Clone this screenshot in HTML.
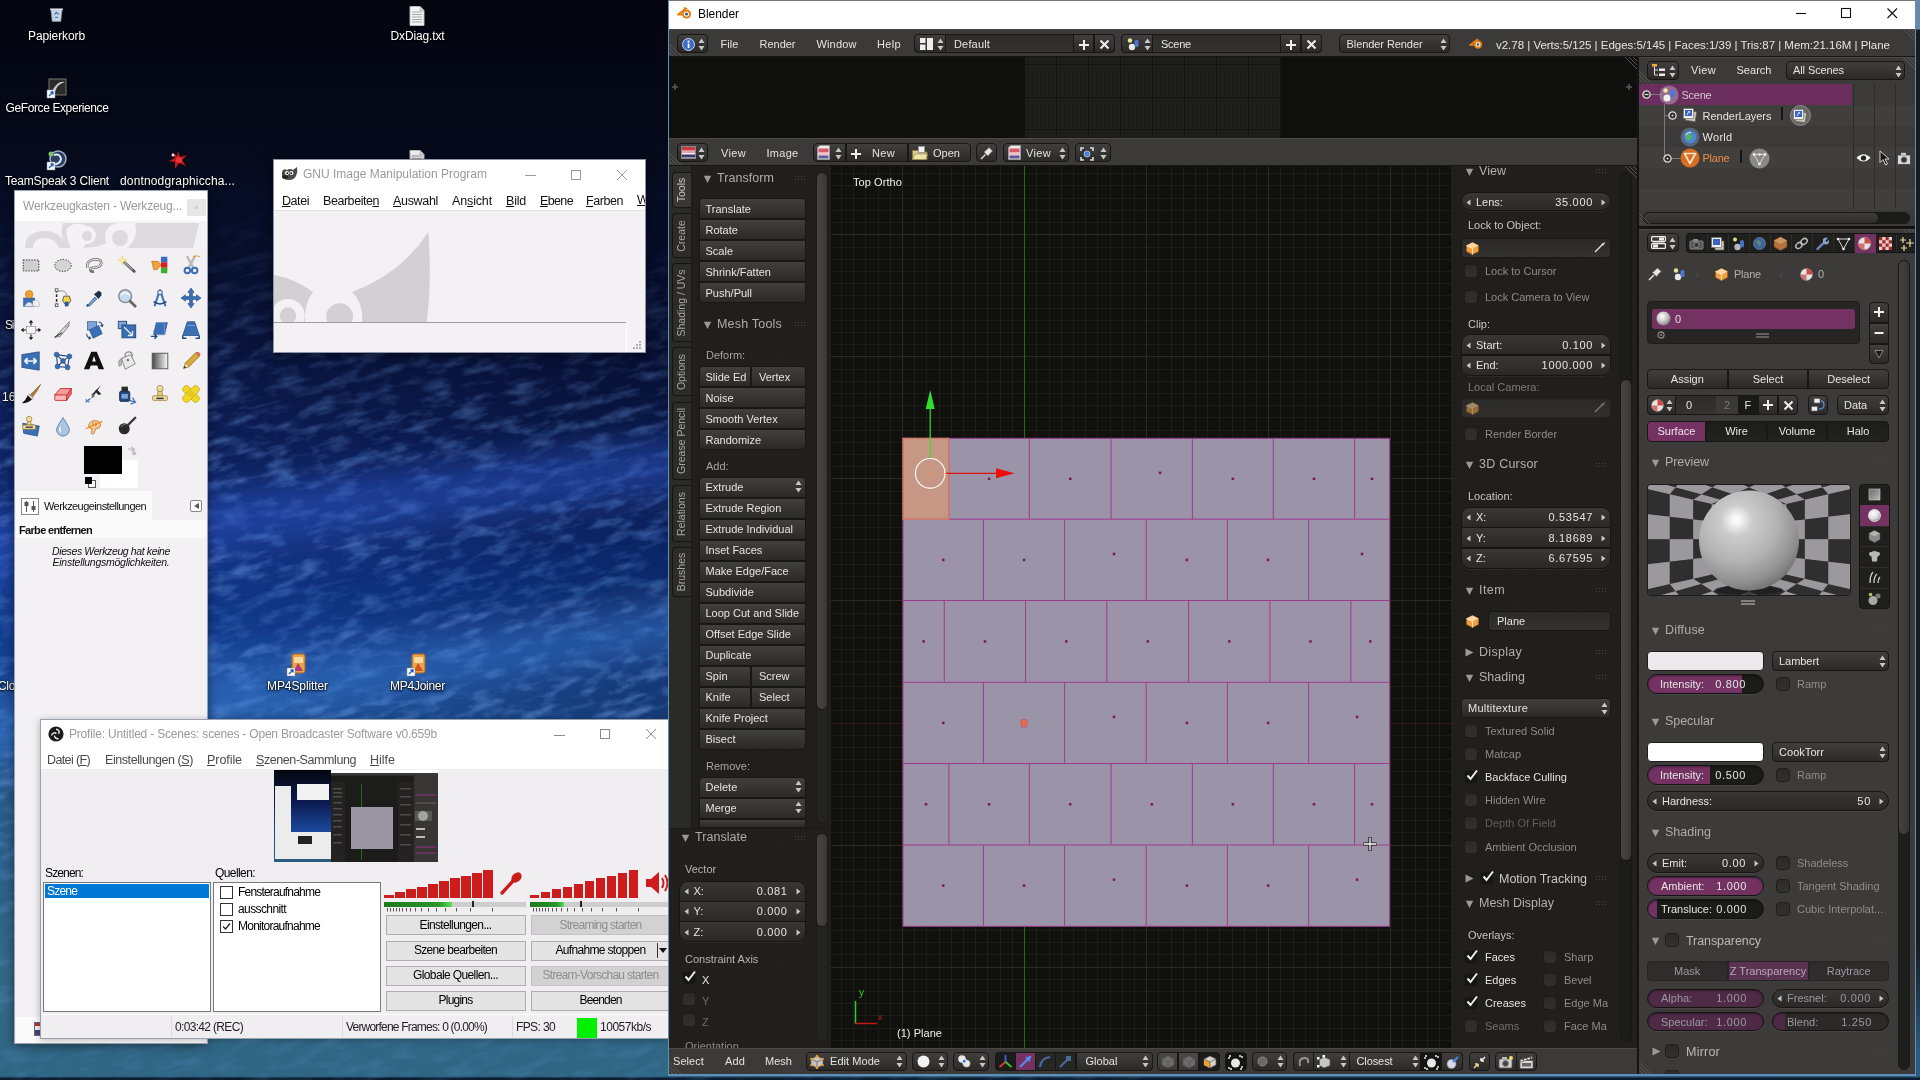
<!DOCTYPE html>
<html><head><meta charset="utf-8"><title>Desktop</title>
<style>
html,body{margin:0;padding:0;background:#000;}
body{width:1920px;height:1080px;overflow:hidden;position:relative;font-family:"Liberation Sans",sans-serif;font-size:11px;}
body div, body svg{position:absolute;box-sizing:border-box;}
#root{isolation:isolate;}
.bb{background:linear-gradient(#413f3d,#2b2a29);border:1px solid #171716;border-radius:4px;}
.nf{background:linear-gradient(#383736,#2a2928);border:1px solid #151514;border-radius:10px;box-shadow:0 1px 0 rgba(255,255,255,.06);}
.cb{background:linear-gradient(#2c2b2a,#353433);border:1px solid #1c1c1b;border-radius:3px;width:14px;height:14px;}
</style></head><body><div id="root" style="left:0;top:0;width:1920px;height:1080px;overflow:hidden;will-change:transform;">
<svg style="left:0;top:0" width="1920" height="1080" viewBox="0 0 1920 1080">
<defs>
<linearGradient id="wg" x1="0" y1="0" x2="0" y2="1">
<stop offset="0" stop-color="#03050f"/><stop offset="0.13" stop-color="#050919"/><stop offset="0.23" stop-color="#08102e"/>
<stop offset="0.32" stop-color="#0a1642"/><stop offset="0.42" stop-color="#0f2466"/><stop offset="0.52" stop-color="#153588"/>
<stop offset="0.60" stop-color="#1a479b"/><stop offset="0.67" stop-color="#1e5096"/><stop offset="0.74" stop-color="#285a88"/>
<stop offset="0.90" stop-color="#316886"/><stop offset="0.9965" stop-color="#306684"/><stop offset="0.9985" stop-color="#0c1c30"/>
</linearGradient>
<filter id="wn" x="0" y="0" width="100%" height="100%">
<feTurbulence type="fractalNoise" baseFrequency="0.035 0.1" numOctaves="4" seed="7" result="n"/>
<feColorMatrix in="n" type="matrix" values="0 0 0 0 0.20  0 0 0 0 0.42  0 0 0 0 0.92  0 0 0 2.6 -1.15"/>
</filter>
<linearGradient id="wm" x1="0" y1="0" x2="0" y2="1"><stop offset="0.18" stop-color="#000"/><stop offset="0.45" stop-color="#fff"/><stop offset="0.7" stop-color="#fff"/><stop offset="0.95" stop-color="#555"/></linearGradient>
<mask id="wmask"><rect width="1920" height="1080" fill="url(#wm)"/></mask>
</defs>
<rect width="1920" height="1080" fill="url(#wg)"/>
<linearGradient id="wd" gradientUnits="userSpaceOnUse" x1="690" y1="280" x2="250" y2="700"><stop offset="0" stop-color="#040922" stop-opacity=".6"/><stop offset="1" stop-color="#040922" stop-opacity="0"/></linearGradient><rect x="0" y="200" width="700" height="560" fill="url(#wd)"/>
<g mask="url(#wmask)"><g transform="rotate(-14 350 540)"><rect x="-200" y="-200" width="1200" height="1500" filter="url(#wn)" opacity="0.42"/></g></g>
<filter id="wb" x="-20%" y="-20%" width="140%" height="140%"><feGaussianBlur stdDeviation="16"/></filter>
<g filter="url(#wb)"><rect x="-60" y="478" width="800" height="56" fill="#2552c0" opacity=".55" transform="rotate(-7 340 505)"/><rect x="-60" y="655" width="800" height="50" fill="#3a78cc" opacity=".5" transform="rotate(-9 340 680)"/><rect x="-60" y="575" width="800" height="50" fill="#0c2a78" opacity=".35" transform="rotate(-8 340 600)"/></g>
</svg>
<div style="left:28.0px;top:27.5px;line-height:17px;font-size:12px;color:#fff;white-space:nowrap;letter-spacing:-0.103px;text-shadow:0 1px 2px #000,0 0 3px #000;">Papierkorb</div>
<div style="left:390.5px;top:27.5px;line-height:17px;font-size:12px;color:#fff;white-space:nowrap;letter-spacing:-0.135px;text-shadow:0 1px 2px #000,0 0 3px #000;">DxDiag.txt</div>
<div style="left:5.5px;top:100.0px;line-height:17px;font-size:12px;color:#fff;white-space:nowrap;letter-spacing:-0.391px;text-shadow:0 1px 2px #000,0 0 3px #000;">GeForce Experience</div>
<div style="left:5.0px;top:172.5px;line-height:17px;font-size:12px;color:#fff;white-space:nowrap;letter-spacing:-0.188px;text-shadow:0 1px 2px #000,0 0 3px #000;">TeamSpeak 3 Client</div>
<div style="left:120.0px;top:172.5px;line-height:17px;font-size:12px;color:#fff;white-space:nowrap;letter-spacing:0.146px;text-shadow:0 1px 2px #000,0 0 3px #000;">dontnodgraphiccha...</div>
<div style="left:267.0px;top:678.0px;line-height:17px;font-size:12px;color:#fff;white-space:nowrap;letter-spacing:-0.093px;text-shadow:0 1px 2px #000,0 0 3px #000;">MP4Splitter</div>
<div style="left:390.0px;top:678.0px;line-height:17px;font-size:12px;color:#fff;white-space:nowrap;letter-spacing:-0.262px;text-shadow:0 1px 2px #000,0 0 3px #000;">MP4Joiner</div>
<div style="left:5.0px;top:316.5px;line-height:17px;font-size:12px;color:#fff;white-space:nowrap;letter-spacing:-1.335px;text-shadow:0 1px 2px #000,0 0 3px #000;">Si</div>
<div style="left:2.0px;top:388.5px;line-height:17px;font-size:12px;color:#fff;white-space:nowrap;text-shadow:0 1px 2px #000,0 0 3px #000;">16</div>
<div style="left:-2.0px;top:677.5px;line-height:17px;font-size:12px;color:#fff;white-space:nowrap;letter-spacing:-0.335px;text-shadow:0 1px 2px #000,0 0 3px #000;">Clo</div>
<svg style="left:48px;top:5px;" width="17" height="19" viewBox="0 0 24 24"><path d="M4 5 L20 5 L18 22 L6 22 Z" fill="#c9d4e2" stroke="#7d8ea6" stroke-width="1"/><path d="M3 4.5 L21 4.5" stroke="#e8eef6" stroke-width="2"/><path d="M9 12 l3 -3 l3 3 m-1 4 l-4 0" stroke="#3d78c4" stroke-width="1.6" fill="none"/></svg>
<svg style="left:409px;top:6px;" width="16" height="20" viewBox="0 0 16 20"><path d="M1 0.5 H11 L15 4.5 V19.5 H1 Z" fill="#f4f4f4" stroke="#b8b8b8"/><path d="M3 6h10M3 8.5h10M3 11h10M3 13.5h10M3 16h10" stroke="#a8a8a8" stroke-width="1"/><path d="M11 0.5 V4.5 H15" fill="#ddd" stroke="#b8b8b8"/></svg>
<svg style="left:409px;top:150px;" width="16" height="20" viewBox="0 0 16 20"><path d="M1 0.5 H11 L15 4.5 V19.5 H1 Z" fill="#f4f4f4" stroke="#b8b8b8"/><path d="M3 6h10M3 8.5h10M3 11h10M3 13.5h10M3 16h10" stroke="#a8a8a8" stroke-width="1"/><path d="M11 0.5 V4.5 H15" fill="#ddd" stroke="#b8b8b8"/></svg>
<svg style="left:46px;top:77px;" width="22" height="22" viewBox="0 0 22 22"><rect x="3" y="2" width="17" height="16" fill="#2b2b2b" stroke="#777"/><path d="M6 14 Q12 3 19 5 Q11 7 9 15Z" fill="#cfcfcf"/><rect x="1" y="13" width="8" height="8" fill="#fff" stroke="#888" stroke-width=".5"/><path d="M3 19 L7 15 M4.5 15 H7 V17.5" stroke="#1d5fbf" stroke-width="1.3" fill="none"/></svg>
<svg style="left:46px;top:149px;" width="22" height="22" viewBox="0 0 22 22"><circle cx="12" cy="10" r="8" fill="#2c3f63" stroke="#9fb2cf" stroke-width="1.5"/><path d="M8 6 Q14 4 15 10 Q14 15 9 15" fill="none" stroke="#dfe8f5" stroke-width="2"/><circle cx="5" cy="5" r="2.5" fill="#7fc06a"/><rect x="1" y="13" width="8" height="8" fill="#fff" stroke="#888" stroke-width=".5"/><path d="M3 19 L7 15 M4.5 15 H7 V17.5" stroke="#1d5fbf" stroke-width="1.3" fill="none"/></svg>
<svg style="left:167px;top:149px;" width="22" height="22" viewBox="0 0 22 22"><path d="M11 2 L13 8 L20 6 L15 11 L19 17 L12 14 L8 20 L8 13 L2 12 L8 9 L5 3 L10 7Z" fill="#c41818"/><circle cx="12" cy="11" r="3" fill="#e33"/><circle cx="6" cy="6" r="1.5" fill="#ddd"/></svg>
<svg style="left:286px;top:653px;" width="22" height="24" viewBox="0 0 22 24"><rect x="6" y="1" width="13" height="19" rx="2" fill="#e8a24a" stroke="#a8641c"/><rect x="8" y="4" width="9" height="6" fill="#f6d9a0"/><path d="M12 10 l5 8 h-9z" fill="#b33a7a"/><rect x="1" y="15" width="8" height="8" fill="#fff" stroke="#888" stroke-width=".5"/><path d="M3 21 L7 17 M4.5 17 H7 V19.5" stroke="#1d5fbf" stroke-width="1.3" fill="none"/></svg>
<svg style="left:406px;top:653px;" width="22" height="24" viewBox="0 0 22 24"><rect x="6" y="1" width="13" height="19" rx="2" fill="#e8a24a" stroke="#a8641c"/><rect x="8" y="4" width="9" height="6" fill="#f6d9a0"/><path d="M12 10 l5 8 h-9z" fill="#d0541c"/><rect x="1" y="15" width="8" height="8" fill="#fff" stroke="#888" stroke-width=".5"/><path d="M3 21 L7 17 M4.5 17 H7 V19.5" stroke="#1d5fbf" stroke-width="1.3" fill="none"/></svg>
<div style="left:14px;top:190px;width:194px;height:854px;background:#f2f0f2;box-shadow:0 2px 10px rgba(0,0,0,.45);border:1px solid #9aa3b4;"></div>
<div style="left:15px;top:191px;width:192px;height:30px;background:#fff;"></div>
<div style="left:23.0px;top:197.5px;line-height:17px;font-size:12px;color:#9a9a9a;white-space:nowrap;letter-spacing:-0.165px;">Werkzeugkasten - Werkzeug...</div>
<div style="left:187px;top:199px;width:19px;height:17px;background:#e6e6e6;"></div>
<div style="left:195px;top:206px;width:3px;height:3px;background:#d0d0d0;"></div>
<div style="left:15px;top:221px;width:192px;height:27px;background:#f4f2f4;overflow:hidden;"><svg style="left:8px;top:2px" width="176" height="25" viewBox="0 0 176 25"><g fill="#dcdadc">
<path d="M2 25 Q2 8 22 8 Q38 8 44 25 H36 Q32 15 22 15 Q10 15 10 25Z"/>
<path d="M40 0 H100 Q92 25 60 25 Q70 12 62 2 Q50 -2 44 6 Q42 12 48 25 H44 Q36 12 40 0Z"/>
<circle cx="64" cy="12" r="9" fill="#f4f2f4"/><circle cx="64" cy="13" r="5"/>
<circle cx="96" cy="14" r="14" fill="#f4f2f4"/><circle cx="97" cy="15" r="8"/>
<path d="M112 0 H176 L170 25 H104 Q116 16 112 0Z"/>
</g></svg></div>
<svg style="left:20px;top:254px;" width="22" height="22" viewBox="0 0 24 24"><rect x="3.5" y="6.5" width="17" height="12" fill="#cfcfcf" stroke="#222" stroke-dasharray="1.5 1.5"/></svg>
<svg style="left:51.5px;top:254px;" width="22" height="22" viewBox="0 0 24 24"><ellipse cx="12" cy="12.5" rx="9" ry="6.5" fill="#d4d4d4" stroke="#222" stroke-dasharray="1.5 1.5"/></svg>
<svg style="left:83px;top:254px;" width="22" height="22" viewBox="0 0 24 24"><path d="M5 15 Q3 8 11 6 Q20 5 20 10 Q19 15 11 15 Q8 15 8 17 Q8 20 12 19" fill="none" stroke="#6e6e6e" stroke-width="2.800"/><path d="M5 15 Q3 8 11 6 Q20 5 20 10 Q19 15 11 15 Q8 15 8 17" fill="none" stroke="#e4e4e4" stroke-width="1.200"/></svg>
<svg style="left:116px;top:254px;" width="22" height="22" viewBox="0 0 24 24"><path d="M9 9 L20 19" stroke="#555" stroke-width="3" stroke-linecap="round"/><path d="M9 9 L18 17" stroke="#b8b8b8" stroke-width="1.2"/><path d="M7 2 L8.200 5.800 L12 7 L8.200 8.200 L7 12 L5.800 8.200 L2 7 L5.800 5.800Z" fill="#fff29a" stroke="#e4c84a" stroke-width=".5"/></svg>
<svg style="left:149px;top:254px;" width="22" height="22" viewBox="0 0 24 24"><rect x="13" y="3" width="7" height="6" fill="#3b6ec2"/><rect x="13" y="9" width="7" height="6" fill="#d42020"/><rect x="13" y="15" width="7" height="6" fill="#3cae2e"/><path d="M3 8 h7 l3 4 l-4 5 h-4 z" fill="#f2a23a" stroke="#b86e10" stroke-width=".7"/></svg>
<svg style="left:180px;top:254px;" width="22" height="22" viewBox="0 0 24 24"><path d="M8 3 L14 14 M16 3 L10 14" stroke="#b9b9b9" stroke-width="2.6" stroke-linecap="round"/><circle cx="8" cy="18" r="3" fill="none" stroke="#3a6fb5" stroke-width="2.2"/><circle cx="16" cy="18" r="3" fill="none" stroke="#3a6fb5" stroke-width="2.2"/><path d="M14 3 q5 -2 8 0" stroke="#d8a020" fill="none"/></svg>
<svg style="left:20px;top:286.5px;" width="22" height="22" viewBox="0 0 24 24"><rect x="4" y="12" width="12" height="9" fill="#3a6fb5" stroke="#234a80" stroke-width=".6"/><circle cx="10" cy="8" r="4.2" fill="#f0a030" stroke="#b86e10" stroke-width=".6"/><path d="M5 21 q5-9 10 0z" fill="#dfe6f0"/><path d="M14 15 q6 -2 7 3 v3 h-7z" fill="#f4f4f4" stroke="#999" stroke-width=".6"/></svg>
<svg style="left:51.5px;top:286.5px;" width="22" height="22" viewBox="0 0 24 24"><path d="M5 3 v18" stroke="#222" stroke-width="1.6" stroke-dasharray="3 2"/><rect x="3.5" y="2" width="3" height="3" fill="#fff" stroke="#222" stroke-width=".7"/><rect x="3.5" y="18.5" width="3" height="3" fill="#fff" stroke="#222" stroke-width=".7"/><path d="M6 5 Q15 2 16 9" fill="none" stroke="#888"/><path d="M13 10 h6 l1.5 5 l-4.5 6 l-4.5-6z" fill="#f3d34a" stroke="#333" stroke-width=".8"/><rect x="14" y="16" width="4" height="5" fill="#2b58a0"/></svg>
<svg style="left:83px;top:286.5px;" width="22" height="22" viewBox="0 0 24 24"><path d="M5 20 L13 11 L15 13 L7 21 Z" fill="#7ea6d8" stroke="#234a80" stroke-width=".8"/><path d="M12 8 l5 5 l3 -4 q1 -4 -3 -5 z" fill="#1d2d4a"/><path d="M4 21 l2 -2" stroke="#234a80" stroke-width="2"/></svg>
<svg style="left:116px;top:286.5px;" width="22" height="22" viewBox="0 0 24 24"><circle cx="10" cy="10" r="7" fill="#c6d9ee" stroke="#8a8f96" stroke-width="1.6"/><path d="M5 9 q5 -5 10 0" stroke="#fff" stroke-width="1.2" fill="none"/><path d="M15.5 15.5 L21 21" stroke="#666" stroke-width="3" stroke-linecap="round"/></svg>
<svg style="left:149px;top:286.5px;" width="22" height="22" viewBox="0 0 24 24"><path d="M12 3 L6 21 M12 3 L18 21" stroke="#3a6fb5" stroke-width="2.2"/><circle cx="12" cy="6" r="2.6" fill="#dfe6f0" stroke="#234a80"/><path d="M5 16 q7 5 14 0" fill="none" stroke="#234a80" stroke-width="1.6"/></svg>
<svg style="left:180px;top:286.5px;" width="22" height="22" viewBox="0 0 24 24"><path d="M12 1 L15.500 6 H13.600 V10.400 H18 V8.500 L23 12 L18 15.500 V13.600 H13.600 V18 H15.500 L12 23 L8.500 18 H10.400 V13.600 H6 V15.500 L1 12 L6 8.500 V10.400 H10.400 V6 H8.500 Z" fill="#3a6fb5" stroke="#234a80" stroke-width=".6"/></svg>
<svg style="left:20px;top:318.5px;" width="22" height="22" viewBox="0 0 24 24"><rect x="7" y="8" width="10" height="8" fill="#f6f6f6" stroke="#888" stroke-width=".7"/><path d="M12 1 l2.5 3 h-5z M12 23 l2.5 -3 h-5z M1 12 l3 -2.5 v5z M23 12 l-3 -2.5 v5z" fill="#111"/><path d="M12 4v3M12 17v3M4 12h2.5M17.5 12h2.5" stroke="#111" stroke-width="1.2"/></svg>
<svg style="left:51.5px;top:318.5px;" width="22" height="22" viewBox="0 0 24 24"><path d="M3 20 L17 5 L19 3 L18 8 L9 19 Z" fill="#d8d8d8" stroke="#666" stroke-width=".8"/><path d="M3 20 L11 15" stroke="#444" stroke-width="1.2"/><path d="M14 9 l5 -2" stroke="#888"/></svg>
<svg style="left:83px;top:318.5px;" width="22" height="22" viewBox="0 0 24 24"><rect x="5" y="3" width="10" height="9" fill="#7ea6d8" stroke="#234a80" stroke-width=".7"/><path d="M7 12 L17 7 L21 16 L11 21 Z" fill="#3a6fb5" stroke="#234a80" stroke-width=".7"/><path d="M17 3 q4 1 4 5 l-2 -1 m2 1 l1 -2" stroke="#234a80" fill="none" stroke-width="1.2"/><path d="M4 16 q0 4 4 5 l-1 -2 m1 2 l-2 1" stroke="#234a80" fill="none" stroke-width="1.2"/></svg>
<svg style="left:116px;top:318.5px;" width="22" height="22" viewBox="0 0 24 24"><rect x="2.5" y="2.5" width="9" height="8" fill="#7ea6d8" stroke="#234a80"/><rect x="6.5" y="6.5" width="15" height="14" fill="#3a6fb5" stroke="#234a80"/><path d="M9 9 L18 18 M18 18 v-5 M18 18 h-5" stroke="#eaf1fa" stroke-width="1.4" fill="none"/></svg>
<svg style="left:149px;top:318.5px;" width="22" height="22" viewBox="0 0 24 24"><path d="M8 4 H20 L17 17 H5 Z" fill="#3a6fb5" stroke="#234a80" stroke-width=".8"/><path d="M8 4 H17 V17 H5 V12" fill="none" stroke="#7ea6d8" stroke-width=".8"/><path d="M2 19 h6 m-2 -2.5 l2.5 2.5 l-2.5 2.5" stroke="#234a80" stroke-width="1.5" fill="none"/></svg>
<svg style="left:180px;top:318.5px;" width="22" height="22" viewBox="0 0 24 24"><path d="M8 3 H16 L21 18 H3 Z" fill="#3a6fb5" stroke="#234a80" stroke-width=".8"/><path d="M8 7 H16" stroke="#7ea6d8"/><path d="M3 18 v3 h4 M21 18 v3 h-4" stroke="#234a80" stroke-width="1.6" fill="none"/></svg>
<svg style="left:20px;top:350px;" width="22" height="22" viewBox="0 0 24 24"><path d="M2 5 L21 2 V22 L2 19 Z" fill="#3a6fb5" stroke="#234a80" stroke-width=".8"/><path d="M5 12 h13 M5 12 l3.5 -3 M5 12 l3.5 3 M18 12 l-3.5 -3 M18 12 l-3.5 3" stroke="#eef4fb" stroke-width="1.8" fill="none"/></svg>
<svg style="left:51.5px;top:350px;" width="22" height="22" viewBox="0 0 24 24"><path d="M5 5 L19 7 L17 19 L6 18 Z M5 5 L12 12 L19 7 M6 18 L12 12 L17 19" fill="none" stroke="#234a80" stroke-width="1.2"/><g fill="#3a6fb5" stroke="#234a80" stroke-width=".7"><circle cx="5" cy="5" r="2.6"/><circle cx="19" cy="7" r="2.6"/><circle cx="17" cy="19" r="2.6"/><circle cx="6" cy="18" r="2.6"/><circle cx="12" cy="12" r="2.6"/></g></svg>
<svg style="left:83px;top:350px;" width="22" height="22" viewBox="0 0 24 24"><path d="M1 21 L9 2 H15 L23 21 H17 L15.6 17 H8.4 L7 21 Z M10 12.5 H14 L12 6.5 Z" fill="#111" fill-rule="evenodd"/></svg>
<svg style="left:116px;top:350px;" width="22" height="22" viewBox="0 0 24 24"><path d="M6 9 L16 5 L21 15 L10 21 Z" fill="#e9e9e9" stroke="#777" stroke-width=".9"/><path d="M10 8 q-1 -6 4 -6 q4 0 4 5" fill="none" stroke="#888" stroke-width="1.3"/><path d="M6 9 q-4 2 -3 8 q1 2 3 -1z" fill="#b9b9b9" stroke="#777" stroke-width=".6"/><circle cx="13" cy="11" r="1.3" fill="#666"/></svg>
<svg style="left:149px;top:350px;" width="22" height="22" viewBox="0 0 24 24"><defs><linearGradient id="gbl" x1="0" x2="1"><stop offset="0" stop-color="#4a4a4a"/><stop offset="1" stop-color="#fafafa"/></linearGradient></defs><rect x="3.5" y="3.5" width="17" height="17" fill="url(#gbl)" stroke="#555"/></svg>
<svg style="left:180px;top:350px;" width="22" height="22" viewBox="0 0 24 24"><path d="M4 20 L6 14 L17 3 L21 7 L10 18 Z" fill="#d8aa3c" stroke="#8a6a18" stroke-width=".8"/><path d="M4 20 L6 14 L10 18 Z" fill="#f3dcb0" stroke="#a86c10" stroke-width=".6"/><path d="M17 3 l4 4 l1.2 -1.2 q.6 -1.8 -1.2 -3 q-1.5 -1.2 -2.8 -.8z" fill="#d86a5a"/><path d="M4 20 l1 -2.6 l1.6 1.6z" fill="#222"/></svg>
<svg style="left:20px;top:383px;" width="22" height="22" viewBox="0 0 24 24"><path d="M22.500 1.500 Q17 7 11 13 L13.500 15.500 Q19 9 22.500 1.500Z" fill="#b87a3a" stroke="#6e4218" stroke-width=".6"/><path d="M10 12 L14.500 16.500 L13 18 L8.500 13.500Z" fill="#e0e0e0" stroke="#888" stroke-width=".6"/><path d="M8.500 13.500 L13 18 Q9 22 2 22 Q6 19 8.500 13.500Z" fill="#111"/></svg>
<svg style="left:51.5px;top:383px;" width="22" height="22" viewBox="0 0 24 24"><path d="M3 13 L9 6 H21 L16 14 Z" fill="#f59a9a" stroke="#c22" stroke-width=".9"/><path d="M3 13 H16 V19 H4 Q3 19 3 18 Z" fill="#f7baba" stroke="#c22" stroke-width=".9"/><path d="M16 14 L21 6 V12 L16 19Z" fill="#e36e6e" stroke="#c22" stroke-width=".9"/></svg>
<svg style="left:83px;top:383px;" width="22" height="22" viewBox="0 0 24 24"><path d="M20 2 L9 13 L11 15 Z" fill="#333"/><path d="M10 12 l3 3 l-4 2 z" fill="#777"/><path d="M13 9 l4 4 l3 -1 l-5 -5z" fill="#222"/><path d="M3 21 l5 -4 M3 18 l1 1 M6 21 l1 -1" stroke="#3a6fb5" stroke-width="1.4"/></svg>
<svg style="left:116px;top:383px;" width="22" height="22" viewBox="0 0 24 24"><rect x="4" y="9" width="11" height="11" rx="1.5" fill="#234a80" stroke="#13284a"/><rect x="6" y="4" width="7" height="5" fill="#2a2a2a"/><rect x="6" y="12" width="7" height="5" fill="#7ea6d8"/><path d="M15 19 l6 2 l-3 -5 m3 5 l-5 2" stroke="#3a6fb5" stroke-width="1.3" fill="none"/></svg>
<svg style="left:149px;top:383px;" width="22" height="22" viewBox="0 0 24 24"><circle cx="12" cy="6" r="3.4" fill="#f1dfa8" stroke="#9a7a2a" stroke-width=".8"/><path d="M10 9 h4 l1 5 h-6z" fill="#e9d08a" stroke="#9a7a2a" stroke-width=".8"/><rect x="4" y="14" width="16" height="5" rx="1" fill="#f1dfa8" stroke="#9a7a2a" stroke-width=".8"/><rect x="8" y="16" width="8" height="1.6" fill="#333"/></svg>
<svg style="left:180px;top:383px;" width="22" height="22" viewBox="0 0 24 24"><g transform="rotate(45 12 12)"><rect x="1" y="8" width="22" height="8" rx="3.5" fill="#f0d82a" stroke="#c0a000" stroke-width=".7"/></g><g transform="rotate(-45 12 12)"><rect x="1" y="8" width="22" height="8" rx="3.5" fill="#f0d82a" stroke="#c0a000" stroke-width=".7"/><rect x="9" y="9" width="6" height="6" fill="#e4c81c"/></g></svg>
<svg style="left:20px;top:415px;" width="22" height="22" viewBox="0 0 24 24"><path d="M3 9 L21 12 L19 23 L4 20 Z" fill="#3a6fb5" stroke="#234a80" stroke-width=".8"/><circle cx="10" cy="4.5" r="3" fill="#f1dfa8" stroke="#9a7a2a" stroke-width=".8"/><path d="M8.5 7 h3 l1 4 h-5z" fill="#e9d08a" stroke="#9a7a2a" stroke-width=".7"/><rect x="3" y="11" width="14" height="4.5" rx="1" fill="#f1dfa8" stroke="#9a7a2a" stroke-width=".8"/><rect x="6" y="12.6" width="8" height="1.4" fill="#333"/></svg>
<svg style="left:51.5px;top:415px;" width="22" height="22" viewBox="0 0 24 24"><path d="M12 3 Q19 13 19 16 A7 7 0 0 1 5 16 Q5 13 12 3Z" fill="#a9c6e6" stroke="#5c7fa8" stroke-width="1"/><path d="M9 13 q-1.5 3 .5 5" stroke="#fff" stroke-width="1.4" fill="none"/></svg>
<svg style="left:83px;top:415px;" width="22" height="22" viewBox="0 0 24 24"><path d="M6 12 q1 -6 8 -6 q6 1 5 6 q-1 3 -5 3 l-2 5 q-2 2 -3 0 l1 -5 q-3 0 -4 -3z" fill="#f6c894" stroke="#c0742a" stroke-width=".9"/><path d="M3 15 L21 7" stroke="#e8901c" stroke-width="1.4"/><path d="M11 8 v4 M14 8 v4" stroke="#c0742a" stroke-width=".8"/></svg>
<svg style="left:116px;top:415px;" width="22" height="22" viewBox="0 0 24 24"><circle cx="9" cy="15" r="6" fill="#2a2a2a"/><path d="M13 11 L21 3" stroke="#3a3a3a" stroke-width="2.6" stroke-linecap="round"/><path d="M5.5 13 q2 -3 5 -2.5" stroke="#777" fill="none" stroke-width="1.2"/></svg>
<div style="left:100px;top:460px;width:38px;height:28px;background:#fff;"></div>
<div style="left:84px;top:446px;width:38px;height:28px;background:#000;"></div>
<div style="left:88px;top:480px;width:8px;height:8px;background:#fff;border:1px solid #555;"></div>
<div style="left:84.5px;top:476.5px;width:7px;height:7px;background:#000;"></div>
<svg style="left:126px;top:445px;" width="13" height="14" viewBox="0 0 13 14"><path d="M2 4 h6 v6 M8 4 l-2.5 -2 M8 4 l-2.5 2.2 M8 10 l-2 -2.5 M8 10 l2.2 -2.5" stroke="#b8b8b8" fill="none" stroke-width="1.2"/></svg>
<div style="left:16px;top:520px;width:190px;height:18px;background:#fbfafb;"></div>
<div style="left:16px;top:491px;width:136px;height:30px;background:#fbfafb;"></div>
<div style="left:21px;top:498px;width:18px;height:17px;background:#fff;border:1px solid #8c8c8c;"><svg style="left:1px;top:2px" width="14" height="11" viewBox="0 0 14 11"><path d="M3.5 0v11M10.5 0v11" stroke="#555" stroke-width="1"/><rect x="1.5" y="1" width="4" height="4" fill="#555"/><rect x="8.5" y="5" width="4" height="4" fill="#555"/></svg></div>
<div style="left:44.0px;top:499.0px;line-height:15px;font-size:11px;color:#111;white-space:nowrap;letter-spacing:-0.578px;">Werkzeugeinstellungen</div>
<div style="left:190px;top:500px;width:12px;height:12px;background:#fdfdfd;border:1px solid #888;border-radius:2px;"><svg style="left:1px;top:1px" width="8" height="8" viewBox="0 0 8 8"><path d="M7 1 L2 4 L7 7Z" fill="#555"/></svg></div>
<div style="left:19.0px;top:523.0px;line-height:15px;font-size:11px;color:#111;white-space:nowrap;letter-spacing:-0.675px;font-weight:bold;">Farbe entfernen</div>
<div style="left:19px;top:538px;width:186px;height:479px;background:#f3f1f3;"></div>
<div style="left:52.0px;top:543.5px;line-height:15px;font-size:10.5px;color:#111;white-space:nowrap;letter-spacing:-0.385px;font-style:italic;">Dieses Werkzeug hat keine</div>
<div style="left:52.5px;top:555.0px;line-height:15px;font-size:10.5px;color:#111;white-space:nowrap;letter-spacing:-0.259px;font-style:italic;">Einstellungsmöglichkeiten.</div>
<div style="left:16px;top:1017px;width:190px;height:26px;background:#fbfafb;"></div>
<div style="left:34px;top:1022px;width:7px;height:14px;background:linear-gradient(#b33 0,#b33 25%,#eee 25%,#eee 55%,#447 55%);border:1px solid #668;"></div>
<div style="left:273px;top:159px;width:373px;height:194px;background:#f3f1f3;box-shadow:0 2px 10px rgba(0,0,0,.5);border:1px solid #8d94a6;"></div>
<div style="left:274px;top:160px;width:371px;height:50px;background:#fff;"></div>
<div style="left:274px;top:210px;width:371px;height:1px;background:#e2e0e2;"></div>
<svg style="left:281px;top:166px;" width="18" height="16" viewBox="0 0 18 16"><path d="M1 6 Q2 2 6 4 Q9 2 12 4 L16 1 Q17 6 15 10 Q13 14 8 14 Q2 14 1 10Z" fill="#4a4a4a"/><circle cx="6" cy="7" r="2" fill="#fff"/><circle cx="10.5" cy="7" r="2" fill="#fff"/><circle cx="6.3" cy="7.2" r=".9" fill="#111"/><circle cx="10.2" cy="7.2" r=".9" fill="#111"/><ellipse cx="4" cy="11" rx="3" ry="1.8" fill="#222"/></svg>
<div style="left:303.0px;top:166.0px;line-height:17px;font-size:12px;color:#9a9a9a;white-space:nowrap;letter-spacing:-0.002px;">GNU Image Manipulation Program</div>
<svg style="left:524px;top:167px;" width="110" height="16" viewBox="0 0 110 16"><path d="M1 8.5 h11" stroke="#9a9a9a"/><rect x="47.5" y="3.5" width="9" height="9" fill="none" stroke="#9a9a9a"/><path d="M93 3 l10 10 M103 3 l-10 10" stroke="#9a9a9a"/></svg>
<div style="left:282px;top:191.5px;line-height:18px;font-size:12.5px;color:#111;white-space:nowrap;letter-spacing:-0.436px"><u>D</u>atei</div>
<div style="left:323px;top:191.5px;line-height:18px;font-size:12.5px;color:#111;white-space:nowrap;letter-spacing:-0.446px">Bearbeite<u>n</u></div>
<div style="left:393px;top:191.5px;line-height:18px;font-size:12.5px;color:#111;white-space:nowrap;letter-spacing:-0.321px"><u>A</u>uswahl</div>
<div style="left:452px;top:191.5px;line-height:18px;font-size:12.5px;color:#111;white-space:nowrap;letter-spacing:-0.141px">An<u>s</u>icht</div>
<div style="left:506px;top:191.5px;line-height:18px;font-size:12.5px;color:#111;white-space:nowrap;letter-spacing:-0.211px"><u>B</u>ild</div>
<div style="left:540px;top:191.5px;line-height:18px;font-size:12.5px;color:#111;white-space:nowrap;letter-spacing:-0.629px"><u>E</u>bene</div>
<div style="left:586px;top:191.5px;line-height:18px;font-size:12.5px;color:#111;white-space:nowrap;letter-spacing:-0.434px"><u>F</u>arben</div>
<div style="left:637px;top:191px;width:8px;height:18px;overflow:hidden;"><div style="left:0;top:0;line-height:18px;font-size:12.5px;color:#111;"><u>W</u></div></div>
<div style="left:274px;top:211px;width:371px;height:141px;background:#f3f1f3;overflow:hidden;"><svg style="left:0;top:0" width="371" height="112" viewBox="0 0 371 112"><g fill="#d2d0d2">
<path d="M78 81 Q128 62 154.300 21 Q158 70 152.700 112 L88 112 Q90 92 78 81Z"/>
<path d="M0 64 Q22 68 39 81 Q30 92 31 112 L0 112Z"/></g>
<circle cx="14" cy="104.600" r="16.700" fill="#f3f1f3"/><circle cx="65.600" cy="105.700" r="22.500" fill="#f3f1f3"/>
<g fill="#d2d0d2"><circle cx="14" cy="104.600" r="8.300"/><circle cx="65.600" cy="105.700" r="13.500"/></g></svg></div>
<div style="left:274px;top:322px;width:352px;height:1px;background:#9c9c9c;"></div>
<div style="left:626px;top:323px;width:1px;height:28px;background:#fff;"></div>
<svg style="left:632px;top:340px;" width="10" height="10" viewBox="0 0 10 10"><g fill="#b0b0b0"><rect x="7" y="1" width="2" height="2"/><rect x="4" y="4" width="2" height="2"/><rect x="7" y="4" width="2" height="2"/><rect x="1" y="7" width="2" height="2"/><rect x="4" y="7" width="2" height="2"/><rect x="7" y="7" width="2" height="2"/></g></svg>
<div style="left:40px;top:719px;width:642px;height:320px;background:#f0eef0;box-shadow:0 1px 7px rgba(0,0,0,.28);border:1px solid #9aa0ae;"></div>
<div style="left:41px;top:720px;width:640px;height:49px;background:#fff;"></div>
<svg style="left:48px;top:726px;" width="16" height="16" viewBox="0 0 16 16"><circle cx="8" cy="8" r="7.6" fill="#1a1a1a"/><path d="M8 3.2 a3 3 0 0 1 2.6 4.6 M3.6 9.5 a3 3 0 0 1 4.8 -2 M10.6 12.6 a3 3 0 0 1 -4 -3" stroke="#e8e8e8" stroke-width="1.5" fill="none"/></svg>
<div style="left:69.0px;top:726.0px;line-height:17px;font-size:12px;color:#9a9a9a;white-space:nowrap;letter-spacing:-0.193px;">Profile: Untitled - Scenes: scenes - Open Broadcaster Software v0.659b</div>
<svg style="left:553px;top:727px;" width="110" height="16" viewBox="0 0 110 16"><path d="M1 8.5 h11" stroke="#8a8a8a"/><rect x="47.5" y="2.5" width="9" height="9" fill="none" stroke="#8a8a8a"/><path d="M93 2 l10 10 M103 2 l-10 10" stroke="#8a8a8a"/></svg>
<div style="left:47px;top:750.5px;line-height:18px;font-size:12.5px;color:#4a4a4a;white-space:nowrap;letter-spacing:-0.623px">Datei (<u>F</u>)</div>
<div style="left:105px;top:750.5px;line-height:18px;font-size:12.5px;color:#4a4a4a;white-space:nowrap;letter-spacing:-0.423px">Einstellungen (<u>S</u>)</div>
<div style="left:207px;top:750.5px;line-height:18px;font-size:12.5px;color:#4a4a4a;white-space:nowrap;letter-spacing:-0.061px"><u>P</u>rofile</div>
<div style="left:256px;top:750.5px;line-height:18px;font-size:12.5px;color:#4a4a4a;white-space:nowrap;letter-spacing:-0.420px"><u>S</u>zenen-Sammlung</div>
<div style="left:370px;top:750.5px;line-height:18px;font-size:12.5px;color:#4a4a4a;white-space:nowrap;letter-spacing:-0.001px"><u>H</u>ilfe</div>
<div style="left:274px;top:770px;width:164px;height:92px;background:#0b0f1e;overflow:hidden;"><svg style="left:0;top:0" width="164" height="92" viewBox="0 0 164 92">
<defs><linearGradient id="pv" x1="0" y1="0" x2="0" y2="1"><stop offset="0" stop-color="#04060f"/><stop offset=".35" stop-color="#0c1b50"/><stop offset=".65" stop-color="#1a479b"/><stop offset="1" stop-color="#2c5e80"/></linearGradient></defs>
<rect width="57" height="92" fill="url(#pv)"/>
<rect x="1" y="16" width="16" height="73" fill="#ececec"/><rect x="23" y="14" width="32" height="16" fill="#f2f2f2"/>
<rect x="3" y="62" width="54" height="27" fill="#ececec"/><rect x="24" y="66" width="14" height="8" fill="#222"/>
<rect x="57" y="0" width="107" height="92" fill="#1c1c1b"/><rect x="57" y="0" width="107" height="3" fill="#fff"/>
<rect x="57" y="3" width="107" height="2.500" fill="#3a3938"/><rect x="57" y="12" width="14" height="80" fill="#242322"/><rect x="124" y="12" width="16" height="80" fill="#242322"/><rect x="140" y="5" width="24" height="87" fill="#373635"/>
<path d="M87.500 14 V90" stroke="#1f6a1f" stroke-width="1"/><rect x="77" y="37" width="42" height="42" fill="#9c96a4"/>
<circle cx="149" cy="46" r="5" fill="#ccc"/><rect x="141" y="41" width="17" height="10" fill="#777" opacity=".5"/>
<g fill="#4c4c4b"><rect x="59" y="18" width="9" height="1.5"/><rect x="59" y="22" width="9" height="1.5"/><rect x="59" y="26" width="9" height="1.5"/><rect x="59" y="32" width="9" height="1.5"/><rect x="59" y="38" width="9" height="1.5"/><rect x="59" y="44" width="9" height="1.5"/><rect x="59" y="50" width="9" height="1.5"/><rect x="59" y="56" width="9" height="1.5"/><rect x="59" y="64" width="9" height="1.5"/><rect x="59" y="72" width="9" height="1.5"/>
<rect x="126" y="18" width="11" height="1.5"/><rect x="126" y="26" width="11" height="1.5"/><rect x="126" y="34" width="11" height="1.5"/><rect x="126" y="44" width="11" height="1.5"/><rect x="126" y="54" width="11" height="1.5"/><rect x="126" y="64" width="11" height="1.5"/><rect x="126" y="74" width="11" height="1.5"/>
<rect x="142" y="24" width="20" height="2" fill="#6a3060"/><rect x="142" y="32" width="20" height="2"/><rect x="142" y="58" width="9" height="2" fill="#bbb"/><rect x="142" y="66" width="9" height="2" fill="#bbb"/><rect x="142" y="76" width="20" height="2" fill="#6a3060"/><rect x="142" y="82" width="20" height="2" fill="#6a3060"/></g>
</svg></div>
<div style="left:45.0px;top:864.5px;line-height:17px;font-size:12px;color:#000;white-space:nowrap;letter-spacing:-0.862px;">Szenen:</div>
<div style="left:215.0px;top:864.5px;line-height:17px;font-size:12px;color:#000;white-space:nowrap;letter-spacing:-0.587px;">Quellen:</div>
<div style="left:43px;top:882px;width:168px;height:130px;background:#fff;border:1px solid #7a7a7a;"></div>
<div style="left:45px;top:884px;width:164px;height:14px;background:#0078d7;"></div>
<div style="left:47.0px;top:882.5px;line-height:17px;font-size:12px;color:#fff;white-space:nowrap;letter-spacing:-0.805px;">Szene</div>
<div style="left:213px;top:882px;width:168px;height:130px;background:#fff;border:1px solid #7a7a7a;"></div>
<div style="left:220px;top:886.0px;width:13px;height:13px;background:#fff;border:1px solid #333;"></div>
<div style="left:238.0px;top:884.0px;line-height:17px;font-size:12px;color:#000;white-space:nowrap;letter-spacing:-0.803px;">Fensteraufnahme</div>
<div style="left:220px;top:903.2px;width:13px;height:13px;background:#fff;border:1px solid #333;"></div>
<div style="left:238.0px;top:901.2px;line-height:17px;font-size:12px;color:#000;white-space:nowrap;letter-spacing:-0.603px;">ausschnitt</div>
<div style="left:220px;top:920.4px;width:13px;height:13px;background:#fff;border:1px solid #333;"><svg style="left:0;top:0" width="11" height="11" viewBox="0 0 11 11"><path d="M2 5.5 L4.5 8 L9 2.5" stroke="#222" stroke-width="1.3" fill="none"/></svg></div>
<div style="left:238.0px;top:918.4px;line-height:17px;font-size:12px;color:#000;white-space:nowrap;letter-spacing:-0.759px;">Monitoraufnahme</div>
<div style="left:384px;top:895.0px;width:9.5px;height:3.0px;background:#cc1c1c;"></div>
<div style="left:395px;top:892.22px;width:9.5px;height:5.779999999999999px;background:#cc1c1c;"></div>
<div style="left:406px;top:889.44px;width:9.5px;height:8.559999999999999px;background:#cc1c1c;"></div>
<div style="left:417px;top:886.66px;width:9.5px;height:11.34px;background:#cc1c1c;"></div>
<div style="left:428px;top:883.88px;width:9.5px;height:14.12px;background:#cc1c1c;"></div>
<div style="left:439px;top:881.1px;width:9.5px;height:16.9px;background:#cc1c1c;"></div>
<div style="left:450px;top:878.32px;width:9.5px;height:19.68px;background:#cc1c1c;"></div>
<div style="left:461px;top:875.54px;width:9.5px;height:22.459999999999997px;background:#cc1c1c;"></div>
<div style="left:472px;top:872.76px;width:9.5px;height:25.24px;background:#cc1c1c;"></div>
<div style="left:483px;top:869.98px;width:9.5px;height:28.02px;background:#cc1c1c;"></div>
<div style="left:529.5px;top:895.0px;width:9.5px;height:3.0px;background:#cc1c1c;"></div>
<div style="left:540.5px;top:892.22px;width:9.5px;height:5.779999999999999px;background:#cc1c1c;"></div>
<div style="left:551.5px;top:889.44px;width:9.5px;height:8.559999999999999px;background:#cc1c1c;"></div>
<div style="left:562.5px;top:886.66px;width:9.5px;height:11.34px;background:#cc1c1c;"></div>
<div style="left:573.5px;top:883.88px;width:9.5px;height:14.12px;background:#cc1c1c;"></div>
<div style="left:584.5px;top:881.1px;width:9.5px;height:16.9px;background:#cc1c1c;"></div>
<div style="left:595.5px;top:878.32px;width:9.5px;height:19.68px;background:#cc1c1c;"></div>
<div style="left:606.5px;top:875.54px;width:9.5px;height:22.459999999999997px;background:#cc1c1c;"></div>
<div style="left:617.5px;top:872.76px;width:9.5px;height:25.24px;background:#cc1c1c;"></div>
<div style="left:628.5px;top:869.98px;width:9.5px;height:28.02px;background:#cc1c1c;"></div>
<svg style="left:499px;top:870px;" width="26" height="26" viewBox="0 0 26 26"><path d="M3 23 L14 11" stroke="#cc1c1c" stroke-width="3.4" stroke-linecap="round"/><ellipse cx="17.5" cy="7.5" rx="5.8" ry="4.4" transform="rotate(-45 17.5 7.5)" fill="#cc1c1c"/></svg>
<svg style="left:644px;top:870px;" width="26" height="26" viewBox="0 0 26 26"><path d="M2 9 h5 l8 -7 v22 l-8 -7 h-5z" fill="#cc1c1c"/><path d="M18 8 q3 5 0 10 M21 5 q5 8 0 16" stroke="#cc1c1c" stroke-width="2" fill="none"/></svg>
<div style="left:384px;top:901.5px;width:142px;height:5px;background:#cdcdcd;"></div>
<div style="left:384px;top:901.5px;width:68px;height:5px;background:linear-gradient(90deg,#1c7a1c 0,#2a962a 80%,#55e055 100%);"></div>
<svg style="left:384px;top:908px;" width="142" height="4" viewBox="0 0 142 4"><rect x="3.0" y="0" width="1" height="3.5" fill="#555"/><rect x="6.0" y="0" width="1" height="3.5" fill="#555"/><rect x="9.0" y="0" width="1" height="3.5" fill="#555"/><rect x="12.0" y="0" width="1" height="3.5" fill="#555"/><rect x="15.0" y="0" width="1" height="3.5" fill="#555"/><rect x="18.0" y="0" width="1" height="3.5" fill="#555"/><rect x="22.0" y="0" width="1" height="3.5" fill="#555"/><rect x="26.0" y="0" width="1" height="3.5" fill="#555"/><rect x="31.0" y="0" width="1" height="3.5" fill="#555"/><rect x="37.0" y="0" width="1" height="3.5" fill="#555"/><rect x="44.0" y="0" width="1" height="3.5" fill="#555"/><rect x="52.0" y="0" width="1" height="3.5" fill="#555"/><rect x="61.0" y="0" width="1" height="3.5" fill="#555"/><rect x="72.0" y="0" width="1" height="3.5" fill="#555"/><rect x="86.0" y="0" width="1" height="3.5" fill="#555"/><rect x="108.0" y="0" width="1" height="3.5" fill="#555"/></svg>
<div style="left:472px;top:901px;width:1.5px;height:6px;background:#222;"></div>
<div style="left:529.5px;top:901.5px;width:142px;height:5px;background:#cdcdcd;"></div>
<div style="left:529.5px;top:901.5px;width:34px;height:5px;background:linear-gradient(90deg,#1c7a1c 0,#2a962a 80%,#55e055 100%);"></div>
<svg style="left:529.5px;top:908px;" width="142" height="4" viewBox="0 0 142 4"><rect x="3.0" y="0" width="1" height="3.5" fill="#555"/><rect x="6.0" y="0" width="1" height="3.5" fill="#555"/><rect x="9.0" y="0" width="1" height="3.5" fill="#555"/><rect x="12.0" y="0" width="1" height="3.5" fill="#555"/><rect x="15.0" y="0" width="1" height="3.5" fill="#555"/><rect x="18.0" y="0" width="1" height="3.5" fill="#555"/><rect x="22.0" y="0" width="1" height="3.5" fill="#555"/><rect x="26.0" y="0" width="1" height="3.5" fill="#555"/><rect x="31.0" y="0" width="1" height="3.5" fill="#555"/><rect x="37.0" y="0" width="1" height="3.5" fill="#555"/><rect x="44.0" y="0" width="1" height="3.5" fill="#555"/><rect x="52.0" y="0" width="1" height="3.5" fill="#555"/><rect x="61.0" y="0" width="1" height="3.5" fill="#555"/><rect x="72.0" y="0" width="1" height="3.5" fill="#555"/><rect x="86.0" y="0" width="1" height="3.5" fill="#555"/><rect x="108.0" y="0" width="1" height="3.5" fill="#555"/></svg>
<div style="left:580px;top:901px;width:1.5px;height:6px;background:#222;"></div>
<div style="left:385.5px;top:915px;width:140px;height:20px;background:#e3e3e3;border:1px solid #adadad;"></div>
<div style="left:419.5px;top:916.5px;line-height:17px;font-size:12px;color:#000;white-space:nowrap;letter-spacing:-0.628px;">Einstellungen...</div>
<div style="left:385.5px;top:940.5px;width:140px;height:20px;background:#e3e3e3;border:1px solid #adadad;"></div>
<div style="left:414.0px;top:942.0px;line-height:17px;font-size:12px;color:#000;white-space:nowrap;letter-spacing:-0.692px;">Szene bearbeiten</div>
<div style="left:385.5px;top:965.5px;width:140px;height:20px;background:#e3e3e3;border:1px solid #adadad;"></div>
<div style="left:413.0px;top:967.0px;line-height:17px;font-size:12px;color:#000;white-space:nowrap;letter-spacing:-0.614px;">Globale Quellen...</div>
<div style="left:385.5px;top:990.5px;width:140px;height:20px;background:#e3e3e3;border:1px solid #adadad;"></div>
<div style="left:438.5px;top:992.0px;line-height:17px;font-size:12px;color:#000;white-space:nowrap;letter-spacing:-0.765px;">Plugins</div>
<div style="left:530.5px;top:915px;width:140px;height:20px;background:#d2d2d2;border:1px solid #c2c2c2;"></div>
<div style="left:559.5px;top:916.5px;line-height:17px;font-size:12px;color:#8e8e8e;white-space:nowrap;letter-spacing:-0.747px;">Streaming starten</div>
<div style="left:530.5px;top:940.5px;width:140px;height:20px;background:#e3e3e3;border:1px solid #adadad;"></div>
<div style="left:555.5px;top:942.0px;line-height:17px;font-size:12px;color:#000;white-space:nowrap;letter-spacing:-0.671px;">Aufnahme stoppen</div>
<div style="left:530.5px;top:965.5px;width:140px;height:20px;background:#d2d2d2;border:1px solid #c2c2c2;"></div>
<div style="left:542.5px;top:967.0px;line-height:17px;font-size:12px;color:#8e8e8e;white-space:nowrap;letter-spacing:-0.727px;">Stream-Vorschau starten</div>
<div style="left:530.5px;top:990.5px;width:140px;height:20px;background:#e3e3e3;border:1px solid #adadad;"></div>
<div style="left:579.5px;top:992.0px;line-height:17px;font-size:12px;color:#000;white-space:nowrap;letter-spacing:-0.863px;">Beenden</div>
<div style="left:656.5px;top:943px;width:1px;height:15px;background:#333;"></div>
<svg style="left:658px;top:946px;" width="10" height="8" viewBox="0 0 10 8"><path d="M1 2 h8 l-4 5z" fill="#111"/></svg>
<div style="left:41px;top:1014px;width:640px;height:24px;background:#f0eef0;border-top:1px solid #fff;"></div>
<div style="left:171px;top:1016px;width:1px;height:21px;background:#dcdcdc;"></div>
<div style="left:342px;top:1016px;width:1px;height:21px;background:#dcdcdc;"></div>
<div style="left:512px;top:1016px;width:1px;height:21px;background:#dcdcdc;"></div>
<div style="left:175.0px;top:1019.0px;line-height:17px;font-size:12px;color:#222;white-space:nowrap;letter-spacing:-0.669px;">0:03:42 (REC)</div>
<div style="left:346.0px;top:1019.0px;line-height:17px;font-size:12px;color:#222;white-space:nowrap;letter-spacing:-0.800px;">Verworfene Frames: 0 (0.00%)</div>
<div style="left:516.0px;top:1019.0px;line-height:17px;font-size:12px;color:#222;white-space:nowrap;letter-spacing:-0.622px;">FPS: 30</div>
<div style="left:577px;top:1017.5px;width:20px;height:20px;background:#00f000;"></div>
<div style="left:600.0px;top:1019.0px;line-height:17px;font-size:12px;color:#222;white-space:nowrap;letter-spacing:-0.486px;">10057kb/s</div>
<div style="left:1916px;top:0px;width:4px;height:1076px;background:linear-gradient(#6a88a8 0,#6a88a8 29px,#181c22 30px,#181c22 88%,#2c5c80 98%);"></div>
<div style="left:668px;top:0px;width:1248px;height:1076px;background:#1a1a19;border:1px solid #5f8fb4;border-top-color:#777;"></div>
<div style="left:669px;top:1px;width:1246px;height:28px;background:#fff;"></div>
<svg style="left:677px;top:6px;" width="16" height="14" viewBox="0 0 16 14"><path d="M1 8.5 L9 2.5 L7.5 2 M1 8.5 H6" stroke="#e87d0d" stroke-width="1.8" fill="none" stroke-linecap="round"/><circle cx="9.5" cy="8" r="4.6" fill="#e87d0d"/><circle cx="9.5" cy="8" r="2.6" fill="#fff"/><circle cx="9.5" cy="8" r="1.5" fill="#265787"/></svg>
<div style="left:698.0px;top:5.5px;line-height:17px;font-size:12px;color:#000;white-space:nowrap;letter-spacing:-0.051px;">Blender</div>
<svg style="left:1795px;top:6px;" width="110" height="16" viewBox="0 0 110 16"><path d="M1 7.5 h10" stroke="#111" stroke-width="1.1"/><rect x="46.500" y="2.500" width="9" height="9" fill="none" stroke="#111" stroke-width="1.1"/><path d="M92.500 2.500 l9.500 9.500 M102 2.500 l-9.500 9.500" stroke="#111" stroke-width="1.1"/></svg>
<div style="left:669px;top:29px;width:1246px;height:27px;background:#3b3a39;border-top:1px solid #4a4948;"></div>
<svg style="left:669px;top:44px;" width="12" height="12" viewBox="0 0 12 12"><path d="M0 0 L12 12 M0 4 L8 12 M0 8 L4 12" stroke="#565554" stroke-width="1"/></svg>
<svg style="left:1903px;top:29px;" width="12" height="12" viewBox="0 0 12 12"><path d="M0 0 L12 12 M4 0 L12 8 M8 0 L12 4" stroke="#565554" stroke-width="1"/></svg>
<div class="bb" style="left:677px;top:34px;width:31px;height:19px;border-radius:4px;"></div>
<svg style="left:682px;top:37.5px;" width="13" height="13" viewBox="0 0 13 13"><circle cx="6.5" cy="6.5" r="6" fill="#3c6cc4" stroke="#c8d4ec" stroke-width="1"/><rect x="5.700" y="5.500" width="1.800" height="4.500" fill="#fff"/><circle cx="6.500" cy="3.600" r="1.100" fill="#fff"/></svg>
<svg style="left:697.5px;top:37.5px;" width="7.0" height="13.0" viewBox="0 0 7 13"><path d="M3.5 0.5 L6.5 5 H0.5Z M3.5 12.5 L6.5 8 H0.5Z" fill="#c8c8c8"/></svg>
<div style="left:720.5px;top:37.0px;line-height:15px;font-size:11px;color:#e4e4e4;white-space:nowrap;letter-spacing:0.069px;">File</div>
<div style="left:759.5px;top:37.0px;line-height:15px;font-size:11px;color:#e4e4e4;white-space:nowrap;letter-spacing:-0.012px;">Render</div>
<div style="left:816.5px;top:37.0px;line-height:15px;font-size:11px;color:#e4e4e4;white-space:nowrap;letter-spacing:0.146px;">Window</div>
<div style="left:877.0px;top:37.0px;line-height:15px;font-size:11px;color:#e4e4e4;white-space:nowrap;letter-spacing:0.344px;">Help</div>
<div class="bb" style="left:914px;top:34px;width:201px;height:19px;border-radius:4px;background:linear-gradient(#2d2c2b,#343332);"></div>
<div class="bb" style="left:914px;top:34px;width:32px;height:19px;border-radius:4px 0 0 4px;"></div>
<svg style="left:920px;top:38px;" width="13" height="12" viewBox="0 0 13 12"><rect x="0" y="0" width="5.500" height="5" fill="#eee"/><rect x="0" y="6.500" width="5.500" height="5.500" fill="#eee"/><rect x="7" y="0" width="6" height="12" fill="#eee"/></svg>
<svg style="left:936.5px;top:37.5px;" width="7.0" height="13.0" viewBox="0 0 7 13"><path d="M3.5 0.5 L6.5 5 H0.5Z M3.5 12.5 L6.5 8 H0.5Z" fill="#c8c8c8"/></svg>
<div style="left:954.0px;top:37.0px;line-height:15px;font-size:11px;color:#e4e4e4;white-space:nowrap;letter-spacing:0.164px;">Default</div>
<div class="bb" style="left:1073px;top:34px;width:21px;height:19px;border-radius:0;"></div>
<div class="bb" style="left:1094px;top:34px;width:21px;height:19px;border-radius:0 4px 4px 0;"></div>
<svg style="left:1077.5px;top:38.5px;" width="12" height="12" viewBox="0 0 12 12"><path d="M6 1 V11 M1 6 H11" stroke="#f0f0f0" stroke-width="2"/></svg>
<svg style="left:1099px;top:39px;" width="11" height="11" viewBox="0 0 11 11"><path d="M1.500 1.500 L9.500 9.500 M9.500 1.500 L1.500 9.500" stroke="#f0f0f0" stroke-width="2"/></svg>
<div class="bb" style="left:1121px;top:34px;width:201px;height:19px;border-radius:4px;background:linear-gradient(#2d2c2b,#343332);"></div>
<div class="bb" style="left:1121px;top:34px;width:32px;height:19px;border-radius:4px 0 0 4px;"></div>
<svg style="left:1126px;top:37px;" width="14" height="14" viewBox="0 0 14 14"><circle cx="4" cy="3.500" r="2.200" fill="#e8e49a"/><circle cx="6" cy="10" r="3.200" fill="#e8e8e8"/><rect x="8.500" y="3" width="4" height="7" rx="1.500" fill="#4a78d0"/></svg>
<svg style="left:1143.5px;top:37.5px;" width="7.0" height="13.0" viewBox="0 0 7 13"><path d="M3.5 0.5 L6.5 5 H0.5Z M3.5 12.5 L6.5 8 H0.5Z" fill="#c8c8c8"/></svg>
<div style="left:1161.0px;top:37.0px;line-height:15px;font-size:11px;color:#e4e4e4;white-space:nowrap;letter-spacing:-0.238px;">Scene</div>
<div class="bb" style="left:1280px;top:34px;width:21px;height:19px;border-radius:0;"></div>
<div class="bb" style="left:1301px;top:34px;width:21px;height:19px;border-radius:0 4px 4px 0;"></div>
<svg style="left:1284.5px;top:38.5px;" width="12" height="12" viewBox="0 0 12 12"><path d="M6 1 V11 M1 6 H11" stroke="#f0f0f0" stroke-width="2"/></svg>
<svg style="left:1306px;top:39px;" width="11" height="11" viewBox="0 0 11 11"><path d="M1.500 1.500 L9.500 9.500 M9.500 1.500 L1.500 9.500" stroke="#f0f0f0" stroke-width="2"/></svg>
<div class="bb" style="left:1339px;top:34px;width:111px;height:19px;border-radius:4px;"></div>
<div style="left:1346.5px;top:37.0px;line-height:15px;font-size:11px;color:#e4e4e4;white-space:nowrap;letter-spacing:-0.074px;">Blender Render</div>
<svg style="left:1440.0px;top:37.5px;" width="7.0" height="13.0" viewBox="0 0 7 13"><path d="M3.5 0.5 L6.5 5 H0.5Z M3.5 12.5 L6.5 8 H0.5Z" fill="#c8c8c8"/></svg>
<svg style="left:1469px;top:37px;" width="15" height="13" viewBox="0 0 15 13"><path d="M1 8 L8.500 2.500 M1 8 H5" stroke="#e87d0d" stroke-width="1.700" fill="none" stroke-linecap="round"/><circle cx="9" cy="7.500" r="4.200" fill="#e87d0d"/><circle cx="9" cy="7.500" r="2.300" fill="#fff"/><circle cx="9" cy="7.500" r="1.300" fill="#265787"/></svg>
<div style="left:1496.0px;top:36.5px;line-height:16px;font-size:11.5px;color:#e4e4e4;white-space:nowrap;letter-spacing:-0.014px;">v2.78 | Verts:5/125 | Edges:5/145 | Faces:1/39 | Tris:87 | Mem:21.16M | Plane</div>
<div style="left:669px;top:56px;width:1246px;height:1px;background:#161615;"></div>
<div style="left:669px;top:57px;width:968px;height:81px;background:#0f0f0d;"></div>
<svg style="left:1025px;top:57px;" width="256" height="81" viewBox="0 0 256 81"><rect width="256" height="81" fill="#1e1e1c"/><path d="M3.5 0 V81" stroke="#1a1a18" stroke-width="1"/><path d="M7.5 0 V81" stroke="#1a1a18" stroke-width="1"/><path d="M11.5 0 V81" stroke="#1a1a18" stroke-width="1"/><path d="M15.5 0 V81" stroke="#1a1a18" stroke-width="1"/><path d="M19.5 0 V81" stroke="#1a1a18" stroke-width="1"/><path d="M23.5 0 V81" stroke="#1a1a18" stroke-width="1"/><path d="M27.5 0 V81" stroke="#1a1a18" stroke-width="1"/><path d="M31.5 0 V81" stroke="#1a1a18" stroke-width="1"/><path d="M35.5 0 V81" stroke="#1a1a18" stroke-width="1"/><path d="M39.5 0 V81" stroke="#1a1a18" stroke-width="1"/><path d="M43.5 0 V81" stroke="#1a1a18" stroke-width="1"/><path d="M47.5 0 V81" stroke="#1a1a18" stroke-width="1"/><path d="M51.5 0 V81" stroke="#1a1a18" stroke-width="1"/><path d="M55.5 0 V81" stroke="#1a1a18" stroke-width="1"/><path d="M59.5 0 V81" stroke="#1a1a18" stroke-width="1"/><path d="M63.5 0 V81" stroke="#1a1a18" stroke-width="1"/><path d="M67.5 0 V81" stroke="#1a1a18" stroke-width="1"/><path d="M71.5 0 V81" stroke="#1a1a18" stroke-width="1"/><path d="M75.5 0 V81" stroke="#1a1a18" stroke-width="1"/><path d="M79.5 0 V81" stroke="#1a1a18" stroke-width="1"/><path d="M83.5 0 V81" stroke="#1a1a18" stroke-width="1"/><path d="M87.5 0 V81" stroke="#1a1a18" stroke-width="1"/><path d="M91.5 0 V81" stroke="#1a1a18" stroke-width="1"/><path d="M95.5 0 V81" stroke="#1a1a18" stroke-width="1"/><path d="M99.5 0 V81" stroke="#1a1a18" stroke-width="1"/><path d="M103.5 0 V81" stroke="#1a1a18" stroke-width="1"/><path d="M107.5 0 V81" stroke="#1a1a18" stroke-width="1"/><path d="M111.5 0 V81" stroke="#1a1a18" stroke-width="1"/><path d="M115.5 0 V81" stroke="#1a1a18" stroke-width="1"/><path d="M119.5 0 V81" stroke="#1a1a18" stroke-width="1"/><path d="M123.5 0 V81" stroke="#1a1a18" stroke-width="1"/><path d="M127.5 0 V81" stroke="#1a1a18" stroke-width="1"/><path d="M131.5 0 V81" stroke="#1a1a18" stroke-width="1"/><path d="M135.5 0 V81" stroke="#1a1a18" stroke-width="1"/><path d="M139.5 0 V81" stroke="#1a1a18" stroke-width="1"/><path d="M143.5 0 V81" stroke="#1a1a18" stroke-width="1"/><path d="M147.5 0 V81" stroke="#1a1a18" stroke-width="1"/><path d="M151.5 0 V81" stroke="#1a1a18" stroke-width="1"/><path d="M155.5 0 V81" stroke="#1a1a18" stroke-width="1"/><path d="M159.5 0 V81" stroke="#1a1a18" stroke-width="1"/><path d="M163.5 0 V81" stroke="#1a1a18" stroke-width="1"/><path d="M167.5 0 V81" stroke="#1a1a18" stroke-width="1"/><path d="M171.5 0 V81" stroke="#1a1a18" stroke-width="1"/><path d="M175.5 0 V81" stroke="#1a1a18" stroke-width="1"/><path d="M179.5 0 V81" stroke="#1a1a18" stroke-width="1"/><path d="M183.5 0 V81" stroke="#1a1a18" stroke-width="1"/><path d="M187.5 0 V81" stroke="#1a1a18" stroke-width="1"/><path d="M191.5 0 V81" stroke="#1a1a18" stroke-width="1"/><path d="M195.5 0 V81" stroke="#1a1a18" stroke-width="1"/><path d="M199.5 0 V81" stroke="#1a1a18" stroke-width="1"/><path d="M203.5 0 V81" stroke="#1a1a18" stroke-width="1"/><path d="M207.5 0 V81" stroke="#1a1a18" stroke-width="1"/><path d="M211.5 0 V81" stroke="#1a1a18" stroke-width="1"/><path d="M215.5 0 V81" stroke="#1a1a18" stroke-width="1"/><path d="M219.5 0 V81" stroke="#1a1a18" stroke-width="1"/><path d="M223.5 0 V81" stroke="#1a1a18" stroke-width="1"/><path d="M227.5 0 V81" stroke="#1a1a18" stroke-width="1"/><path d="M231.5 0 V81" stroke="#1a1a18" stroke-width="1"/><path d="M235.5 0 V81" stroke="#1a1a18" stroke-width="1"/><path d="M239.5 0 V81" stroke="#1a1a18" stroke-width="1"/><path d="M243.5 0 V81" stroke="#1a1a18" stroke-width="1"/><path d="M247.5 0 V81" stroke="#1a1a18" stroke-width="1"/><path d="M251.5 0 V81" stroke="#1a1a18" stroke-width="1"/><path d="M255.5 0 V81" stroke="#1a1a18" stroke-width="1"/><path d="M31.5 0 V81" stroke="#131311"/><path d="M63.5 0 V81" stroke="#131311"/><path d="M95.5 0 V81" stroke="#131311"/><path d="M127.5 0 V81" stroke="#131311"/><path d="M159.5 0 V81" stroke="#131311"/><path d="M191.5 0 V81" stroke="#131311"/><path d="M223.5 0 V81" stroke="#131311"/><path d="M255.5 0 V81" stroke="#131311"/><path d="M0 7.5 H256" stroke="#131311"/><path d="M0 40.5 H256" stroke="#131311"/><path d="M0 72.5 H256" stroke="#131311"/></svg>
<svg style="left:671px;top:83px;" width="8" height="8" viewBox="0 0 8 8"><path d="M4 1 V7 M1 4 H7" stroke="#5a5a58" stroke-width="1.500"/></svg>
<svg style="left:1625px;top:83px;" width="8" height="8" viewBox="0 0 8 8"><path d="M4 1 V7 M1 4 H7" stroke="#5a5a58" stroke-width="1.500"/></svg>
<svg style="left:1625px;top:57px;" width="12" height="12" viewBox="0 0 12 12"><path d="M0 0 L12 12 M4 0 L12 8 M8 0 L12 4" stroke="#565554" stroke-width="1"/></svg>
<div style="left:669px;top:138px;width:968px;height:27px;background:#3b3a39;border-top:1px solid #4a4948;"></div>
<svg style="left:669px;top:153px;" width="12" height="12" viewBox="0 0 12 12"><path d="M0 0 L12 12 M0 4 L8 12 M0 8 L4 12" stroke="#565554" stroke-width="1"/></svg>
<div class="bb" style="left:677px;top:143px;width:31px;height:19px;border-radius:4px;"></div>
<svg style="left:681px;top:146px;" width="15" height="13" viewBox="0 0 15 13"><rect x="0.500" y="0.500" width="14" height="12" fill="#f4f0f0" stroke="#888"/><rect x="1" y="1" width="13" height="3.500" fill="#c83a3a"/><rect x="1" y="5" width="13" height="2" fill="#e4a0b0"/><rect x="1" y="8.500" width="13" height="3" fill="#3a3a6a"/></svg>
<svg style="left:697.5px;top:146.5px;" width="7.0" height="13.0" viewBox="0 0 7 13"><path d="M3.5 0.5 L6.5 5 H0.5Z M3.5 12.5 L6.5 8 H0.5Z" fill="#c8c8c8"/></svg>
<div style="left:721.0px;top:146.0px;line-height:15px;font-size:11px;color:#e4e4e4;white-space:nowrap;letter-spacing:0.339px;">View</div>
<div style="left:766.5px;top:146.0px;line-height:15px;font-size:11px;color:#e4e4e4;white-space:nowrap;letter-spacing:0.286px;">Image</div>
<div class="bb" style="left:812.5px;top:143px;width:33px;height:19px;border-radius:4px 0 0 4px;"></div>
<svg style="left:817px;top:145px;" width="13" height="15" viewBox="0 0 13 15"><path d="M0.500 2.500 L3 0.500 H12.500 V14.500 H0.500Z" fill="#ece8ea" stroke="#999"/><rect x="1.500" y="3.500" width="10" height="4" fill="#d85a6a"/><rect x="1.500" y="7.500" width="10" height="3" fill="#f0c0c8"/><rect x="1.500" y="10.500" width="10" height="3" fill="#5a5a9a"/></svg>
<svg style="left:834.5px;top:146.5px;" width="7.0" height="13.0" viewBox="0 0 7 13"><path d="M3.5 0.5 L6.5 5 H0.5Z M3.5 12.5 L6.5 8 H0.5Z" fill="#c8c8c8"/></svg>
<div class="bb" style="left:845.5px;top:143px;width:62px;height:19px;border-radius:0;"></div>
<svg style="left:849.5px;top:147.5px;" width="12" height="12" viewBox="0 0 12 12"><path d="M6 1 V11 M1 6 H11" stroke="#f0f0f0" stroke-width="2"/></svg>
<div style="left:872.0px;top:146.0px;line-height:15px;font-size:11px;color:#e4e4e4;white-space:nowrap;letter-spacing:0.332px;">New</div>
<div class="bb" style="left:907.5px;top:143px;width:63px;height:19px;border-radius:0 4px 4px 0;"></div>
<svg style="left:911.5px;top:145.5px;" width="16" height="14" viewBox="0 0 16 14"><path d="M0.500 4.500 H6 L7.500 6 H15 V13.500 H0.500Z" fill="#d8cc8a" stroke="#8a7a3a"/><rect x="6.500" y="0.500" width="6" height="6" fill="#f4f4f4" stroke="#999"/><path d="M0.500 13.500 L3 8 H15.500 L14 13.500Z" fill="#ece4a8" stroke="#8a7a3a" stroke-width=".6"/></svg>
<div style="left:933.0px;top:146.0px;line-height:15px;font-size:11px;color:#e4e4e4;white-space:nowrap;letter-spacing:0.023px;">Open</div>
<div class="bb" style="left:976px;top:143px;width:21px;height:19px;border-radius:4px;"></div>
<svg style="left:979px;top:146px;" width="15" height="15" viewBox="0 0 15 15"><path d="M2 13 L6.500 8.500" stroke="#ddd" stroke-width="1.500"/><path d="M5 6 L9 10 L10.500 8 L13.500 5 L10 1.500 L7 4.500Z" fill="#e8e8e8" stroke="#777" stroke-width=".6"/></svg>
<div class="bb" style="left:1003px;top:143px;width:66px;height:19px;border-radius:4px;"></div>
<svg style="left:1008px;top:145px;" width="13" height="15" viewBox="0 0 13 15"><path d="M0.500 2.500 L3 0.500 H12.500 V14.500 H0.500Z" fill="#ece8ea" stroke="#999"/><rect x="1.500" y="3.500" width="10" height="4" fill="#d85a6a"/><rect x="1.500" y="7.500" width="10" height="3" fill="#f0c0c8"/><rect x="1.500" y="10.500" width="10" height="3" fill="#5a5a9a"/></svg>
<div style="left:1026.0px;top:146.0px;line-height:15px;font-size:11px;color:#e4e4e4;white-space:nowrap;letter-spacing:0.339px;">View</div>
<svg style="left:1058.5px;top:146.5px;" width="7.0" height="13.0" viewBox="0 0 7 13"><path d="M3.5 0.5 L6.5 5 H0.5Z M3.5 12.5 L6.5 8 H0.5Z" fill="#c8c8c8"/></svg>
<div class="bb" style="left:1075px;top:143px;width:36px;height:19px;border-radius:4px;"></div>
<svg style="left:1079.5px;top:146.5px;" width="14" height="14" viewBox="0 0 14 14"><path d="M1 4 V1 H4 M10 1 H13 V4 M13 10 V13 H10 M4 13 H1 V10" stroke="#e0e0e0" stroke-width="1.600" fill="none"/><circle cx="7" cy="7" r="3" fill="#4a80d8" stroke="#bcd" stroke-width=".8"/></svg>
<svg style="left:1099.5px;top:146.5px;" width="7.0" height="13.0" viewBox="0 0 7 13"><path d="M3.5 0.5 L6.5 5 H0.5Z M3.5 12.5 L6.5 8 H0.5Z" fill="#c8c8c8"/></svg>
<div style="left:669px;top:165px;width:968px;height:1px;background:#161615;"></div>
<svg style="left:669px;top:166px;" width="968" height="882" viewBox="0 0 968 882"><rect width="968" height="882" fill="#10110d"/><path d="M1.5 0 V882 M13.5 0 V882 M26.5 0 V882 M38.5 0 V882 M50.5 0 V882 M62.5 0 V882 M74.5 0 V882 M87.5 0 V882 M99.5 0 V882 M123.5 0 V882 M135.5 0 V882 M148.5 0 V882 M160.5 0 V882 M172.5 0 V882 M184.5 0 V882 M196.5 0 V882 M209.5 0 V882 M221.5 0 V882 M245.5 0 V882 M257.5 0 V882 M270.5 0 V882 M282.5 0 V882 M294.5 0 V882 M306.5 0 V882 M318.5 0 V882 M331.5 0 V882 M343.5 0 V882 M367.5 0 V882 M380.5 0 V882 M392.5 0 V882 M404.5 0 V882 M416.5 0 V882 M428.5 0 V882 M441.5 0 V882 M453.5 0 V882 M465.5 0 V882 M489.5 0 V882 M502.5 0 V882 M514.5 0 V882 M526.5 0 V882 M538.5 0 V882 M550.5 0 V882 M563.5 0 V882 M575.5 0 V882 M587.5 0 V882 M611.5 0 V882 M624.5 0 V882 M636.5 0 V882 M648.5 0 V882 M660.5 0 V882 M672.5 0 V882 M685.5 0 V882 M697.5 0 V882 M709.5 0 V882 M733.5 0 V882 M746.5 0 V882 M758.5 0 V882 M770.5 0 V882 M782.5 0 V882 M794.5 0 V882 M807.5 0 V882 M819.5 0 V882 M831.5 0 V882 M856.5 0 V882 M868.5 0 V882 M880.5 0 V882 M892.5 0 V882 M904.5 0 V882 M917.5 0 V882 M929.5 0 V882 M941.5 0 V882 M953.5 0 V882 M0 7.5 H968 M0 19.5 H968 M0 32.5 H968 M0 44.5 H968 M0 56.5 H968 M0 81.5 H968 M0 93.5 H968 M0 105.5 H968 M0 117.5 H968 M0 129.5 H968 M0 142.5 H968 M0 154.5 H968 M0 166.5 H968 M0 178.5 H968 M0 203.5 H968 M0 215.5 H968 M0 227.5 H968 M0 239.5 H968 M0 251.5 H968 M0 264.5 H968 M0 276.5 H968 M0 288.5 H968 M0 300.5 H968 M0 325.5 H968 M0 337.5 H968 M0 349.5 H968 M0 361.5 H968 M0 373.5 H968 M0 386.5 H968 M0 398.5 H968 M0 410.5 H968 M0 422.5 H968 M0 447.5 H968 M0 459.5 H968 M0 471.5 H968 M0 483.5 H968 M0 495.5 H968 M0 508.5 H968 M0 520.5 H968 M0 532.5 H968 M0 544.5 H968 M0 569.5 H968 M0 581.5 H968 M0 593.5 H968 M0 605.5 H968 M0 618.5 H968 M0 630.5 H968 M0 642.5 H968 M0 654.5 H968 M0 666.5 H968 M0 691.5 H968 M0 703.5 H968 M0 715.5 H968 M0 727.5 H968 M0 740.5 H968 M0 752.5 H968 M0 764.5 H968 M0 776.5 H968 M0 788.5 H968 M0 813.5 H968 M0 825.5 H968 M0 837.5 H968 M0 849.5 H968 M0 862.5 H968 M0 874.5 H968" stroke="#1c1d19" stroke-width="1"/><path d="M111.5 0 V882 M233.5 0 V882 M355.5 0 V882 M477.5 0 V882 M599.5 0 V882 M721.5 0 V882 M843.5 0 V882 M965.5 0 V882 M0 68.5 H968 M0 190.5 H968 M0 312.5 H968 M0 434.5 H968 M0 557.5 H968 M0 679.5 H968 M0 801.5 H968" stroke="#2a2b27" stroke-width="1"/><path d="M355.5 0 V882" stroke="#1f6a26" stroke-width="1"/><path d="M0 557.5 H968" stroke="#3c1420" stroke-width="1"/><rect x="234" y="272.3" width="486.5" height="487.99999999999994" fill="#9b93a7"/><rect x="234" y="272.3" width="45.89999999999998" height="80.90000000000003" fill="#c79786"/><path d="M279.9 272.3 V353.2 M360.3 272.3 V353.2 M442.1 272.3 V353.2 M523.4 272.3 V353.2 M604.3 272.3 V353.2 M685.6 272.3 V353.2 M314.4 353.2 V434.5 M395.6 353.2 V434.5 M477.2 353.2 V434.5 M558.4 353.2 V434.5 M639.7 353.2 V434.5 M275.3 434.5 V516.3 M356.6 434.5 V516.3 M437.8 434.5 V516.3 M519.6 434.5 V516.3 M600.9 434.5 V516.3 M681.9 434.5 V516.3 M314.4 516.3 V597.5 M395.6 516.3 V597.5 M477.2 516.3 V597.5 M558.4 516.3 V597.5 M639.7 516.3 V597.5 M279.9 597.5 V679.0 M360.3 597.5 V679.0 M442.1 597.5 V679.0 M523.4 597.5 V679.0 M604.3 597.5 V679.0 M685.6 597.5 V679.0 M314.4 679.0 V760.3 M395.6 679.0 V760.3 M477.2 679.0 V760.3 M558.4 679.0 V760.3 M639.7 679.0 V760.3 M234 272.3 H720.5 M234 353.2 H720.5 M234 434.5 H720.5 M234 516.3 H720.5 M234 597.5 H720.5 M234 679.0 H720.5 M234 760.3 H720.5 M234 272.3 V760.3 M720.5 272.3 V760.3" stroke="#a03a91" stroke-width="1" fill="none"/><path d="M234 353.20000000000005 V272.3 H279.9 V353.20000000000005 Z" stroke="#de8a5a" stroke-width="1.1" fill="none"/><rect x="318.9" y="311.6" width="2.500" height="2.500" fill="#7a1a55"/><rect x="400.0" y="311.6" width="2.500" height="2.500" fill="#7a1a55"/><rect x="489.8" y="305.6" width="2.500" height="2.500" fill="#7a1a55"/><rect x="562.6" y="311.6" width="2.500" height="2.500" fill="#7a1a55"/><rect x="643.7" y="311.6" width="2.500" height="2.500" fill="#7a1a55"/><rect x="701.8" y="311.6" width="2.500" height="2.500" fill="#7a1a55"/><rect x="273.0" y="392.7" width="2.500" height="2.500" fill="#7a1a55"/><rect x="353.8" y="392.7" width="2.500" height="2.500" fill="#7a1a55"/><rect x="443.8" y="386.7" width="2.500" height="2.500" fill="#7a1a55"/><rect x="516.6" y="392.7" width="2.500" height="2.500" fill="#7a1a55"/><rect x="597.9" y="392.7" width="2.500" height="2.500" fill="#7a1a55"/><rect x="691.8" y="386.7" width="2.500" height="2.500" fill="#7a1a55"/><rect x="253.4" y="474.2" width="2.500" height="2.500" fill="#7a1a55"/><rect x="314.7" y="474.2" width="2.500" height="2.500" fill="#7a1a55"/><rect x="396.0" y="474.2" width="2.500" height="2.500" fill="#7a1a55"/><rect x="477.5" y="474.2" width="2.500" height="2.500" fill="#7a1a55"/><rect x="559.0" y="474.2" width="2.500" height="2.500" fill="#7a1a55"/><rect x="640.2" y="474.2" width="2.500" height="2.500" fill="#7a1a55"/><rect x="700.0" y="474.2" width="2.500" height="2.500" fill="#7a1a55"/><rect x="273.0" y="555.7" width="2.500" height="2.500" fill="#7a1a55"/><rect x="443.8" y="549.7" width="2.500" height="2.500" fill="#7a1a55"/><rect x="516.6" y="555.7" width="2.500" height="2.500" fill="#7a1a55"/><rect x="597.9" y="555.7" width="2.500" height="2.500" fill="#7a1a55"/><rect x="686.8" y="549.7" width="2.500" height="2.500" fill="#7a1a55"/><rect x="255.8" y="637.0" width="2.500" height="2.500" fill="#7a1a55"/><rect x="318.9" y="637.0" width="2.500" height="2.500" fill="#7a1a55"/><rect x="400.0" y="637.0" width="2.500" height="2.500" fill="#7a1a55"/><rect x="481.6" y="637.0" width="2.500" height="2.500" fill="#7a1a55"/><rect x="562.6" y="637.0" width="2.500" height="2.500" fill="#7a1a55"/><rect x="643.7" y="637.0" width="2.500" height="2.500" fill="#7a1a55"/><rect x="701.8" y="637.0" width="2.500" height="2.500" fill="#7a1a55"/><rect x="273.0" y="718.4" width="2.500" height="2.500" fill="#7a1a55"/><rect x="353.8" y="718.4" width="2.500" height="2.500" fill="#7a1a55"/><rect x="443.8" y="712.4" width="2.500" height="2.500" fill="#7a1a55"/><rect x="516.6" y="718.4" width="2.500" height="2.500" fill="#7a1a55"/><rect x="597.9" y="718.4" width="2.500" height="2.500" fill="#7a1a55"/><rect x="686.8" y="712.4" width="2.500" height="2.500" fill="#7a1a55"/><rect x="352" y="553.5" width="6" height="7.500" rx="1.500" fill="#e8684c" stroke="#b05a70" stroke-width=".8"/><rect x="260" y="306" width="2" height="2" fill="#f09060"/><path d="M261.20000000000005 292.3 V242" stroke="#2fe02f" stroke-width="1.200"/><path d="M261.20000000000005 224 L265.70000000000005 243 H256.70000000000005Z" fill="#2fe02f"/><path d="M276.20000000000005 307.3 H328" stroke="#e01010" stroke-width="1.200"/><path d="M345.5 307.3 L327 302.3 V312.3Z" fill="#f00c0c"/><circle cx="261.20000000000005" cy="307.3" r="14.800" fill="none" stroke="#fff" stroke-width="1.100"/><path d="M186.5 858 V835" stroke="#2ad02a" stroke-width="1.500"/><path d="M186 857.5 H208" stroke="#c81818" stroke-width="1.500"/><path d="M701 671 V685 M694 678 H708" stroke="#111" stroke-width="3.200"/><path d="M701 671.5 V684.5 M694.5 678 H707.5" stroke="#fff" stroke-width="1.300"/></svg>
<div style="left:853.0px;top:175.0px;line-height:15px;font-size:11px;color:#f0f0f0;white-space:nowrap;letter-spacing:0.078px;">Top Ortho</div>
<div style="left:897.0px;top:1025.5px;line-height:15px;font-size:11px;color:#f0f0f0;white-space:nowrap;letter-spacing:0.041px;">(1) Plane</div>
<div style="left:859.0px;top:986.0px;line-height:14px;font-size:10px;color:#2ad02a;white-space:nowrap;">y</div>
<div style="left:878.0px;top:1010.5px;line-height:13px;font-size:9px;color:#b81818;white-space:nowrap;">x</div>
<div style="left:669px;top:166px;width:162px;height:882px;background:rgba(34,33,30,0.95);"></div>
<div style="left:669px;top:828px;width:162px;height:1px;background:#1a1a19;"></div>
<div style="left:669px;top:166px;width:23px;height:662px;background:#2a2a28;border-right:1px solid #1b1b1a;"></div>
<div style="left:671.5px;top:172px;width:19px;height:36px;background:#383735;border:1px solid #141413;border-right:none;border-radius:4px 0 0 4px;"></div>
<div style="left:668.7px;top:183.0px;width:24.5px;line-height:14px;font-size:10.5px;color:#c8c8c8;white-space:nowrap;transform:rotate(-90deg);transform-origin:50% 50%;">Tools</div>
<div style="left:671.5px;top:213px;width:19px;height:45px;background:#2d2c2a;border:1px solid #141413;border-right:none;border-radius:4px 0 0 4px;"></div>
<div style="left:665.2px;top:228.5px;width:31.5px;line-height:14px;font-size:10.5px;color:#a8a8a8;white-space:nowrap;transform:rotate(-90deg);transform-origin:50% 50%;">Create</div>
<div style="left:671.5px;top:263px;width:19px;height:79px;background:#2d2c2a;border:1px solid #141413;border-right:none;border-radius:4px 0 0 4px;"></div>
<div style="left:647.4px;top:295.5px;width:67.1px;line-height:14px;font-size:10.5px;color:#a8a8a8;white-space:nowrap;transform:rotate(-90deg);transform-origin:50% 50%;">Shading / UVs</div>
<div style="left:671.5px;top:347px;width:19px;height:49px;background:#2d2c2a;border:1px solid #141413;border-right:none;border-radius:4px 0 0 4px;"></div>
<div style="left:662.9px;top:364.5px;width:36.2px;line-height:14px;font-size:10.5px;color:#a8a8a8;white-space:nowrap;transform:rotate(-90deg);transform-origin:50% 50%;">Options</div>
<div style="left:671.5px;top:402px;width:19px;height:78px;background:#2d2c2a;border:1px solid #141413;border-right:none;border-radius:4px 0 0 4px;"></div>
<div style="left:648.0px;top:434.0px;width:65.9px;line-height:14px;font-size:10.5px;color:#a8a8a8;white-space:nowrap;transform:rotate(-90deg);transform-origin:50% 50%;">Grease Pencil</div>
<div style="left:671.5px;top:485px;width:19px;height:57px;background:#2d2c2a;border:1px solid #141413;border-right:none;border-radius:4px 0 0 4px;"></div>
<div style="left:659.1px;top:506.5px;width:43.8px;line-height:14px;font-size:10.5px;color:#a8a8a8;white-space:nowrap;transform:rotate(-90deg);transform-origin:50% 50%;">Relations</div>
<div style="left:671.5px;top:547px;width:19px;height:50px;background:#2d2c2a;border:1px solid #141413;border-right:none;border-radius:4px 0 0 4px;"></div>
<div style="left:661.7px;top:565.0px;width:38.5px;line-height:14px;font-size:10.5px;color:#a8a8a8;white-space:nowrap;transform:rotate(-90deg);transform-origin:50% 50%;">Brushes</div>
<svg style="left:703px;top:174.5px;" width="9" height="9" viewBox="0 0 9 9"><path d="M0.8 0.8 H8.2 L4.5 8Z" fill="#9a9a9a"/></svg>
<div style="left:717.0px;top:168.5px;line-height:18px;font-size:12.5px;color:#adadad;white-space:nowrap;letter-spacing:0.057px;">Transform</div>
<svg style="left:795px;top:176px;" width="10" height="6" viewBox="0 0 10 6"><g fill="#454443"><rect x="0" y="0" width="1" height="1"/><rect x="3" y="0" width="1" height="1"/><rect x="6" y="0" width="1" height="1"/><rect x="9" y="0" width="1" height="1"/><rect x="0" y="3" width="1" height="1"/><rect x="3" y="3" width="1" height="1"/><rect x="6" y="3" width="1" height="1"/><rect x="9" y="3" width="1" height="1"/></g></svg>
<div class="bb" style="left:698.5px;top:198px;width:107px;height:21px;border-radius:4px 4px 0 0;"></div>
<div style="left:705.5px;top:201.5px;line-height:15px;font-size:11px;color:#e4e4e4;white-space:nowrap;">Translate</div>
<div class="bb" style="left:698.5px;top:219px;width:107px;height:21px;border-radius:0;"></div>
<div style="left:705.5px;top:222.5px;line-height:15px;font-size:11px;color:#e4e4e4;white-space:nowrap;">Rotate</div>
<div class="bb" style="left:698.5px;top:240px;width:107px;height:21px;border-radius:0;"></div>
<div style="left:705.5px;top:243.5px;line-height:15px;font-size:11px;color:#e4e4e4;white-space:nowrap;">Scale</div>
<div class="bb" style="left:698.5px;top:261px;width:107px;height:21px;border-radius:0;"></div>
<div style="left:705.5px;top:264.5px;line-height:15px;font-size:11px;color:#e4e4e4;white-space:nowrap;">Shrink/Fatten</div>
<div class="bb" style="left:698.5px;top:282px;width:107px;height:21px;border-radius:0 0 4px 4px;"></div>
<div style="left:705.5px;top:285.5px;line-height:15px;font-size:11px;color:#e4e4e4;white-space:nowrap;">Push/Pull</div>
<svg style="left:703px;top:321.0px;" width="9" height="9" viewBox="0 0 9 9"><path d="M0.8 0.8 H8.2 L4.5 8Z" fill="#9a9a9a"/></svg>
<div style="left:717.0px;top:315.0px;line-height:18px;font-size:12.5px;color:#adadad;white-space:nowrap;letter-spacing:0.201px;">Mesh Tools</div>
<svg style="left:795px;top:322px;" width="10" height="6" viewBox="0 0 10 6"><g fill="#454443"><rect x="0" y="0" width="1" height="1"/><rect x="3" y="0" width="1" height="1"/><rect x="6" y="0" width="1" height="1"/><rect x="9" y="0" width="1" height="1"/><rect x="0" y="3" width="1" height="1"/><rect x="3" y="3" width="1" height="1"/><rect x="6" y="3" width="1" height="1"/><rect x="9" y="3" width="1" height="1"/></g></svg>
<div style="left:706.0px;top:348.0px;line-height:15px;font-size:11px;color:#a4a4a4;white-space:nowrap;">Deform:</div>
<div class="bb" style="left:698.5px;top:366px;width:52px;height:21px;border-radius:4px 0 0 0;"></div>
<div style="left:705.5px;top:369.5px;line-height:15px;font-size:11px;color:#e4e4e4;white-space:nowrap;">Slide Ed</div>
<div class="bb" style="left:750.5px;top:366px;width:55px;height:21px;border-radius:0 4px 0 0;"></div>
<div style="left:759.0px;top:369.5px;line-height:15px;font-size:11px;color:#e4e4e4;white-space:nowrap;">Vertex</div>
<div class="bb" style="left:698.5px;top:387px;width:107px;height:21px;border-radius:0;"></div>
<div style="left:705.5px;top:390.5px;line-height:15px;font-size:11px;color:#e4e4e4;white-space:nowrap;">Noise</div>
<div class="bb" style="left:698.5px;top:408px;width:107px;height:21px;border-radius:0;"></div>
<div style="left:705.5px;top:411.5px;line-height:15px;font-size:11px;color:#e4e4e4;white-space:nowrap;">Smooth Vertex</div>
<div class="bb" style="left:698.5px;top:429px;width:107px;height:21px;border-radius:0 0 4px 4px;"></div>
<div style="left:705.5px;top:432.5px;line-height:15px;font-size:11px;color:#e4e4e4;white-space:nowrap;">Randomize</div>
<div style="left:706.0px;top:458.5px;line-height:15px;font-size:11px;color:#a4a4a4;white-space:nowrap;">Add:</div>
<div class="bb" style="left:698.5px;top:476.5px;width:107px;height:21px;border-radius:4px 4px 0 0;"></div>
<div style="left:705.5px;top:480.0px;line-height:15px;font-size:11px;color:#e4e4e4;white-space:nowrap;">Extrude</div>
<svg style="left:795.0px;top:480.0px;" width="7.0" height="13.0" viewBox="0 0 7 13"><path d="M3.5 0.5 L6.5 5 H0.5Z M3.5 12.5 L6.5 8 H0.5Z" fill="#c8c8c8"/></svg>
<div class="bb" style="left:698.5px;top:497.5px;width:107px;height:21px;border-radius:0;"></div>
<div style="left:705.5px;top:501.0px;line-height:15px;font-size:11px;color:#e4e4e4;white-space:nowrap;">Extrude Region</div>
<div class="bb" style="left:698.5px;top:518.5px;width:107px;height:21px;border-radius:0;"></div>
<div style="left:705.5px;top:522.0px;line-height:15px;font-size:11px;color:#e4e4e4;white-space:nowrap;">Extrude Individual</div>
<div class="bb" style="left:698.5px;top:539.5px;width:107px;height:21px;border-radius:0;"></div>
<div style="left:705.5px;top:543.0px;line-height:15px;font-size:11px;color:#e4e4e4;white-space:nowrap;">Inset Faces</div>
<div class="bb" style="left:698.5px;top:560.5px;width:107px;height:21px;border-radius:0;"></div>
<div style="left:705.5px;top:564.0px;line-height:15px;font-size:11px;color:#e4e4e4;white-space:nowrap;">Make Edge/Face</div>
<div class="bb" style="left:698.5px;top:581.5px;width:107px;height:21px;border-radius:0;"></div>
<div style="left:705.5px;top:585.0px;line-height:15px;font-size:11px;color:#e4e4e4;white-space:nowrap;">Subdivide</div>
<div class="bb" style="left:698.5px;top:602.5px;width:107px;height:21px;border-radius:0;"></div>
<div style="left:705.5px;top:606.0px;line-height:15px;font-size:11px;color:#e4e4e4;white-space:nowrap;">Loop Cut and Slide</div>
<div class="bb" style="left:698.5px;top:623.5px;width:107px;height:21px;border-radius:0;"></div>
<div style="left:705.5px;top:627.0px;line-height:15px;font-size:11px;color:#e4e4e4;white-space:nowrap;">Offset Edge Slide</div>
<div class="bb" style="left:698.5px;top:644.5px;width:107px;height:21px;border-radius:0;"></div>
<div style="left:705.5px;top:648.0px;line-height:15px;font-size:11px;color:#e4e4e4;white-space:nowrap;">Duplicate</div>
<div class="bb" style="left:698.5px;top:665.5px;width:52px;height:21px;border-radius:0;"></div>
<div style="left:705.5px;top:669.0px;line-height:15px;font-size:11px;color:#e4e4e4;white-space:nowrap;">Spin</div>
<div class="bb" style="left:750.5px;top:665.5px;width:55px;height:21px;border-radius:0;"></div>
<div style="left:759.0px;top:669.0px;line-height:15px;font-size:11px;color:#e4e4e4;white-space:nowrap;">Screw</div>
<div class="bb" style="left:698.5px;top:686.5px;width:52px;height:21px;border-radius:0;"></div>
<div style="left:705.5px;top:690.0px;line-height:15px;font-size:11px;color:#e4e4e4;white-space:nowrap;">Knife</div>
<div class="bb" style="left:750.5px;top:686.5px;width:55px;height:21px;border-radius:0;"></div>
<div style="left:759.0px;top:690.0px;line-height:15px;font-size:11px;color:#e4e4e4;white-space:nowrap;">Select</div>
<div class="bb" style="left:698.5px;top:707.5px;width:107px;height:21px;border-radius:0;"></div>
<div style="left:705.5px;top:711.0px;line-height:15px;font-size:11px;color:#e4e4e4;white-space:nowrap;">Knife Project</div>
<div class="bb" style="left:698.5px;top:728.5px;width:107px;height:21px;border-radius:0 0 4px 4px;"></div>
<div style="left:705.5px;top:732.0px;line-height:15px;font-size:11px;color:#e4e4e4;white-space:nowrap;">Bisect</div>
<div style="left:706.0px;top:758.5px;line-height:15px;font-size:11px;color:#a4a4a4;white-space:nowrap;">Remove:</div>
<div class="bb" style="left:698.5px;top:776.5px;width:107px;height:21px;border-radius:4px 4px 0 0;"></div>
<div style="left:705.5px;top:780.0px;line-height:15px;font-size:11px;color:#e4e4e4;white-space:nowrap;">Delete</div>
<svg style="left:795.0px;top:780.0px;" width="7.0" height="13.0" viewBox="0 0 7 13"><path d="M3.5 0.5 L6.5 5 H0.5Z M3.5 12.5 L6.5 8 H0.5Z" fill="#c8c8c8"/></svg>
<div class="bb" style="left:698.5px;top:797.5px;width:107px;height:21px;border-radius:0;"></div>
<div style="left:705.5px;top:801.0px;line-height:15px;font-size:11px;color:#e4e4e4;white-space:nowrap;">Merge</div>
<svg style="left:795.0px;top:801.0px;" width="7.0" height="13.0" viewBox="0 0 7 13"><path d="M3.5 0.5 L6.5 5 H0.5Z M3.5 12.5 L6.5 8 H0.5Z" fill="#c8c8c8"/></svg>
<div class="bb" style="left:698.5px;top:818.5px;width:107px;height:9px;border-radius:0;"></div>
<div style="left:816px;top:172px;width:12px;height:652px;background:#232322;border-radius:6px;border:1px solid #1a1a19;"></div>
<div style="left:816px;top:172px;width:12px;height:538px;background:linear-gradient(90deg,#464544,#393837);border-radius:6px;border:1px solid #1a1a19;"></div>
<div style="left:816px;top:833px;width:12px;height:208px;background:#232322;border-radius:6px;border:1px solid #1a1a19;"></div>
<div style="left:816px;top:833px;width:12px;height:94px;background:linear-gradient(90deg,#464544,#393837);border-radius:6px;border:1px solid #1a1a19;"></div>
<svg style="left:681px;top:834.0px;" width="9" height="9" viewBox="0 0 9 9"><path d="M0.8 0.8 H8.2 L4.5 8Z" fill="#9a9a9a"/></svg>
<div style="left:695.0px;top:828.0px;line-height:18px;font-size:12.5px;color:#adadad;white-space:nowrap;letter-spacing:0.040px;">Translate</div>
<svg style="left:795px;top:836px;" width="10" height="6" viewBox="0 0 10 6"><g fill="#454443"><rect x="0" y="0" width="1" height="1"/><rect x="3" y="0" width="1" height="1"/><rect x="6" y="0" width="1" height="1"/><rect x="9" y="0" width="1" height="1"/><rect x="0" y="3" width="1" height="1"/><rect x="3" y="3" width="1" height="1"/><rect x="6" y="3" width="1" height="1"/><rect x="9" y="3" width="1" height="1"/></g></svg>
<div style="left:685.0px;top:861.5px;line-height:15px;font-size:11px;color:#b4b4b4;white-space:nowrap;">Vector</div>
<div class="nf" style="left:678.5px;top:880.5px;width:127px;height:21px;border-radius:9px 9px 0 0;"></div>
<svg style="left:683.5px;top:888.0px;" width="5" height="7" viewBox="0 0 5 7"><path d="M4.5 0.5 V6.5 L0.5 3.5Z" fill="#c8c8c8"/></svg>
<svg style="left:795.5px;top:888.0px;" width="5" height="7" viewBox="0 0 5 7"><path d="M0.5 0.5 V6.5 L4.5 3.5Z" fill="#c8c8c8"/></svg>
<div style="left:693.5px;top:884.0px;line-height:15px;font-size:11px;color:#e4e4e4;white-space:nowrap;">X:</div>
<div style="left:756.7px;top:884.0px;line-height:15px;font-size:11px;color:#e4e4e4;white-space:nowrap;letter-spacing:0.661px;">0.081</div>
<div class="nf" style="left:678.5px;top:900.8px;width:127px;height:21px;border-radius:0;"></div>
<svg style="left:683.5px;top:908.3px;" width="5" height="7" viewBox="0 0 5 7"><path d="M4.5 0.5 V6.5 L0.5 3.5Z" fill="#c8c8c8"/></svg>
<svg style="left:795.5px;top:908.3px;" width="5" height="7" viewBox="0 0 5 7"><path d="M0.5 0.5 V6.5 L4.5 3.5Z" fill="#c8c8c8"/></svg>
<div style="left:693.5px;top:904.3px;line-height:15px;font-size:11px;color:#e4e4e4;white-space:nowrap;">Y:</div>
<div style="left:756.7px;top:904.3px;line-height:15px;font-size:11px;color:#e4e4e4;white-space:nowrap;letter-spacing:0.661px;">0.000</div>
<div class="nf" style="left:678.5px;top:921.1px;width:127px;height:21px;border-radius:0 0 9px 9px;"></div>
<svg style="left:683.5px;top:928.6px;" width="5" height="7" viewBox="0 0 5 7"><path d="M4.5 0.5 V6.5 L0.5 3.5Z" fill="#c8c8c8"/></svg>
<svg style="left:795.5px;top:928.6px;" width="5" height="7" viewBox="0 0 5 7"><path d="M0.5 0.5 V6.5 L4.5 3.5Z" fill="#c8c8c8"/></svg>
<div style="left:693.5px;top:924.6px;line-height:15px;font-size:11px;color:#e4e4e4;white-space:nowrap;">Z:</div>
<div style="left:756.7px;top:924.6px;line-height:15px;font-size:11px;color:#e4e4e4;white-space:nowrap;letter-spacing:0.661px;">0.000</div>
<div style="left:685.0px;top:951.5px;line-height:15px;font-size:11px;color:#b4b4b4;white-space:nowrap;">Constraint Axis</div>
<div style="left:682px;top:971px;width:14px;height:14px;border-radius:4px;border:1px solid #1d1d1c;background:#161614;"></div>
<svg style="left:683px;top:969px;" width="14" height="14" viewBox="0 0 14 14"><path d="M2.500 7.500 L5.500 11 L12 2.500" stroke="#f0f0f0" stroke-width="2" fill="none"/></svg>
<div style="left:702.0px;top:972.5px;line-height:15px;font-size:11px;color:#e4e4e4;white-space:nowrap;">X</div>
<div style="left:682px;top:992px;width:14px;height:14px;border-radius:4px;border:1px solid #1d1d1c;background:linear-gradient(#2c2b29,#32312f);"></div>
<div style="left:702.0px;top:993.5px;line-height:15px;font-size:11px;color:#6a6a6a;white-space:nowrap;">Y</div>
<div style="left:682px;top:1013px;width:14px;height:14px;border-radius:4px;border:1px solid #1d1d1c;background:linear-gradient(#2c2b29,#32312f);"></div>
<div style="left:702.0px;top:1014.5px;line-height:15px;font-size:11px;color:#6a6a6a;white-space:nowrap;">Z</div>
<div style="left:680px;top:1038px;width:100px;height:10px;overflow:hidden;"><div style="left:5px;top:1px;line-height:14px;font-size:11px;color:#8a8a8a;white-space:nowrap">Orientation</div></div>
<div style="left:1452px;top:166px;width:185px;height:882px;background:rgba(34,33,30,0.95);"></div>
<svg style="left:1465px;top:167.5px;" width="9" height="9" viewBox="0 0 9 9"><path d="M0.8 0.8 H8.2 L4.5 8Z" fill="#9a9a9a"/></svg>
<div style="left:1479.0px;top:161.5px;line-height:18px;font-size:12.5px;color:#b0b0b0;white-space:nowrap;letter-spacing:0.033px;">View</div>
<svg style="left:1596px;top:169px;" width="10" height="6" viewBox="0 0 10 6"><g fill="#454443"><rect x="0" y="0" width="1" height="1"/><rect x="3" y="0" width="1" height="1"/><rect x="6" y="0" width="1" height="1"/><rect x="9" y="0" width="1" height="1"/><rect x="0" y="3" width="1" height="1"/><rect x="3" y="3" width="1" height="1"/><rect x="6" y="3" width="1" height="1"/><rect x="9" y="3" width="1" height="1"/></g></svg>
<div class="nf" style="left:1461px;top:192px;width:150px;height:19px;border-radius:10px;"></div>
<svg style="left:1466px;top:198.5px;" width="5" height="7" viewBox="0 0 5 7"><path d="M4.5 0.5 V6.5 L0.5 3.5Z" fill="#c8c8c8"/></svg>
<svg style="left:1601px;top:198.5px;" width="5" height="7" viewBox="0 0 5 7"><path d="M0.5 0.5 V6.5 L4.5 3.5Z" fill="#c8c8c8"/></svg>
<div style="left:1476.0px;top:194.5px;line-height:15px;font-size:11px;color:#e4e4e4;white-space:nowrap;">Lens:</div>
<div style="left:1555.3px;top:194.5px;line-height:15px;font-size:11px;color:#e4e4e4;white-space:nowrap;letter-spacing:0.673px;">35.000</div>
<div style="left:1468.0px;top:218.0px;line-height:15px;font-size:11px;color:#c4c4c4;white-space:nowrap;">Lock to Object:</div>
<div class="bb" style="left:1461px;top:238px;width:150px;height:20px;border-radius:4px;background:linear-gradient(#2b2a29,#333231);"></div>
<svg style="left:1466px;top:241.5px;" width="13" height="13" viewBox="0 0 13 13"><g opacity="1"><path d="M6.500 0.500 L12.500 3.500 V9.500 L6.500 12.500 L0.500 9.500 V3.500Z" fill="#f0a040" stroke="#a06010" stroke-width=".7"/><path d="M0.500 3.500 L6.500 6.500 L12.500 3.500 L6.500 0.500Z" fill="#fad8a0"/><path d="M0.500 3.500 L6.500 6.500 V12.500" stroke="#fff2d8" stroke-width=".8" fill="none"/></g></svg>
<svg style="left:1594px;top:241px;" width="12" height="12" viewBox="0 0 12 12"><path d="M1 11 L8 4" stroke="#ddd" stroke-width="1.500"/><path d="M7 3 L9 5 L11.500 1Z" fill="#ddd"/></svg>
<div style="left:1464px;top:264px;width:14px;height:14px;border-radius:4px;border:1px solid #1d1d1c;background:linear-gradient(#2c2b29,#32312f);"></div>
<div style="left:1485.0px;top:264.0px;line-height:15px;font-size:11px;color:#8c8c8c;white-space:nowrap;">Lock to Cursor</div>
<div style="left:1464px;top:290px;width:14px;height:14px;border-radius:4px;border:1px solid #1d1d1c;background:linear-gradient(#2c2b29,#32312f);"></div>
<div style="left:1485.0px;top:290.0px;line-height:15px;font-size:11px;color:#8c8c8c;white-space:nowrap;">Lock Camera to View</div>
<div style="left:1468.0px;top:316.5px;line-height:15px;font-size:11px;color:#c4c4c4;white-space:nowrap;">Clip:</div>
<div class="nf" style="left:1461px;top:334px;width:150px;height:21px;border-radius:9px 9px 0 0;"></div>
<svg style="left:1466px;top:341.5px;" width="5" height="7" viewBox="0 0 5 7"><path d="M4.5 0.5 V6.5 L0.5 3.5Z" fill="#c8c8c8"/></svg>
<svg style="left:1601px;top:341.5px;" width="5" height="7" viewBox="0 0 5 7"><path d="M0.5 0.5 V6.5 L4.5 3.5Z" fill="#c8c8c8"/></svg>
<div style="left:1476.0px;top:337.5px;line-height:15px;font-size:11px;color:#e4e4e4;white-space:nowrap;">Start:</div>
<div style="left:1562.2px;top:337.5px;line-height:15px;font-size:11px;color:#e4e4e4;white-space:nowrap;letter-spacing:0.661px;">0.100</div>
<div class="nf" style="left:1461px;top:354.5px;width:150px;height:21px;border-radius:0 0 9px 9px;"></div>
<svg style="left:1466px;top:362.0px;" width="5" height="7" viewBox="0 0 5 7"><path d="M4.5 0.5 V6.5 L0.5 3.5Z" fill="#c8c8c8"/></svg>
<svg style="left:1601px;top:362.0px;" width="5" height="7" viewBox="0 0 5 7"><path d="M0.5 0.5 V6.5 L4.5 3.5Z" fill="#c8c8c8"/></svg>
<div style="left:1476.0px;top:358.0px;line-height:15px;font-size:11px;color:#e4e4e4;white-space:nowrap;">End:</div>
<div style="left:1541.6px;top:358.0px;line-height:15px;font-size:11px;color:#e4e4e4;white-space:nowrap;letter-spacing:0.688px;">1000.000</div>
<div style="left:1468.0px;top:380.0px;line-height:15px;font-size:11px;color:#7c7c7c;white-space:nowrap;">Local Camera:</div>
<div class="bb" style="left:1461px;top:398px;width:150px;height:20px;border-radius:4px;background:linear-gradient(#2b2a29,#302f2e);border-color:#222221;"></div>
<svg style="left:1466px;top:401.5px;" width="13" height="13" viewBox="0 0 13 13"><g opacity="0.55"><path d="M6.500 0.500 L12.500 3.500 V9.500 L6.500 12.500 L0.500 9.500 V3.500Z" fill="#f0a040" stroke="#a06010" stroke-width=".7"/><path d="M0.500 3.500 L6.500 6.500 L12.500 3.500 L6.500 0.500Z" fill="#fad8a0"/><path d="M0.500 3.500 L6.500 6.500 V12.500" stroke="#fff2d8" stroke-width=".8" fill="none"/></g></svg>
<svg style="left:1594px;top:401px;" width="12" height="12" viewBox="0 0 12 12"><path d="M1 11 L8 4" stroke="#777" stroke-width="1.500"/><path d="M7 3 L9 5 L11.500 1Z" fill="#777"/></svg>
<div style="left:1464px;top:426.5px;width:14px;height:14px;border-radius:4px;border:1px solid #1d1d1c;background:linear-gradient(#2c2b29,#32312f);"></div>
<div style="left:1485.0px;top:426.5px;line-height:15px;font-size:11px;color:#8c8c8c;white-space:nowrap;">Render Border</div>
<svg style="left:1465px;top:461.0px;" width="9" height="9" viewBox="0 0 9 9"><path d="M0.8 0.8 H8.2 L4.5 8Z" fill="#9a9a9a"/></svg>
<div style="left:1479.0px;top:455.0px;line-height:18px;font-size:12.5px;color:#b0b0b0;white-space:nowrap;letter-spacing:0.227px;">3D Cursor</div>
<svg style="left:1596px;top:463px;" width="10" height="6" viewBox="0 0 10 6"><g fill="#454443"><rect x="0" y="0" width="1" height="1"/><rect x="3" y="0" width="1" height="1"/><rect x="6" y="0" width="1" height="1"/><rect x="9" y="0" width="1" height="1"/><rect x="0" y="3" width="1" height="1"/><rect x="3" y="3" width="1" height="1"/><rect x="6" y="3" width="1" height="1"/><rect x="9" y="3" width="1" height="1"/></g></svg>
<div style="left:1468.0px;top:489.0px;line-height:15px;font-size:11px;color:#c4c4c4;white-space:nowrap;">Location:</div>
<div class="nf" style="left:1461px;top:506.5px;width:150px;height:21px;border-radius:9px 9px 0 0;"></div>
<svg style="left:1466px;top:514.0px;" width="5" height="7" viewBox="0 0 5 7"><path d="M4.5 0.5 V6.5 L0.5 3.5Z" fill="#c8c8c8"/></svg>
<svg style="left:1601px;top:514.0px;" width="5" height="7" viewBox="0 0 5 7"><path d="M0.5 0.5 V6.5 L4.5 3.5Z" fill="#c8c8c8"/></svg>
<div style="left:1476.0px;top:510.0px;line-height:15px;font-size:11px;color:#e4e4e4;white-space:nowrap;">X:</div>
<div style="left:1548.5px;top:510.0px;line-height:15px;font-size:11px;color:#e4e4e4;white-space:nowrap;letter-spacing:0.682px;">0.53547</div>
<div class="nf" style="left:1461px;top:527.2px;width:150px;height:21px;border-radius:0;"></div>
<svg style="left:1466px;top:534.7px;" width="5" height="7" viewBox="0 0 5 7"><path d="M4.5 0.5 V6.5 L0.5 3.5Z" fill="#c8c8c8"/></svg>
<svg style="left:1601px;top:534.7px;" width="5" height="7" viewBox="0 0 5 7"><path d="M0.5 0.5 V6.5 L4.5 3.5Z" fill="#c8c8c8"/></svg>
<div style="left:1476.0px;top:530.7px;line-height:15px;font-size:11px;color:#e4e4e4;white-space:nowrap;">Y:</div>
<div style="left:1548.5px;top:530.7px;line-height:15px;font-size:11px;color:#e4e4e4;white-space:nowrap;letter-spacing:0.682px;">8.18689</div>
<div class="nf" style="left:1461px;top:547.9px;width:150px;height:21px;border-radius:0 0 9px 9px;"></div>
<svg style="left:1466px;top:555.4px;" width="5" height="7" viewBox="0 0 5 7"><path d="M4.5 0.5 V6.5 L0.5 3.5Z" fill="#c8c8c8"/></svg>
<svg style="left:1601px;top:555.4px;" width="5" height="7" viewBox="0 0 5 7"><path d="M0.5 0.5 V6.5 L4.5 3.5Z" fill="#c8c8c8"/></svg>
<div style="left:1476.0px;top:551.4px;line-height:15px;font-size:11px;color:#e4e4e4;white-space:nowrap;">Z:</div>
<div style="left:1548.5px;top:551.4px;line-height:15px;font-size:11px;color:#e4e4e4;white-space:nowrap;letter-spacing:0.682px;">6.67595</div>
<svg style="left:1465px;top:586.5px;" width="9" height="9" viewBox="0 0 9 9"><path d="M0.8 0.8 H8.2 L4.5 8Z" fill="#9a9a9a"/></svg>
<div style="left:1479.0px;top:580.5px;line-height:18px;font-size:12.5px;color:#b0b0b0;white-space:nowrap;letter-spacing:0.423px;">Item</div>
<svg style="left:1596px;top:588px;" width="10" height="6" viewBox="0 0 10 6"><g fill="#454443"><rect x="0" y="0" width="1" height="1"/><rect x="3" y="0" width="1" height="1"/><rect x="6" y="0" width="1" height="1"/><rect x="9" y="0" width="1" height="1"/><rect x="0" y="3" width="1" height="1"/><rect x="3" y="3" width="1" height="1"/><rect x="6" y="3" width="1" height="1"/><rect x="9" y="3" width="1" height="1"/></g></svg>
<svg style="left:1466px;top:615px;" width="13" height="13" viewBox="0 0 13 13"><g opacity="1"><path d="M6.500 0.500 L12.500 3.500 V9.500 L6.500 12.500 L0.500 9.500 V3.500Z" fill="#f0a040" stroke="#a06010" stroke-width=".7"/><path d="M0.500 3.500 L6.500 6.500 L12.500 3.500 L6.500 0.500Z" fill="#fad8a0"/><path d="M0.500 3.500 L6.500 6.500 V12.500" stroke="#fff2d8" stroke-width=".8" fill="none"/></g></svg>
<div class="bb" style="left:1488px;top:611px;width:123px;height:20px;border-radius:4px;background:linear-gradient(#2b2a29,#333231);"></div>
<div style="left:1497.0px;top:614.0px;line-height:15px;font-size:11px;color:#e4e4e4;white-space:nowrap;">Plane</div>
<svg style="left:1465px;top:647.5px;" width="9" height="9" viewBox="0 0 9 9"><path d="M0.5 0.5 V8.5 L8.5 4.5Z" fill="#9a9a9a"/></svg>
<div style="left:1479.0px;top:642.5px;line-height:18px;font-size:12.5px;color:#b0b0b0;white-space:nowrap;letter-spacing:0.288px;">Display</div>
<svg style="left:1596px;top:650px;" width="10" height="6" viewBox="0 0 10 6"><g fill="#454443"><rect x="0" y="0" width="1" height="1"/><rect x="3" y="0" width="1" height="1"/><rect x="6" y="0" width="1" height="1"/><rect x="9" y="0" width="1" height="1"/><rect x="0" y="3" width="1" height="1"/><rect x="3" y="3" width="1" height="1"/><rect x="6" y="3" width="1" height="1"/><rect x="9" y="3" width="1" height="1"/></g></svg>
<svg style="left:1465px;top:673.5px;" width="9" height="9" viewBox="0 0 9 9"><path d="M0.8 0.8 H8.2 L4.5 8Z" fill="#9a9a9a"/></svg>
<div style="left:1479.0px;top:667.5px;line-height:18px;font-size:12.5px;color:#b0b0b0;white-space:nowrap;letter-spacing:0.018px;">Shading</div>
<svg style="left:1596px;top:675px;" width="10" height="6" viewBox="0 0 10 6"><g fill="#454443"><rect x="0" y="0" width="1" height="1"/><rect x="3" y="0" width="1" height="1"/><rect x="6" y="0" width="1" height="1"/><rect x="9" y="0" width="1" height="1"/><rect x="0" y="3" width="1" height="1"/><rect x="3" y="3" width="1" height="1"/><rect x="6" y="3" width="1" height="1"/><rect x="9" y="3" width="1" height="1"/></g></svg>
<div class="bb" style="left:1461px;top:698px;width:150px;height:20px;border-radius:4px;"></div>
<div style="left:1468.0px;top:701.0px;line-height:15px;font-size:11px;color:#e4e4e4;white-space:nowrap;letter-spacing:0.263px;">Multitexture</div>
<svg style="left:1600.5px;top:701.5px;" width="7.0" height="13.0" viewBox="0 0 7 13"><path d="M3.5 0.5 L6.5 5 H0.5Z M3.5 12.5 L6.5 8 H0.5Z" fill="#c8c8c8"/></svg>
<div style="left:1464px;top:724.0px;width:14px;height:14px;border-radius:4px;border:1px solid #1d1d1c;background:linear-gradient(#2c2b29,#32312f);"></div>
<div style="left:1485.0px;top:724.0px;line-height:15px;font-size:11px;color:#8c8c8c;white-space:nowrap;">Textured Solid</div>
<div style="left:1464px;top:747.0px;width:14px;height:14px;border-radius:4px;border:1px solid #1d1d1c;background:linear-gradient(#2c2b29,#32312f);"></div>
<div style="left:1485.0px;top:747.0px;line-height:15px;font-size:11px;color:#8c8c8c;white-space:nowrap;">Matcap</div>
<div style="left:1464px;top:770.0px;width:14px;height:14px;border-radius:4px;border:1px solid #1d1d1c;background:#161614;"></div>
<svg style="left:1465px;top:768.0px;" width="14" height="14" viewBox="0 0 14 14"><path d="M2.500 7.500 L5.500 11 L12 2.500" stroke="#f0f0f0" stroke-width="2" fill="none"/></svg>
<div style="left:1485.0px;top:770.0px;line-height:15px;font-size:11px;color:#e4e4e4;white-space:nowrap;">Backface Culling</div>
<div style="left:1464px;top:793.0px;width:14px;height:14px;border-radius:4px;border:1px solid #1d1d1c;background:linear-gradient(#2c2b29,#32312f);"></div>
<div style="left:1485.0px;top:793.0px;line-height:15px;font-size:11px;color:#8c8c8c;white-space:nowrap;">Hidden Wire</div>
<div style="left:1464px;top:816.0px;width:14px;height:14px;border-radius:4px;border:1px solid #1d1d1c;background:linear-gradient(#2c2b29,#32312f);"></div>
<div style="left:1485.0px;top:816.0px;line-height:15px;font-size:11px;color:#5e5e5e;white-space:nowrap;">Depth Of Field</div>
<div style="left:1464px;top:839.5px;width:14px;height:14px;border-radius:4px;border:1px solid #1d1d1c;background:linear-gradient(#2c2b29,#32312f);"></div>
<div style="left:1485.0px;top:839.5px;line-height:15px;font-size:11px;color:#8c8c8c;white-space:nowrap;">Ambient Occlusion</div>
<svg style="left:1465px;top:873.5px;" width="9" height="9" viewBox="0 0 9 9"><path d="M0.5 0.5 V8.5 L8.5 4.5Z" fill="#9a9a9a"/></svg>
<div style="left:1480px;top:870.5px;width:14px;height:14px;border-radius:4px;border:1px solid #1d1d1c;background:#161614;"></div>
<svg style="left:1481px;top:868.5px;" width="14" height="14" viewBox="0 0 14 14"><path d="M2.500 7.500 L5.500 11 L12 2.500" stroke="#f0f0f0" stroke-width="2" fill="none"/></svg>
<div style="left:1499.0px;top:869.5px;line-height:18px;font-size:12.5px;color:#c8c8c8;white-space:nowrap;letter-spacing:-0.015px;">Motion Tracking</div>
<svg style="left:1596px;top:876px;" width="10" height="6" viewBox="0 0 10 6"><g fill="#454443"><rect x="0" y="0" width="1" height="1"/><rect x="3" y="0" width="1" height="1"/><rect x="6" y="0" width="1" height="1"/><rect x="9" y="0" width="1" height="1"/><rect x="0" y="3" width="1" height="1"/><rect x="3" y="3" width="1" height="1"/><rect x="6" y="3" width="1" height="1"/><rect x="9" y="3" width="1" height="1"/></g></svg>
<svg style="left:1465px;top:899.5px;" width="9" height="9" viewBox="0 0 9 9"><path d="M0.8 0.8 H8.2 L4.5 8Z" fill="#9a9a9a"/></svg>
<div style="left:1479.0px;top:893.5px;line-height:18px;font-size:12.5px;color:#b0b0b0;white-space:nowrap;letter-spacing:-0.002px;">Mesh Display</div>
<svg style="left:1596px;top:901px;" width="10" height="6" viewBox="0 0 10 6"><g fill="#454443"><rect x="0" y="0" width="1" height="1"/><rect x="3" y="0" width="1" height="1"/><rect x="6" y="0" width="1" height="1"/><rect x="9" y="0" width="1" height="1"/><rect x="0" y="3" width="1" height="1"/><rect x="3" y="3" width="1" height="1"/><rect x="6" y="3" width="1" height="1"/><rect x="9" y="3" width="1" height="1"/></g></svg>
<div style="left:1468.0px;top:927.5px;line-height:15px;font-size:11px;color:#c4c4c4;white-space:nowrap;">Overlays:</div>
<div style="left:1464px;top:950.0px;width:14px;height:14px;border-radius:4px;border:1px solid #1d1d1c;background:#161614;"></div>
<svg style="left:1465px;top:948.0px;" width="14" height="14" viewBox="0 0 14 14"><path d="M2.500 7.500 L5.500 11 L12 2.500" stroke="#f0f0f0" stroke-width="2" fill="none"/></svg>
<div style="left:1485.0px;top:950.0px;line-height:15px;font-size:11px;color:#e4e4e4;white-space:nowrap;">Faces</div>
<div style="left:1543px;top:950.0px;width:14px;height:14px;border-radius:4px;border:1px solid #1d1d1c;background:linear-gradient(#2c2b29,#32312f);"></div>
<div style="left:1564.0px;top:950.0px;line-height:15px;font-size:11px;color:#8c8c8c;white-space:nowrap;">Sharp</div>
<div style="left:1464px;top:973.0px;width:14px;height:14px;border-radius:4px;border:1px solid #1d1d1c;background:#161614;"></div>
<svg style="left:1465px;top:971.0px;" width="14" height="14" viewBox="0 0 14 14"><path d="M2.500 7.500 L5.500 11 L12 2.500" stroke="#f0f0f0" stroke-width="2" fill="none"/></svg>
<div style="left:1485.0px;top:973.0px;line-height:15px;font-size:11px;color:#e4e4e4;white-space:nowrap;">Edges</div>
<div style="left:1543px;top:973.0px;width:14px;height:14px;border-radius:4px;border:1px solid #1d1d1c;background:linear-gradient(#2c2b29,#32312f);"></div>
<div style="left:1564.0px;top:973.0px;line-height:15px;font-size:11px;color:#8c8c8c;white-space:nowrap;">Bevel</div>
<div style="left:1464px;top:996.0px;width:14px;height:14px;border-radius:4px;border:1px solid #1d1d1c;background:#161614;"></div>
<svg style="left:1465px;top:994.0px;" width="14" height="14" viewBox="0 0 14 14"><path d="M2.500 7.500 L5.500 11 L12 2.500" stroke="#f0f0f0" stroke-width="2" fill="none"/></svg>
<div style="left:1485.0px;top:996.0px;line-height:15px;font-size:11px;color:#e4e4e4;white-space:nowrap;">Creases</div>
<div style="left:1543px;top:996.0px;width:14px;height:14px;border-radius:4px;border:1px solid #1d1d1c;background:linear-gradient(#2c2b29,#32312f);"></div>
<div style="left:1564.0px;top:996.0px;line-height:15px;font-size:11px;color:#8c8c8c;white-space:nowrap;">Edge Ma</div>
<div style="left:1464px;top:1019.0px;width:14px;height:14px;border-radius:4px;border:1px solid #1d1d1c;background:linear-gradient(#2c2b29,#32312f);"></div>
<div style="left:1485.0px;top:1019.0px;line-height:15px;font-size:11px;color:#707070;white-space:nowrap;">Seams</div>
<div style="left:1543px;top:1019.0px;width:14px;height:14px;border-radius:4px;border:1px solid #1d1d1c;background:linear-gradient(#2c2b29,#32312f);"></div>
<div style="left:1564.0px;top:1019.0px;line-height:15px;font-size:11px;color:#8c8c8c;white-space:nowrap;">Face Ma</div>
<div style="left:1620px;top:172px;width:12px;height:870px;background:#1c1c1b;border-radius:6px;border:1px solid #181817;"></div>
<div style="left:1620px;top:379px;width:12px;height:482px;background:linear-gradient(90deg,#464544,#393837);border-radius:6px;border:1px solid #1a1a19;"></div>
<svg style="left:1625px;top:166px;" width="12" height="12" viewBox="0 0 12 12"><path d="M0 0 L12 12 M4 0 L12 8 M8 0 L12 4" stroke="#565554" stroke-width="1"/></svg>
<div style="left:669px;top:1048px;width:968px;height:27px;background:#3b3a39;border-top:1px solid #4a4948;"></div>
<svg style="left:669px;top:1062px;" width="12" height="12" viewBox="0 0 12 12"><path d="M0 0 L12 12 M0 4 L8 12 M0 8 L4 12" stroke="#565554" stroke-width="1"/></svg>
<div style="left:673.0px;top:1054.0px;line-height:15px;font-size:11px;color:#e4e4e4;white-space:nowrap;letter-spacing:0.071px;">Select</div>
<div style="left:725.0px;top:1054.0px;line-height:15px;font-size:11px;color:#e4e4e4;white-space:nowrap;letter-spacing:0.143px;">Add</div>
<div style="left:765.0px;top:1054.0px;line-height:15px;font-size:11px;color:#e4e4e4;white-space:nowrap;letter-spacing:0.026px;">Mesh</div>
<div class="bb" style="left:806px;top:1052px;width:101px;height:19px;border-radius:4px;"></div>
<svg style="left:809.5px;top:1054.5px;" width="14" height="14" viewBox="0 0 14 14"><path d="M7 1 L13 4 V10 L7 13 L1 10 V4Z" fill="#c8c4bc" stroke="#555" stroke-width=".7"/><path d="M1 4 L7 7 L13 4 M7 7 V13" stroke="#555" stroke-width=".7" fill="none"/><g fill="#f0a020"><circle cx="1.500" cy="4" r="1.300"/><circle cx="7" cy="1.200" r="1.300"/><circle cx="12.500" cy="4" r="1.300"/><circle cx="1.500" cy="10" r="1.300"/><circle cx="7" cy="12.800" r="1.300"/><circle cx="12.500" cy="10" r="1.300"/></g></svg>
<div style="left:830.0px;top:1054.0px;line-height:15px;font-size:11px;color:#e4e4e4;white-space:nowrap;letter-spacing:0.053px;">Edit Mode</div>
<svg style="left:896.0px;top:1054.5px;" width="7.0" height="13.0" viewBox="0 0 7 13"><path d="M3.5 0.5 L6.5 5 H0.5Z M3.5 12.5 L6.5 8 H0.5Z" fill="#c8c8c8"/></svg>
<div class="bb" style="left:912px;top:1052px;width:36px;height:19px;border-radius:4px;"></div>
<svg style="left:916.5px;top:1054.5px;" width="13" height="13" viewBox="0 0 13 13"><circle cx="6.500" cy="6.500" r="6" fill="#f2f2f2"/></svg>
<svg style="left:937.5px;top:1054.5px;" width="7.0" height="13.0" viewBox="0 0 7 13"><path d="M3.5 0.5 L6.5 5 H0.5Z M3.5 12.5 L6.5 8 H0.5Z" fill="#c8c8c8"/></svg>
<div class="bb" style="left:953px;top:1052px;width:36px;height:19px;border-radius:4px;"></div>
<svg style="left:957px;top:1054px;" width="14" height="14" viewBox="0 0 14 14"><circle cx="5" cy="5" r="3.800" fill="#e8e8e8"/><circle cx="9.500" cy="9.500" r="3.800" fill="#e8e8e8" stroke="#666" stroke-width=".5"/><rect x="5.500" y="5.500" width="3.400" height="3.400" fill="#3a70d0" stroke="#fff" stroke-width=".6"/></svg>
<svg style="left:978.5px;top:1054.5px;" width="7.0" height="13.0" viewBox="0 0 7 13"><path d="M3.5 0.5 L6.5 5 H0.5Z M3.5 12.5 L6.5 8 H0.5Z" fill="#c8c8c8"/></svg>
<div class="bb" style="left:995px;top:1052px;width:158px;height:19px;border-radius:4px;background:linear-gradient(#2d2c2b,#343332);"></div>
<div class="bb" style="left:995px;top:1052px;width:21px;height:19px;border-radius:4px 0 0 4px;background:#1c1c1b;"></div>
<svg style="left:998px;top:1054px;" width="15" height="15" viewBox="0 0 15 15"><path d="M7.500 8 V1" stroke="#3a6ae0" stroke-width="1.800"/><path d="M7.500 8 L1.500 13" stroke="#e03a3a" stroke-width="1.800"/><path d="M7.500 8 L13.500 13" stroke="#3ac83a" stroke-width="1.800"/></svg>
<div class="bb" style="left:1015px;top:1052px;width:21px;height:19px;border-radius:0;background:#733262;"></div>
<svg style="left:1018px;top:1054px;" width="15" height="15" viewBox="0 0 15 15"><path d="M2 13 L11 4" stroke="#5a8af0" stroke-width="2.200"/><path d="M13.500 1.500 L7 3.500 L11.500 8Z" fill="#5a8af0"/></svg>
<div class="bb" style="left:1035px;top:1052px;width:21px;height:19px;border-radius:0;background:#262625;"></div>
<svg style="left:1038px;top:1054px;" width="15" height="15" viewBox="0 0 15 15"><path d="M2 13 Q3 4 12 3" stroke="#4a6a98" stroke-width="2.200" fill="none"/></svg>
<div class="bb" style="left:1055px;top:1052px;width:21px;height:19px;border-radius:0;background:#262625;"></div>
<svg style="left:1058px;top:1054px;" width="15" height="15" viewBox="0 0 15 15"><path d="M2 13 L9 6" stroke="#4a6a98" stroke-width="2.200"/><rect x="8" y="2" width="5" height="5" fill="#4a6a98"/></svg>
<div class="bb" style="left:1076px;top:1052px;width:77px;height:19px;border-radius:0 4px 4px 0;"></div>
<div style="left:1085.5px;top:1054.0px;line-height:15px;font-size:11px;color:#e4e4e4;white-space:nowrap;letter-spacing:0.034px;">Global</div>
<svg style="left:1142.0px;top:1054.5px;" width="7.0" height="13.0" viewBox="0 0 7 13"><path d="M3.5 0.5 L6.5 5 H0.5Z M3.5 12.5 L6.5 8 H0.5Z" fill="#c8c8c8"/></svg>
<div class="bb" style="left:1157px;top:1052px;width:21px;height:19px;border-radius:4px 0 0 4px;background:linear-gradient(#4a4948,#3a3938);"></div>
<svg style="left:1160.5px;top:1054.5px;" width="14" height="14" viewBox="0 0 14 14"><g opacity="0.8"><path d="M7 1 L13 4 V10 L7 13 L1 10 V4Z" fill="#7a7874" stroke="#5a5856" stroke-width=".7"/><path d="M1 4 L7 7 L13 4 M7 7 V13" stroke="#5a5856" stroke-width=".7" fill="none"/></g></svg>
<div class="bb" style="left:1178px;top:1052px;width:21px;height:19px;border-radius:0;background:linear-gradient(#4a4948,#3a3938);"></div>
<svg style="left:1181.5px;top:1054.5px;" width="14" height="14" viewBox="0 0 14 14"><g opacity="0.8"><path d="M7 1 L13 4 V10 L7 13 L1 10 V4Z" fill="#7a7874" stroke="#5a5856" stroke-width=".7"/><path d="M1 4 L7 7 L13 4 M7 7 V13" stroke="#5a5856" stroke-width=".7" fill="none"/></g></svg>
<div class="bb" style="left:1199px;top:1052px;width:21px;height:19px;border-radius:0 4px 4px 0;background:#1c1c1b;"></div>
<svg style="left:1202.5px;top:1054.5px;" width="14" height="14" viewBox="0 0 14 14"><path d="M7 1 L13 4 V10 L7 13 L1 10 V4Z" fill="#d8d4cc" stroke="#555" stroke-width=".7"/><path d="M1 4 L7 7 V13 L1 10Z" fill="#f0a030"/><path d="M1 4 L7 7 L13 4 M7 7 V13" stroke="#555" stroke-width=".7" fill="none"/></svg>
<div class="bb" style="left:1224.5px;top:1052px;width:22px;height:19px;border-radius:4px;background:#141413;"></div>
<svg style="left:1228px;top:1054.5px;" width="15" height="15" viewBox="0 0 15 15"><circle cx="7.500" cy="8" r="4.500" fill="#e8e8e8"/><path d="M1 4 V1 H4 M11 1 H14 V4 M14 11 V14 H11 M4 14 H1 V11" stroke="#f4f4f4" stroke-width="1.400" fill="none" stroke-dasharray="2 1"/></svg>
<div class="bb" style="left:1251.5px;top:1052px;width:35px;height:19px;border-radius:4px;"></div>
<svg style="left:1256px;top:1055px;" width="13" height="13" viewBox="0 0 13 13"><circle cx="6.500" cy="6.500" r="4.500" fill="#6a6968" stroke="#8a8988"/></svg>
<svg style="left:1276.5px;top:1054.5px;" width="7.0" height="13.0" viewBox="0 0 7 13"><path d="M3.5 0.5 L6.5 5 H0.5Z M3.5 12.5 L6.5 8 H0.5Z" fill="#c8c8c8"/></svg>
<div class="bb" style="left:1293px;top:1052px;width:170px;height:19px;border-radius:4px;background:linear-gradient(#2d2c2b,#343332);"></div>
<div class="bb" style="left:1293px;top:1052px;width:21px;height:19px;border-radius:4px 0 0 4px;"></div>
<svg style="left:1296.5px;top:1055px;" width="14" height="14" viewBox="0 0 14 14"><path d="M3 11 Q1 3 8 3 Q12 3 11 8" stroke="#9a9896" stroke-width="2" fill="none"/></svg>
<div class="bb" style="left:1313px;top:1052px;width:37px;height:19px;border-radius:0;"></div>
<svg style="left:1317px;top:1054.5px;" width="14" height="14" viewBox="0 0 14 14"><path d="M7 2 L13 4.500 V10.500 L7 13 L2.500 10.500 V4.500Z" fill="#c8c6c0" stroke="#555" stroke-width=".7"/><g fill="#fff"><rect x="0" y="2" width="2.500" height="2.500"/><rect x="0" y="10" width="2.500" height="2.500"/><rect x="5.500" y="0" width="2.500" height="2.500"/></g></svg>
<svg style="left:1339.5px;top:1054.5px;" width="7.0" height="13.0" viewBox="0 0 7 13"><path d="M3.5 0.5 L6.5 5 H0.5Z M3.5 12.5 L6.5 8 H0.5Z" fill="#c8c8c8"/></svg>
<div class="bb" style="left:1349px;top:1052px;width:72px;height:19px;border-radius:0;"></div>
<div style="left:1356.5px;top:1054.0px;line-height:15px;font-size:11px;color:#e4e4e4;white-space:nowrap;letter-spacing:-0.097px;">Closest</div>
<svg style="left:1411.5px;top:1054.5px;" width="7.0" height="13.0" viewBox="0 0 7 13"><path d="M3.5 0.5 L6.5 5 H0.5Z M3.5 12.5 L6.5 8 H0.5Z" fill="#c8c8c8"/></svg>
<div class="bb" style="left:1420px;top:1052px;width:22px;height:19px;border-radius:0;background:#141413;"></div>
<svg style="left:1423.5px;top:1054.5px;" width="15" height="15" viewBox="0 0 15 15"><circle cx="7.500" cy="8" r="4.500" fill="#e8e8e8"/><path d="M1 4 V1 H4 M11 1 H14 V4 M14 11 V14 H11 M4 14 H1 V11" stroke="#f4f4f4" stroke-width="1.400" fill="none" stroke-dasharray="2 1"/></svg>
<div class="bb" style="left:1441px;top:1052px;width:22px;height:19px;border-radius:0 4px 4px 0;"></div>
<svg style="left:1444.5px;top:1054.5px;" width="15" height="15" viewBox="0 0 15 15"><circle cx="6.500" cy="9" r="4.500" fill="#d8dce8" stroke="#888" stroke-width=".6"/><path d="M8 7 L13 2" stroke="#4a80e0" stroke-width="2.400"/></svg>
<div class="bb" style="left:1469px;top:1052px;width:21px;height:19px;border-radius:4px;"></div>
<svg style="left:1472px;top:1054.5px;" width="15" height="15" viewBox="0 0 15 15"><path d="M13 2 L9 6 M9 6 V3 M9 6 H12" stroke="#f0f0f0" stroke-width="1.500" fill="none"/><path d="M2 13 L6 9 M6 9 V12 M6 9 H3" stroke="#e8d890" stroke-width="1.500" fill="none"/></svg>
<div class="bb" style="left:1495px;top:1052px;width:42px;height:19px;border-radius:4px;"></div>
<div style="left:1515.5px;top:1053px;width:1px;height:17px;background:#1a1a19;"></div>
<svg style="left:1498px;top:1054.5px;" width="16" height="15" viewBox="0 0 16 15"><rect x="1" y="4" width="13" height="9" rx="1" fill="#d0d0d0" stroke="#555" stroke-width=".8"/><circle cx="7.500" cy="8.500" r="3" fill="#444" stroke="#888"/><rect x="4" y="2" width="5" height="2.500" fill="#bbb"/><circle cx="13" cy="3" r="2" fill="#f0e060"/></svg>
<svg style="left:1518.5px;top:1054.5px;" width="16" height="15" viewBox="0 0 16 15"><rect x="1" y="5.500" width="13" height="8" fill="#d8d8d8" stroke="#555" stroke-width=".8"/><path d="M1 5 L13 1.500 L13.500 3.500 L1.500 7Z" fill="#eee" stroke="#555" stroke-width=".6"/><path d="M4 4 l1 2 M7.500 3 l1 2 M11 2 l1 2" stroke="#333"/><rect x="3" y="8" width="9" height="3.500" fill="#666"/></svg>
<div style="left:1637px;top:57px;width:2px;height:1018px;background:#141413;"></div>
<div style="left:1639px;top:57px;width:276px;height:26px;background:#3b3a39;border-top:1px solid #4a4948;"></div>
<svg style="left:1639px;top:71px;" width="12" height="12" viewBox="0 0 12 12"><path d="M0 0 L12 12 M0 4 L8 12 M0 8 L4 12" stroke="#565554" stroke-width="1"/></svg>
<svg style="left:1903px;top:57px;" width="12" height="12" viewBox="0 0 12 12"><path d="M0 0 L12 12 M4 0 L12 8 M8 0 L12 4" stroke="#565554" stroke-width="1"/></svg>
<div class="bb" style="left:1647px;top:61px;width:32px;height:19px;border-radius:4px;"></div>
<svg style="left:1652px;top:64px;" width="13" height="13" viewBox="0 0 13 13"><rect x="0" y="0" width="5" height="2.500" fill="#f0b040"/><path d="M2.500 2.500 V11 M2.500 6 H6 M2.500 11 H6" stroke="#ddd" stroke-width="1" fill="none"/><rect x="7" y="4.500" width="6" height="2.500" fill="#e8e8e8"/><rect x="7" y="9.500" width="6" height="2.500" fill="#e8e8e8"/></svg>
<svg style="left:1668.5px;top:64.5px;" width="7.0" height="13.0" viewBox="0 0 7 13"><path d="M3.5 0.5 L6.5 5 H0.5Z M3.5 12.5 L6.5 8 H0.5Z" fill="#c8c8c8"/></svg>
<div style="left:1691.0px;top:63.0px;line-height:15px;font-size:11px;color:#e4e4e4;white-space:nowrap;letter-spacing:0.339px;">View</div>
<div style="left:1736.5px;top:63.0px;line-height:15px;font-size:11px;color:#e4e4e4;white-space:nowrap;letter-spacing:0.025px;">Search</div>
<div class="bb" style="left:1785.5px;top:61px;width:119px;height:19px;border-radius:4px;"></div>
<div style="left:1793.0px;top:63.0px;line-height:15px;font-size:11px;color:#e4e4e4;white-space:nowrap;letter-spacing:-0.097px;">All Scenes</div>
<svg style="left:1894.5px;top:64.5px;" width="7.0" height="13.0" viewBox="0 0 7 13"><path d="M3.5 0.5 L6.5 5 H0.5Z M3.5 12.5 L6.5 8 H0.5Z" fill="#c8c8c8"/></svg>
<div style="left:1639px;top:83px;width:276px;height:144px;background:#3b3a39;"></div>
<div style="left:1639px;top:105px;width:276px;height:21px;background:#403f3e;"></div>
<div style="left:1639px;top:147px;width:276px;height:21px;background:#403f3e;"></div>
<div style="left:1639px;top:189px;width:276px;height:21px;background:#403f3e;"></div>
<div style="left:1639px;top:231px;width:276px;height:21px;background:#403f3e;"></div>
<div style="left:1639px;top:84px;width:213px;height:20.5px;background:#6c2e5f;"></div>
<div style="left:1852.5px;top:84px;width:1px;height:125px;background:#2c2b2a;"></div>
<div style="left:1873.5px;top:84px;width:1px;height:125px;background:#2c2b2a;"></div>
<div style="left:1894.5px;top:84px;width:1px;height:125px;background:#2c2b2a;"></div>
<svg style="left:1640px;top:84px;" width="80" height="90" viewBox="0 0 80 90"><path d="M10 10.500 H22 M24.500 20 V74.500 H46 M24.500 31.500 H30" stroke="#7a7978" stroke-width="1" fill="none"/></svg>
<svg style="left:1642.0px;top:89.5px;" width="9" height="9" viewBox="0 0 9 9"><circle cx="4.500" cy="4.500" r="3.600" fill="#2a2a29" stroke="#e0e0e0" stroke-width="1.300"/><path d="M2.500 4.500 H6.500" stroke="#e0e0e0" stroke-width="1.200"/></svg>
<svg style="left:1659px;top:84.5px;" width="20" height="20" viewBox="0 0 20 20"><circle cx="10" cy="10" r="9.500" fill="#b8a0b4" opacity=".55"/><circle cx="6.500" cy="5.500" r="2.200" fill="#f0e8a0"/><circle cx="8" cy="13" r="3.500" fill="#f0f0f0"/><rect x="11" y="4.500" width="4.500" height="8" rx="1.800" fill="#4a78d8"/></svg>
<div style="left:1681.5px;top:87.5px;line-height:15px;font-size:11px;color:#d4c4d0;white-space:nowrap;letter-spacing:-0.238px;">Scene</div>
<svg style="left:1668.0px;top:111.0px;" width="9" height="9" viewBox="0 0 9 9"><circle cx="4.500" cy="4.500" r="3.600" fill="#2a2a29" stroke="#e0e0e0" stroke-width="1.300"/><circle cx="4.500" cy="4.500" r="1" fill="#e0e0e0"/></svg>
<svg style="left:1682px;top:107px;" width="16" height="16" viewBox="0 0 16 16"><rect x="4" y="4" width="10" height="10" fill="#c8c4b4" stroke="#555" stroke-width=".6" transform="rotate(8 9 9)"/><rect x="1.500" y="1.500" width="10" height="10" fill="#f0f0f0" stroke="#666" stroke-width=".6"/><rect x="3" y="3" width="7" height="6" fill="#3a60c0"/><path d="M5 8 L7 4 L8 6" stroke="#fff" stroke-width=".8" fill="none"/></svg>
<div style="left:1702.5px;top:109.0px;line-height:15px;font-size:11px;color:#e4e4e4;white-space:nowrap;letter-spacing:-0.007px;">RenderLayers</div>
<div style="left:1781px;top:107px;width:2px;height:13px;background:#141413;"></div>
<svg style="left:1789.5px;top:104.5px;" width="21" height="21" viewBox="0 0 21 21"><circle cx="10.500" cy="10.500" r="10" fill="#6a6968" stroke="#9a9998" stroke-width=".8"/></svg>
<svg style="left:1792px;top:107.5px;" width="16" height="16" viewBox="0 0 16 16"><rect x="4" y="4" width="10" height="10" fill="#c8c4b4" stroke="#555" stroke-width=".6" transform="rotate(8 9 9)"/><rect x="1.500" y="1.500" width="10" height="10" fill="#f0f0f0" stroke="#666" stroke-width=".6"/><rect x="3" y="3" width="7" height="6" fill="#3a60c0"/><path d="M5 8 L7 4 L8 6" stroke="#fff" stroke-width=".8" fill="none"/></svg>
<svg style="left:1680px;top:126.5px;" width="20" height="20" viewBox="0 0 20 20"><circle cx="10" cy="10" r="9.500" fill="#5a6478"/><circle cx="10" cy="10" r="6.500" fill="#4a88d0"/><path d="M6 7 Q9 5 11 8 Q13 11 10 13 Q7 14 6 11Z" fill="#5ab060"/><path d="M5.500 8 Q8 5 11 5.500" stroke="#dff" stroke-width="1" fill="none"/></svg>
<div style="left:1702.5px;top:130.0px;line-height:15px;font-size:11px;color:#e4e4e4;white-space:nowrap;letter-spacing:0.295px;">World</div>
<svg style="left:1662.5px;top:153.5px;" width="9" height="9" viewBox="0 0 9 9"><circle cx="4.500" cy="4.500" r="3.600" fill="#2a2a29" stroke="#e0e0e0" stroke-width="1.300"/><circle cx="4.500" cy="4.500" r="1" fill="#e0e0e0"/></svg>
<svg style="left:1680px;top:148px;" width="20" height="20" viewBox="0 0 20 20"><circle cx="10" cy="10" r="9.500" fill="#d86c20"/><path d="M4.500 5.500 H15.500 L10 15.500Z" fill="none" stroke="#fbe8d0" stroke-width="1.700" stroke-linejoin="round"/></svg>
<div style="left:1702.5px;top:151.0px;line-height:15px;font-size:11px;color:#f08a40;white-space:nowrap;letter-spacing:-0.227px;">Plane</div>
<div style="left:1740px;top:150px;width:2px;height:13px;background:#141413;"></div>
<svg style="left:1749px;top:147.5px;" width="21" height="21" viewBox="0 0 21 21"><circle cx="10.500" cy="10.500" r="10" fill="#8a8988"/><path d="M5 6.500 H16 L10.500 16Z" fill="none" stroke="#d8d8d8" stroke-width="1"/><circle cx="5" cy="6.500" r="1.400" fill="#eee"/><circle cx="16" cy="6.500" r="1.400" fill="#eee"/><circle cx="10.500" cy="16" r="1.400" fill="#eee"/><circle cx="10.500" cy="6.500" r="1.200" fill="#eee"/></svg>
<svg style="left:1856px;top:152px;" width="15" height="12" viewBox="0 0 15 12"><path d="M0.500 6 Q7.500 -1.500 14.500 6 Q7.500 13 0.500 6Z" fill="#f4f4f4"/><circle cx="7.500" cy="6" r="2.600" fill="#222"/></svg>
<svg style="left:1879px;top:150px;" width="11" height="16" viewBox="0 0 11 16"><path d="M1 1 V12.500 L4 9.500 L6.500 15 L8.500 14 L6 9 H10Z" fill="#111" stroke="#e8e8e8" stroke-width=".9"/></svg>
<svg style="left:1897px;top:151.5px;" width="14" height="13" viewBox="0 0 14 13"><rect x="0.500" y="3" width="13" height="9.500" rx="1" fill="#d8d8d8" stroke="#333" stroke-width=".7"/><circle cx="7" cy="7.800" r="3" fill="#333" stroke="#999" stroke-width=".8"/><rect x="4" y="0.800" width="5" height="2.500" fill="#ccc"/></svg>
<div style="left:1643px;top:212px;width:267px;height:12px;background:#1b1b1a;border-radius:6px;border:1px solid #181817;"></div>
<div style="left:1643px;top:212px;width:236px;height:12px;background:linear-gradient(#3e3d3c,#2e2d2c);border-radius:6px;border:1px solid #1a1a19;"></div>
<svg style="left:1639px;top:213px;" width="12" height="12" viewBox="0 0 12 12"><path d="M0 0 L12 12 M0 4 L8 12 M0 8 L4 12" stroke="#565554" stroke-width="1"/></svg>
<div style="left:1639px;top:226px;width:276px;height:3px;background:#141413;"></div>
<div style="left:1639px;top:229px;width:276px;height:26px;background:#3b3a39;border-top:1px solid #4a4948;"></div>
<svg style="left:1903px;top:229px;" width="12" height="12" viewBox="0 0 12 12"><path d="M0 0 L12 12 M4 0 L12 8 M8 0 L12 4" stroke="#565554" stroke-width="1"/></svg>
<div class="bb" style="left:1647px;top:233px;width:32px;height:19px;border-radius:4px;"></div>
<svg style="left:1651px;top:236px;" width="15" height="13" viewBox="0 0 15 13"><rect x="0.500" y="0.500" width="14" height="5" rx="1.500" fill="none" stroke="#eee" stroke-width="1.300"/><rect x="0.500" y="7.500" width="14" height="5" rx="1.500" fill="none" stroke="#eee" stroke-width="1.300"/><rect x="8" y="1.500" width="5" height="3" fill="#eee"/><rect x="2" y="8.500" width="5" height="3" fill="#eee"/></svg>
<svg style="left:1668.5px;top:236.5px;" width="7.0" height="13.0" viewBox="0 0 7 13"><path d="M3.5 0.5 L6.5 5 H0.5Z M3.5 12.5 L6.5 8 H0.5Z" fill="#c8c8c8"/></svg>
<div style="left:1686px;top:233px;width:229px;height:20px;background:#1f1f1e;border:1px solid #141413;border-radius:4px 0 0 4px;border-right:none;"></div>
<div style="left:1706.5px;top:234px;width:1px;height:18px;background:#2e2d2c;"></div>
<div style="left:1727.5px;top:234px;width:1px;height:18px;background:#2e2d2c;"></div>
<div style="left:1748.5px;top:234px;width:1px;height:18px;background:#2e2d2c;"></div>
<div style="left:1769.5px;top:234px;width:1px;height:18px;background:#2e2d2c;"></div>
<div style="left:1790.5px;top:234px;width:1px;height:18px;background:#2e2d2c;"></div>
<div style="left:1811.5px;top:234px;width:1px;height:18px;background:#2e2d2c;"></div>
<div style="left:1832.5px;top:234px;width:1px;height:18px;background:#2e2d2c;"></div>
<div style="left:1853.5px;top:234px;width:1px;height:18px;background:#2e2d2c;"></div>
<div style="left:1874.5px;top:234px;width:1px;height:18px;background:#2e2d2c;"></div>
<div style="left:1895.5px;top:234px;width:1px;height:18px;background:#2e2d2c;"></div>
<div style="left:1855px;top:233.5px;width:20.5px;height:19px;background:#733262;"></div>
<svg style="left:1689px;top:235.5px;" width="15" height="15" viewBox="0 0 15 15"><rect x="1" y="5" width="13" height="8" rx="1" fill="#555" stroke="#999" stroke-width=".8"/><circle cx="7.500" cy="9" r="2.600" fill="#333" stroke="#aaa" stroke-width=".7"/><rect x="4" y="3" width="5" height="2.500" fill="#888"/></svg>
<svg style="left:1710px;top:235.5px;" width="15" height="15" viewBox="0 0 15 15"><rect x="5" y="5" width="9" height="9" fill="#c8c4b4" stroke="#555" stroke-width=".6"/><rect x="1.500" y="1.500" width="10" height="10" fill="#f0f0f0" stroke="#666" stroke-width=".6"/><rect x="3" y="3" width="7" height="6" fill="#3a60c0"/></svg>
<svg style="left:1731px;top:235.5px;" width="15" height="15" viewBox="0 0 15 15"><circle cx="4" cy="3.500" r="2" fill="#d8e080"/><circle cx="6.500" cy="11" r="3.200" fill="#b8b8b8"/><rect x="9" y="4" width="4" height="7.500" rx="1.700" fill="#4a70c0"/></svg>
<svg style="left:1752px;top:235.5px;" width="15" height="15" viewBox="0 0 15 15"><circle cx="7.500" cy="7.500" r="6" fill="#3f6596" stroke="#6a7a98" stroke-width=".8"/><path d="M4 5 Q7 3 9 6 Q10 9 7 10Z" fill="#5a8a78"/></svg>
<svg style="left:1773px;top:235.5px;" width="15" height="15" viewBox="0 0 15 15"><path d="M7.500 1 L14 4.500 V11 L7.500 14.500 L1 11 V4.500Z" fill="#b4723a" stroke="#6a4218" stroke-width=".7"/><path d="M1 4.500 L7.500 8 L14 4.500 L7.500 1Z" fill="#cc9660"/></svg>
<svg style="left:1794px;top:235.5px;" width="15" height="15" viewBox="0 0 15 15"><ellipse cx="5" cy="9.500" rx="3.500" ry="2.600" transform="rotate(-40 5 9.500)" fill="none" stroke="#b8b8b8" stroke-width="1.600"/><ellipse cx="10" cy="5.500" rx="3.500" ry="2.600" transform="rotate(-40 10 5.500)" fill="none" stroke="#b8b8b8" stroke-width="1.600"/></svg>
<svg style="left:1815px;top:235.5px;" width="15" height="15" viewBox="0 0 15 15"><path d="M2.500 13 L9 6.500" stroke="#6a8ac0" stroke-width="2.400" stroke-linecap="round"/><path d="M8 3 Q10 0.500 13 2 L10.500 4.500 L11.500 6 L14 4 Q14.500 7 12 8.500 Q9.500 9 8 7Z" fill="#8aa0c8"/></svg>
<svg style="left:1836px;top:235.5px;" width="15" height="15" viewBox="0 0 15 15"><path d="M2 3 H13 L7.500 13Z" fill="none" stroke="#d8d8d8" stroke-width="1"/><circle cx="2" cy="3" r="1.300" fill="#eee"/><circle cx="13" cy="3" r="1.300" fill="#eee"/><circle cx="7.500" cy="13" r="1.300" fill="#eee"/></svg>
<svg style="left:1857px;top:235.5px;" width="15" height="15" viewBox="0 0 15 15"><circle cx="7.500" cy="7.500" r="6.300" fill="#e8e4e4" stroke="#888" stroke-width=".6"/><path d="M7.500 7.500 L7.500 1.200 A6.300 6.300 0 0 1 13.800 7.500Z" fill="#d04848"/><path d="M7.500 7.500 L7.500 13.800 A6.300 6.300 0 0 1 1.200 7.500Z" fill="#d04848" opacity=".75"/></svg>
<svg style="left:1878px;top:235.5px;" width="15" height="15" viewBox="0 0 15 15"><rect x="1" y="1" width="13" height="13" fill="#e8d0d0"/><g fill="#a02828"><rect x="1" y="1" width="3.250" height="3.250"/><rect x="7.500" y="1" width="3.250" height="3.250"/><rect x="4.250" y="4.250" width="3.250" height="3.250"/><rect x="10.750" y="4.250" width="3.250" height="3.250"/><rect x="1" y="7.500" width="3.250" height="3.250"/><rect x="7.500" y="7.500" width="3.250" height="3.250"/><rect x="4.250" y="10.750" width="3.250" height="3.250"/><rect x="10.750" y="10.750" width="3.250" height="3.250"/></g></svg>
<svg style="left:1899px;top:235.5px;" width="15" height="15" viewBox="0 0 15 15"><path d="M4 1 V7 M1 4 H7 M11 3 V11 M7 7 H15 M5 9 V15 M2 12 H8" stroke="#e8e0a0" stroke-width="1.200"/></svg>
<div style="left:1639px;top:255px;width:276px;height:820px;background:#3d3b3a;"></div>
<svg style="left:1647px;top:266px;" width="16" height="16" viewBox="0 0 16 16"><path d="M2 14 L7 9" stroke="#ddd" stroke-width="1.600"/><path d="M5.500 6.500 L9.500 10.500 L11 8.500 L14 5.500 L10.500 2 L7.500 5Z" fill="#e8e8e8" stroke="#777" stroke-width=".6"/></svg>
<svg style="left:1672px;top:267px;" width="14" height="14" viewBox="0 0 14 14"><circle cx="4" cy="3.500" r="2.200" fill="#e8e49a"/><circle cx="6" cy="10" r="3.200" fill="#e8e8e8"/><rect x="8.500" y="3" width="4" height="7" rx="1.500" fill="#4a78d0"/></svg>
<div style="left:1695.0px;top:266.5px;line-height:15px;font-size:11px;color:#555;white-space:nowrap;">›</div>
<svg style="left:1715px;top:267.5px;" width="13" height="13" viewBox="0 0 13 13"><g opacity="1"><path d="M6.500 0.500 L12.500 3.500 V9.500 L6.500 12.500 L0.500 9.500 V3.500Z" fill="#f0a040" stroke="#a06010" stroke-width=".7"/><path d="M0.500 3.500 L6.500 6.500 L12.500 3.500 L6.500 0.500Z" fill="#fad8a0"/><path d="M0.500 3.500 L6.500 6.500 V12.500" stroke="#fff2d8" stroke-width=".8" fill="none"/></g></svg>
<div style="left:1734.0px;top:267.0px;line-height:15px;font-size:11px;color:#b0b0b0;white-space:nowrap;letter-spacing:-0.227px;">Plane</div>
<div style="left:1779.0px;top:266.5px;line-height:15px;font-size:11px;color:#555;white-space:nowrap;">›</div>
<svg style="left:1799.5px;top:267.5px;" width="13" height="13" viewBox="0 0 13 13"><circle cx="6.500" cy="6.500" r="6" fill="#e8e4e4" stroke="#888" stroke-width=".6"/><path d="M6.500 6.500 L6.500 0.500 A6 6 0 0 1 12.500 6.500Z" fill="#d04848"/><path d="M6.500 6.500 L6.500 12.500 A6 6 0 0 1 0.500 6.500Z" fill="#c85858" opacity=".8"/></svg>
<div style="left:1818.0px;top:267.0px;line-height:15px;font-size:11px;color:#b0b0b0;white-space:nowrap;">0</div>
<div style="left:1647px;top:300.5px;width:213px;height:43px;background:#262524;border:1px solid #1c1c1b;border-radius:4px;"></div>
<div style="left:1652px;top:309px;width:203px;height:19.5px;background:#733262;border-radius:3px;"></div>
<svg style="left:1655.5px;top:311px;" width="15" height="15" viewBox="0 0 15 15"><defs><radialGradient id="mb" cx=".4" cy=".35" r=".7"><stop offset="0" stop-color="#fff"/><stop offset=".5" stop-color="#ccc"/><stop offset="1" stop-color="#777"/></radialGradient></defs><circle cx="7.500" cy="7.500" r="7" fill="url(#mb)"/></svg>
<div style="left:1675.0px;top:311.5px;line-height:15px;font-size:11px;color:#e8d8e4;white-space:nowrap;">0</div>
<svg style="left:1656.5px;top:330.5px;" width="8" height="8" viewBox="0 0 8 8"><circle cx="4" cy="4" r="3" fill="none" stroke="#8a8988" stroke-width="1.300"/><circle cx="4" cy="4" r="1" fill="#8a8988"/></svg>
<svg style="left:1756px;top:333px;" width="13" height="5" viewBox="0 0 13 5"><path d="M0 1 H13 M0 4 H13" stroke="#9a9998" stroke-width="1"/></svg>
<div class="bb" style="left:1869px;top:301.5px;width:20px;height:21px;border-radius:4px 4px 0 0;"></div>
<div class="bb" style="left:1869px;top:322.5px;width:20px;height:21px;border-radius:0;"></div>
<div class="bb" style="left:1869px;top:343.5px;width:20px;height:20px;border-radius:0 0 4px 4px;"></div>
<svg style="left:1873px;top:306px;" width="12" height="12" viewBox="0 0 12 12"><path d="M6 1 V11 M1 6 H11" stroke="#f0f0f0" stroke-width="2"/></svg>
<svg style="left:1873px;top:327px;" width="12" height="12" viewBox="0 0 12 12"><path d="M1.500 6 H10.500" stroke="#f0f0f0" stroke-width="2"/></svg>
<svg style="left:1874px;top:349px;" width="10" height="10" viewBox="0 0 10 10"><path d="M1 1.500 H9 L5 9Z" fill="#1a1a19" stroke="#9a9a9a" stroke-width=".8"/></svg>
<div class="bb" style="left:1647.0px;top:369px;width:80.67px;height:20px;border-radius:4px 0 0 4px;"></div>
<div style="left:1670.8px;top:372.0px;line-height:15px;font-size:11px;color:#e4e4e4;white-space:nowrap;">Assign</div>
<div class="bb" style="left:1727.67px;top:369px;width:80.67px;height:20px;border-radius:0;"></div>
<div style="left:1752.7px;top:372.0px;line-height:15px;font-size:11px;color:#e4e4e4;white-space:nowrap;">Select</div>
<div class="bb" style="left:1808.34px;top:369px;width:80.66px;height:20px;border-radius:0 4px 4px 0;"></div>
<div style="left:1827.2px;top:372.0px;line-height:15px;font-size:11px;color:#e4e4e4;white-space:nowrap;">Deselect</div>
<div class="bb" style="left:1647px;top:395px;width:151px;height:20px;border-radius:4px;background:linear-gradient(#2d2c2b,#343332);"></div>
<div class="bb" style="left:1647px;top:395px;width:29px;height:20px;border-radius:4px 0 0 4px;"></div>
<svg style="left:1651px;top:398.5px;" width="13" height="13" viewBox="0 0 13 13"><circle cx="6.500" cy="6.500" r="6" fill="#e8e4e4" stroke="#888" stroke-width=".6"/><path d="M6.500 6.500 L6.500 0.500 A6 6 0 0 1 12.500 6.500Z" fill="#d04848"/><path d="M6.500 6.500 L6.500 12.500 A6 6 0 0 1 0.500 6.500Z" fill="#c85858" opacity=".8"/></svg>
<svg style="left:1666.0px;top:398.5px;" width="7.0" height="13.0" viewBox="0 0 7 13"><path d="M3.5 0.5 L6.5 5 H0.5Z M3.5 12.5 L6.5 8 H0.5Z" fill="#c8c8c8"/></svg>
<div style="left:1686.0px;top:398.0px;line-height:15px;font-size:11px;color:#e4e4e4;white-space:nowrap;">0</div>
<div style="left:1716px;top:396px;width:22px;height:18px;background:#3a3938;"></div>
<div style="left:1723.9px;top:398.0px;line-height:15px;font-size:11px;color:#7a7978;white-space:nowrap;">2</div>
<div style="left:1738px;top:396px;width:20px;height:18px;background:#191918;"></div>
<div style="left:1744.6px;top:398.0px;line-height:15px;font-size:11px;color:#e4e4e4;white-space:nowrap;">F</div>
<div class="bb" style="left:1758px;top:395px;width:20px;height:20px;border-radius:0;"></div>
<div class="bb" style="left:1778px;top:395px;width:20px;height:20px;border-radius:0 4px 4px 0;"></div>
<svg style="left:1762px;top:399px;" width="12" height="12" viewBox="0 0 12 12"><path d="M6 1 V11 M1 6 H11" stroke="#f0f0f0" stroke-width="2"/></svg>
<svg style="left:1782.5px;top:399.5px;" width="11" height="11" viewBox="0 0 11 11"><path d="M1.500 1.500 L9.500 9.500 M9.500 1.500 L1.500 9.500" stroke="#f0f0f0" stroke-width="2"/></svg>
<div class="bb" style="left:1808px;top:395px;width:20px;height:20px;border-radius:4px;"></div>
<svg style="left:1811px;top:398px;" width="14" height="14" viewBox="0 0 14 14"><rect x="3" y="0.500" width="6" height="4.500" fill="#eee" stroke="#555" stroke-width=".6"/><rect x="0.500" y="8.500" width="6" height="4.500" fill="#eee" stroke="#555" stroke-width=".6"/><path d="M10 3 Q13 3 13 7 Q13 11 8 11" stroke="#5a8ae0" stroke-width="1.300" fill="none"/></svg>
<div class="bb" style="left:1837px;top:395px;width:52px;height:20px;border-radius:4px;"></div>
<div style="left:1844.0px;top:398.0px;line-height:15px;font-size:11px;color:#e4e4e4;white-space:nowrap;letter-spacing:-0.059px;">Data</div>
<svg style="left:1879.0px;top:398.5px;" width="7.0" height="13.0" viewBox="0 0 7 13"><path d="M3.5 0.5 L6.5 5 H0.5Z M3.5 12.5 L6.5 8 H0.5Z" fill="#c8c8c8"/></svg>
<div class="bb" style="left:1647px;top:421px;width:59px;height:20.5px;border-radius:4px 0 0 4px;background:#733262;"></div>
<div style="left:1657.5px;top:424.0px;line-height:15px;font-size:11px;color:#f0e0ec;white-space:nowrap;">Surface</div>
<div class="bb" style="left:1706px;top:421px;width:61px;height:20.5px;border-radius:0;background:linear-gradient(#1c1c1b,#222221);"></div>
<div style="left:1725.2px;top:424.0px;line-height:15px;font-size:11px;color:#e4e4e4;white-space:nowrap;">Wire</div>
<div class="bb" style="left:1767px;top:421px;width:60px;height:20.5px;border-radius:0;background:linear-gradient(#1c1c1b,#222221);"></div>
<div style="left:1778.7px;top:424.0px;line-height:15px;font-size:11px;color:#e4e4e4;white-space:nowrap;">Volume</div>
<div class="bb" style="left:1827px;top:421px;width:62px;height:20.5px;border-radius:0 4px 4px 0;background:linear-gradient(#1c1c1b,#222221);"></div>
<div style="left:1846.7px;top:424.0px;line-height:15px;font-size:11px;color:#e4e4e4;white-space:nowrap;">Halo</div>
<svg style="left:1651px;top:459.0px;" width="9" height="9" viewBox="0 0 9 9"><path d="M0.8 0.8 H8.2 L4.5 8Z" fill="#9a9a9a"/></svg>
<div style="left:1665.0px;top:453.0px;line-height:18px;font-size:12.5px;color:#adadad;white-space:nowrap;letter-spacing:-0.065px;">Preview</div>
<svg style="left:1874px;top:460px;" width="10" height="6" viewBox="0 0 10 6"><g fill="#454443"><rect x="0" y="0" width="1" height="1"/><rect x="3" y="0" width="1" height="1"/><rect x="6" y="0" width="1" height="1"/><rect x="9" y="0" width="1" height="1"/><rect x="0" y="3" width="1" height="1"/><rect x="3" y="3" width="1" height="1"/><rect x="6" y="3" width="1" height="1"/><rect x="9" y="3" width="1" height="1"/></g></svg>
<div style="left:1646.5px;top:483.5px;width:204px;height:112px;background:#1c1c1b;border:1px solid #1c1c1b;border-radius:4px;overflow:hidden;"><svg style="left:0;top:0" width="203" height="111" viewBox="0 0 203 111"><rect width="203" height="111" fill="#656466"/><polygon points="101.0,27.5 90.7,25.1 101.0,22.3 111.3,25.1" fill="#2f2f30"/><polygon points="111.3,25.1 101.0,22.3 113.5,18.9 123.6,22.3" fill="#9b999d"/><polygon points="123.6,22.3 113.5,18.9 129.0,14.7 138.5,18.9" fill="#2f2f30"/><polygon points="138.5,18.9 129.0,14.7 148.6,9.3 156.9,14.7" fill="#9b999d"/><polygon points="156.9,14.7 148.6,9.3 174.5,2.2 180.4,9.3" fill="#2f2f30"/><polygon points="180.4,9.3 174.5,2.2 210.0,-7.5 211.2,2.2" fill="#9b999d"/><polygon points="211.2,2.2 210.0,-7.5 261.8,-21.6 253.6,-7.5" fill="#2f2f30"/><polygon points="253.6,-7.5 261.8,-21.6 344.4,-44.1 315.4,-21.6" fill="#9b999d"/><polygon points="315.4,-21.6 344.4,-44.1 496.9,-85.8 413.9,-44.1" fill="#2f2f30"/><polygon points="413.9,-44.1 496.9,-85.8 873.4,-188.5 595.9,-85.8" fill="#9b999d"/><polygon points="90.7,25.1 78.4,22.3 88.5,18.9 101.0,22.3" fill="#9b999d"/><polygon points="101.0,22.3 88.5,18.9 101.0,14.7 113.5,18.9" fill="#2f2f30"/><polygon points="113.5,18.9 101.0,14.7 116.9,9.3 129.0,14.7" fill="#9b999d"/><polygon points="129.0,14.7 116.9,9.3 137.7,2.2 148.6,9.3" fill="#2f2f30"/><polygon points="148.6,9.3 137.7,2.2 166.4,-7.5 174.5,2.2" fill="#9b999d"/><polygon points="174.5,2.2 166.4,-7.5 208.2,-21.6 210.0,-7.5" fill="#2f2f30"/><polygon points="210.0,-7.5 208.2,-21.6 274.8,-44.1 261.8,-21.6" fill="#9b999d"/><polygon points="261.8,-21.6 274.8,-44.1 397.9,-85.8 344.4,-44.1" fill="#2f2f30"/><polygon points="344.4,-44.1 397.9,-85.8 701.8,-188.5 496.9,-85.8" fill="#9b999d"/><polygon points="78.4,22.3 63.5,18.9 73.0,14.7 88.5,18.9" fill="#2f2f30"/><polygon points="88.5,18.9 73.0,14.7 85.1,9.3 101.0,14.7" fill="#9b999d"/><polygon points="101.0,14.7 85.1,9.3 101.0,2.2 116.9,9.3" fill="#2f2f30"/><polygon points="116.9,9.3 101.0,2.2 122.8,-7.5 137.7,2.2" fill="#9b999d"/><polygon points="137.7,2.2 122.8,-7.5 154.6,-21.6 166.4,-7.5" fill="#2f2f30"/><polygon points="166.4,-7.5 154.6,-21.6 205.3,-44.1 208.2,-21.6" fill="#9b999d"/><polygon points="208.2,-21.6 205.3,-44.1 299.0,-85.8 274.8,-44.1" fill="#2f2f30"/><polygon points="274.8,-44.1 299.0,-85.8 530.1,-188.5 397.9,-85.8" fill="#9b999d"/><polygon points="63.5,18.9 45.1,14.7 53.4,9.3 73.0,14.7" fill="#9b999d"/><polygon points="73.0,14.7 53.4,9.3 64.3,2.2 85.1,9.3" fill="#2f2f30"/><polygon points="85.1,9.3 64.3,2.2 79.2,-7.5 101.0,2.2" fill="#9b999d"/><polygon points="101.0,2.2 79.2,-7.5 101.0,-21.6 122.8,-7.5" fill="#2f2f30"/><polygon points="122.8,-7.5 101.0,-21.6 135.8,-44.1 154.6,-21.6" fill="#9b999d"/><polygon points="154.6,-21.6 135.8,-44.1 200.0,-85.8 205.3,-44.1" fill="#2f2f30"/><polygon points="205.3,-44.1 200.0,-85.8 358.5,-188.5 299.0,-85.8" fill="#9b999d"/><polygon points="45.1,14.7 21.6,9.3 27.5,2.2 53.4,9.3" fill="#2f2f30"/><polygon points="53.4,9.3 27.5,2.2 35.6,-7.5 64.3,2.2" fill="#9b999d"/><polygon points="64.3,2.2 35.6,-7.5 47.4,-21.6 79.2,-7.5" fill="#2f2f30"/><polygon points="79.2,-7.5 47.4,-21.6 66.2,-44.1 101.0,-21.6" fill="#9b999d"/><polygon points="101.0,-21.6 66.2,-44.1 101.0,-85.8 135.8,-44.1" fill="#2f2f30"/><polygon points="135.8,-44.1 101.0,-85.8 186.8,-188.5 200.0,-85.8" fill="#9b999d"/><polygon points="21.6,9.3 -9.2,2.2 -8.0,-7.5 27.5,2.2" fill="#9b999d"/><polygon points="27.5,2.2 -8.0,-7.5 -6.2,-21.6 35.6,-7.5" fill="#2f2f30"/><polygon points="35.6,-7.5 -6.2,-21.6 -3.3,-44.1 47.4,-21.6" fill="#9b999d"/><polygon points="47.4,-21.6 -3.3,-44.1 2.0,-85.8 66.2,-44.1" fill="#2f2f30"/><polygon points="66.2,-44.1 2.0,-85.8 15.2,-188.5 101.0,-85.8" fill="#9b999d"/><polygon points="-9.2,2.2 -51.6,-7.5 -59.8,-21.6 -8.0,-7.5" fill="#2f2f30"/><polygon points="-8.0,-7.5 -59.8,-21.6 -72.8,-44.1 -6.2,-21.6" fill="#9b999d"/><polygon points="-6.2,-21.6 -72.8,-44.1 -97.0,-85.8 -3.3,-44.1" fill="#2f2f30"/><polygon points="-3.3,-44.1 -97.0,-85.8 -156.5,-188.5 2.0,-85.8" fill="#9b999d"/><polygon points="-51.6,-7.5 -113.4,-21.6 -142.4,-44.1 -59.8,-21.6" fill="#9b999d"/><polygon points="-59.8,-21.6 -142.4,-44.1 -195.9,-85.8 -72.8,-44.1" fill="#2f2f30"/><polygon points="-72.8,-44.1 -195.9,-85.8 -328.1,-188.5 -97.0,-85.8" fill="#9b999d"/><polygon points="-113.4,-21.6 -211.9,-44.1 -294.9,-85.8 -142.4,-44.1" fill="#2f2f30"/><polygon points="-142.4,-44.1 -294.9,-85.8 -499.8,-188.5 -195.9,-85.8" fill="#9b999d"/><polygon points="-211.9,-44.1 -393.9,-85.8 -671.4,-188.5 -294.9,-85.8" fill="#9b999d"/><polygon points="101.0,80.9 90.7,83.3 101.0,86.1 111.3,83.3" fill="#9b999d"/><polygon points="111.3,83.3 101.0,86.1 113.5,89.5 123.6,86.1" fill="#2f2f30"/><polygon points="123.6,86.1 113.5,89.5 129.0,93.7 138.5,89.5" fill="#9b999d"/><polygon points="138.5,89.5 129.0,93.7 148.6,99.1 156.9,93.7" fill="#2f2f30"/><polygon points="156.9,93.7 148.6,99.1 174.5,106.2 180.4,99.1" fill="#9b999d"/><polygon points="180.4,99.1 174.5,106.2 210.0,115.9 211.2,106.2" fill="#2f2f30"/><polygon points="211.2,106.2 210.0,115.9 261.8,130.0 253.6,115.9" fill="#9b999d"/><polygon points="253.6,115.9 261.8,130.0 344.4,152.5 315.4,130.0" fill="#2f2f30"/><polygon points="315.4,130.0 344.4,152.5 496.9,194.2 413.9,152.5" fill="#9b999d"/><polygon points="413.9,152.5 496.9,194.2 873.4,296.9 595.9,194.2" fill="#2f2f30"/><polygon points="90.7,83.3 78.4,86.1 88.5,89.5 101.0,86.1" fill="#2f2f30"/><polygon points="101.0,86.1 88.5,89.5 101.0,93.7 113.5,89.5" fill="#9b999d"/><polygon points="113.5,89.5 101.0,93.7 116.9,99.1 129.0,93.7" fill="#2f2f30"/><polygon points="129.0,93.7 116.9,99.1 137.7,106.2 148.6,99.1" fill="#9b999d"/><polygon points="148.6,99.1 137.7,106.2 166.4,115.9 174.5,106.2" fill="#2f2f30"/><polygon points="174.5,106.2 166.4,115.9 208.2,130.0 210.0,115.9" fill="#9b999d"/><polygon points="210.0,115.9 208.2,130.0 274.8,152.5 261.8,130.0" fill="#2f2f30"/><polygon points="261.8,130.0 274.8,152.5 397.9,194.2 344.4,152.5" fill="#9b999d"/><polygon points="344.4,152.5 397.9,194.2 701.8,296.9 496.9,194.2" fill="#2f2f30"/><polygon points="78.4,86.1 63.5,89.5 73.0,93.7 88.5,89.5" fill="#9b999d"/><polygon points="88.5,89.5 73.0,93.7 85.1,99.1 101.0,93.7" fill="#2f2f30"/><polygon points="101.0,93.7 85.1,99.1 101.0,106.2 116.9,99.1" fill="#9b999d"/><polygon points="116.9,99.1 101.0,106.2 122.8,115.9 137.7,106.2" fill="#2f2f30"/><polygon points="137.7,106.2 122.8,115.9 154.6,130.0 166.4,115.9" fill="#9b999d"/><polygon points="166.4,115.9 154.6,130.0 205.3,152.5 208.2,130.0" fill="#2f2f30"/><polygon points="208.2,130.0 205.3,152.5 299.0,194.2 274.8,152.5" fill="#9b999d"/><polygon points="274.8,152.5 299.0,194.2 530.1,296.9 397.9,194.2" fill="#2f2f30"/><polygon points="63.5,89.5 45.1,93.7 53.4,99.1 73.0,93.7" fill="#2f2f30"/><polygon points="73.0,93.7 53.4,99.1 64.3,106.2 85.1,99.1" fill="#9b999d"/><polygon points="85.1,99.1 64.3,106.2 79.2,115.9 101.0,106.2" fill="#2f2f30"/><polygon points="101.0,106.2 79.2,115.9 101.0,130.0 122.8,115.9" fill="#9b999d"/><polygon points="122.8,115.9 101.0,130.0 135.8,152.5 154.6,130.0" fill="#2f2f30"/><polygon points="154.6,130.0 135.8,152.5 200.0,194.2 205.3,152.5" fill="#9b999d"/><polygon points="205.3,152.5 200.0,194.2 358.5,296.9 299.0,194.2" fill="#2f2f30"/><polygon points="45.1,93.7 21.6,99.1 27.5,106.2 53.4,99.1" fill="#9b999d"/><polygon points="53.4,99.1 27.5,106.2 35.6,115.9 64.3,106.2" fill="#2f2f30"/><polygon points="64.3,106.2 35.6,115.9 47.4,130.0 79.2,115.9" fill="#9b999d"/><polygon points="79.2,115.9 47.4,130.0 66.2,152.5 101.0,130.0" fill="#2f2f30"/><polygon points="101.0,130.0 66.2,152.5 101.0,194.2 135.8,152.5" fill="#9b999d"/><polygon points="135.8,152.5 101.0,194.2 186.8,296.9 200.0,194.2" fill="#2f2f30"/><polygon points="21.6,99.1 -9.2,106.2 -8.0,115.9 27.5,106.2" fill="#2f2f30"/><polygon points="27.5,106.2 -8.0,115.9 -6.2,130.0 35.6,115.9" fill="#9b999d"/><polygon points="35.6,115.9 -6.2,130.0 -3.3,152.5 47.4,130.0" fill="#2f2f30"/><polygon points="47.4,130.0 -3.3,152.5 2.0,194.2 66.2,152.5" fill="#9b999d"/><polygon points="66.2,152.5 2.0,194.2 15.2,296.9 101.0,194.2" fill="#2f2f30"/><polygon points="-9.2,106.2 -51.6,115.9 -59.8,130.0 -8.0,115.9" fill="#9b999d"/><polygon points="-8.0,115.9 -59.8,130.0 -72.8,152.5 -6.2,130.0" fill="#2f2f30"/><polygon points="-6.2,130.0 -72.8,152.5 -97.0,194.2 -3.3,152.5" fill="#9b999d"/><polygon points="-3.3,152.5 -97.0,194.2 -156.5,296.9 2.0,194.2" fill="#2f2f30"/><polygon points="-51.6,115.9 -113.4,130.0 -142.4,152.5 -59.8,130.0" fill="#2f2f30"/><polygon points="-59.8,130.0 -142.4,152.5 -195.9,194.2 -72.8,152.5" fill="#9b999d"/><polygon points="-72.8,152.5 -195.9,194.2 -328.1,296.9 -97.0,194.2" fill="#2f2f30"/><polygon points="-113.4,130.0 -211.9,152.5 -294.9,194.2 -142.4,152.5" fill="#9b999d"/><polygon points="-142.4,152.5 -294.9,194.2 -499.8,296.9 -195.9,194.2" fill="#2f2f30"/><polygon points="-211.9,152.5 -393.9,194.2 -671.4,296.9 -294.9,194.2" fill="#2f2f30"/><polygon points="101.0,27.5 90.7,25.1 90.7,39.6 101.0,40.8" fill="#9b999d"/><polygon points="101.0,40.8 90.7,39.6 90.7,54.2 101.0,54.2" fill="#2f2f30"/><polygon points="101.0,54.2 90.7,54.2 90.7,68.8 101.0,67.6" fill="#9b999d"/><polygon points="101.0,67.6 90.7,68.8 90.7,83.3 101.0,80.9" fill="#2f2f30"/><polygon points="90.7,25.1 78.4,22.3 78.4,38.2 90.7,39.6" fill="#2f2f30"/><polygon points="90.7,39.6 78.4,38.2 78.4,54.2 90.7,54.2" fill="#9b999d"/><polygon points="90.7,54.2 78.4,54.2 78.4,70.2 90.7,68.8" fill="#2f2f30"/><polygon points="90.7,68.8 78.4,70.2 78.4,86.1 90.7,83.3" fill="#9b999d"/><polygon points="78.4,22.3 63.5,18.9 63.5,36.5 78.4,38.2" fill="#9b999d"/><polygon points="78.4,38.2 63.5,36.5 63.5,54.2 78.4,54.2" fill="#2f2f30"/><polygon points="78.4,54.2 63.5,54.2 63.5,71.9 78.4,70.2" fill="#9b999d"/><polygon points="78.4,70.2 63.5,71.9 63.5,89.5 78.4,86.1" fill="#2f2f30"/><polygon points="63.5,18.9 45.1,14.7 45.1,34.4 63.5,36.5" fill="#2f2f30"/><polygon points="63.5,36.5 45.1,34.4 45.1,54.2 63.5,54.2" fill="#9b999d"/><polygon points="63.5,54.2 45.1,54.2 45.1,74.0 63.5,71.9" fill="#2f2f30"/><polygon points="63.5,71.9 45.1,74.0 45.1,93.7 63.5,89.5" fill="#9b999d"/><polygon points="45.1,14.7 21.6,9.3 21.6,31.7 45.1,34.4" fill="#9b999d"/><polygon points="45.1,34.4 21.6,31.7 21.6,54.2 45.1,54.2" fill="#2f2f30"/><polygon points="45.1,54.2 21.6,54.2 21.6,76.7 45.1,74.0" fill="#9b999d"/><polygon points="45.1,74.0 21.6,76.7 21.6,99.1 45.1,93.7" fill="#2f2f30"/><polygon points="21.6,9.3 -9.2,2.2 -9.2,28.2 21.6,31.7" fill="#2f2f30"/><polygon points="21.6,31.7 -9.2,28.2 -9.2,54.2 21.6,54.2" fill="#9b999d"/><polygon points="21.6,54.2 -9.2,54.2 -9.2,80.2 21.6,76.7" fill="#2f2f30"/><polygon points="21.6,76.7 -9.2,80.2 -9.2,106.2 21.6,99.1" fill="#9b999d"/><polygon points="-9.2,2.2 -51.6,-7.5 -51.6,23.4 -9.2,28.2" fill="#9b999d"/><polygon points="-9.2,28.2 -51.6,23.4 -51.6,54.2 -9.2,54.2" fill="#2f2f30"/><polygon points="-9.2,54.2 -51.6,54.2 -51.6,85.0 -9.2,80.2" fill="#9b999d"/><polygon points="-9.2,80.2 -51.6,85.0 -51.6,115.9 -9.2,106.2" fill="#2f2f30"/><polygon points="-51.6,-7.5 -113.4,-21.6 -113.4,16.3 -51.6,23.4" fill="#2f2f30"/><polygon points="-51.6,23.4 -113.4,16.3 -113.4,54.2 -51.6,54.2" fill="#9b999d"/><polygon points="-51.6,54.2 -113.4,54.2 -113.4,92.1 -51.6,85.0" fill="#2f2f30"/><polygon points="-51.6,85.0 -113.4,92.1 -113.4,130.0 -51.6,115.9" fill="#9b999d"/><polygon points="-113.4,-21.6 -211.9,-44.1 -211.9,5.0 -113.4,16.3" fill="#9b999d"/><polygon points="-113.4,16.3 -211.9,5.0 -211.9,54.2 -113.4,54.2" fill="#2f2f30"/><polygon points="-113.4,54.2 -211.9,54.2 -211.9,103.4 -113.4,92.1" fill="#9b999d"/><polygon points="-113.4,92.1 -211.9,103.4 -211.9,152.5 -113.4,130.0" fill="#2f2f30"/><polygon points="-211.9,-44.1 -393.9,-85.8 -393.9,-15.8 -211.9,5.0" fill="#2f2f30"/><polygon points="-211.9,5.0 -393.9,-15.8 -393.9,54.2 -211.9,54.2" fill="#9b999d"/><polygon points="-211.9,54.2 -393.9,54.2 -393.9,124.2 -211.9,103.4" fill="#2f2f30"/><polygon points="-211.9,103.4 -393.9,124.2 -393.9,194.2 -211.9,152.5" fill="#9b999d"/><polygon points="-393.9,-85.8 -843.0,-188.5 -843.0,-67.2 -393.9,-15.8" fill="#9b999d"/><polygon points="-393.9,-15.8 -843.0,-67.2 -843.0,54.2 -393.9,54.2" fill="#2f2f30"/><polygon points="-393.9,54.2 -843.0,54.2 -843.0,175.6 -393.9,124.2" fill="#9b999d"/><polygon points="-393.9,124.2 -843.0,175.6 -843.0,296.9 -393.9,194.2" fill="#2f2f30"/><polygon points="-843.0,-188.5 -3681.5,-837.4 -3681.5,-391.6 -843.0,-67.2" fill="#2f2f30"/><polygon points="-843.0,-67.2 -3681.5,-391.6 -3681.5,54.2 -843.0,54.2" fill="#9b999d"/><polygon points="-843.0,54.2 -3681.5,54.2 -3681.5,500.0 -843.0,175.6" fill="#2f2f30"/><polygon points="-843.0,175.6 -3681.5,500.0 -3681.5,945.8 -843.0,296.9" fill="#9b999d"/><polygon points="101.0,27.5 111.3,25.1 111.3,39.6 101.0,40.8" fill="#9b999d"/><polygon points="101.0,40.8 111.3,39.6 111.3,54.2 101.0,54.2" fill="#2f2f30"/><polygon points="101.0,54.2 111.3,54.2 111.3,68.8 101.0,67.6" fill="#9b999d"/><polygon points="101.0,67.6 111.3,68.8 111.3,83.3 101.0,80.9" fill="#2f2f30"/><polygon points="111.3,25.1 123.6,22.3 123.6,38.2 111.3,39.6" fill="#2f2f30"/><polygon points="111.3,39.6 123.6,38.2 123.6,54.2 111.3,54.2" fill="#9b999d"/><polygon points="111.3,54.2 123.6,54.2 123.6,70.2 111.3,68.8" fill="#2f2f30"/><polygon points="111.3,68.8 123.6,70.2 123.6,86.1 111.3,83.3" fill="#9b999d"/><polygon points="123.6,22.3 138.5,18.9 138.5,36.5 123.6,38.2" fill="#9b999d"/><polygon points="123.6,38.2 138.5,36.5 138.5,54.2 123.6,54.2" fill="#2f2f30"/><polygon points="123.6,54.2 138.5,54.2 138.5,71.9 123.6,70.2" fill="#9b999d"/><polygon points="123.6,70.2 138.5,71.9 138.5,89.5 123.6,86.1" fill="#2f2f30"/><polygon points="138.5,18.9 156.9,14.7 156.9,34.4 138.5,36.5" fill="#2f2f30"/><polygon points="138.5,36.5 156.9,34.4 156.9,54.2 138.5,54.2" fill="#9b999d"/><polygon points="138.5,54.2 156.9,54.2 156.9,74.0 138.5,71.9" fill="#2f2f30"/><polygon points="138.5,71.9 156.9,74.0 156.9,93.7 138.5,89.5" fill="#9b999d"/><polygon points="156.9,14.7 180.4,9.3 180.4,31.7 156.9,34.4" fill="#9b999d"/><polygon points="156.9,34.4 180.4,31.7 180.4,54.2 156.9,54.2" fill="#2f2f30"/><polygon points="156.9,54.2 180.4,54.2 180.4,76.7 156.9,74.0" fill="#9b999d"/><polygon points="156.9,74.0 180.4,76.7 180.4,99.1 156.9,93.7" fill="#2f2f30"/><polygon points="180.4,9.3 211.2,2.2 211.2,28.2 180.4,31.7" fill="#2f2f30"/><polygon points="180.4,31.7 211.2,28.2 211.2,54.2 180.4,54.2" fill="#9b999d"/><polygon points="180.4,54.2 211.2,54.2 211.2,80.2 180.4,76.7" fill="#2f2f30"/><polygon points="180.4,76.7 211.2,80.2 211.2,106.2 180.4,99.1" fill="#9b999d"/><polygon points="211.2,2.2 253.6,-7.5 253.6,23.4 211.2,28.2" fill="#9b999d"/><polygon points="211.2,28.2 253.6,23.4 253.6,54.2 211.2,54.2" fill="#2f2f30"/><polygon points="211.2,54.2 253.6,54.2 253.6,85.0 211.2,80.2" fill="#9b999d"/><polygon points="211.2,80.2 253.6,85.0 253.6,115.9 211.2,106.2" fill="#2f2f30"/><polygon points="253.6,-7.5 315.4,-21.6 315.4,16.3 253.6,23.4" fill="#2f2f30"/><polygon points="253.6,23.4 315.4,16.3 315.4,54.2 253.6,54.2" fill="#9b999d"/><polygon points="253.6,54.2 315.4,54.2 315.4,92.1 253.6,85.0" fill="#2f2f30"/><polygon points="253.6,85.0 315.4,92.1 315.4,130.0 253.6,115.9" fill="#9b999d"/><polygon points="315.4,-21.6 413.9,-44.1 413.9,5.0 315.4,16.3" fill="#9b999d"/><polygon points="315.4,16.3 413.9,5.0 413.9,54.2 315.4,54.2" fill="#2f2f30"/><polygon points="315.4,54.2 413.9,54.2 413.9,103.4 315.4,92.1" fill="#9b999d"/><polygon points="315.4,92.1 413.9,103.4 413.9,152.5 315.4,130.0" fill="#2f2f30"/><polygon points="413.9,-44.1 595.9,-85.8 595.9,-15.8 413.9,5.0" fill="#2f2f30"/><polygon points="413.9,5.0 595.9,-15.8 595.9,54.2 413.9,54.2" fill="#9b999d"/><polygon points="413.9,54.2 595.9,54.2 595.9,124.2 413.9,103.4" fill="#2f2f30"/><polygon points="413.9,103.4 595.9,124.2 595.9,194.2 413.9,152.5" fill="#9b999d"/><polygon points="595.9,-85.8 1045.0,-188.5 1045.0,-67.2 595.9,-15.8" fill="#9b999d"/><polygon points="595.9,-15.8 1045.0,-67.2 1045.0,54.2 595.9,54.2" fill="#2f2f30"/><polygon points="595.9,54.2 1045.0,54.2 1045.0,175.6 595.9,124.2" fill="#9b999d"/><polygon points="595.9,124.2 1045.0,175.6 1045.0,296.9 595.9,194.2" fill="#2f2f30"/><polygon points="1045.0,-188.5 3883.5,-837.4 3883.5,-391.6 1045.0,-67.2" fill="#2f2f30"/><polygon points="1045.0,-67.2 3883.5,-391.6 3883.5,54.2 1045.0,54.2" fill="#9b999d"/><polygon points="1045.0,54.2 3883.5,54.2 3883.5,500.0 1045.0,175.6" fill="#2f2f30"/><polygon points="1045.0,175.6 3883.5,500.0 3883.5,945.8 1045.0,296.9" fill="#9b999d"/><defs><radialGradient id="sph" cx="0.40" cy="0.33" r="0.72" fx="0.37" fy="0.29"><stop offset="0" stop-color="#ffffff"/><stop offset="0.08" stop-color="#f0f0f0"/><stop offset="0.22" stop-color="#cccbcc"/><stop offset="0.55" stop-color="#b4b3b4"/><stop offset="0.82" stop-color="#929192"/><stop offset="1" stop-color="#6e6d6e"/></radialGradient></defs><ellipse cx="101" cy="105" rx="34" ry="5" fill="#1c1c1c" opacity=".75"/><circle cx="101" cy="55.500" r="50" fill="url(#sph)"/></svg></div>
<svg style="left:1741px;top:600px;" width="14" height="5" viewBox="0 0 14 5"><path d="M0 1 H14 M0 4 H14" stroke="#c8c8c8" stroke-width="1"/></svg>
<div style="left:1858.5px;top:484px;width:31px;height:125px;background:#1f1f1e;border:1px solid #141413;border-radius:4px;"></div>
<div style="left:1859.5px;top:504.8px;width:29px;height:1px;background:#2e2d2c;"></div>
<div style="left:1859.5px;top:525.6px;width:29px;height:1px;background:#2e2d2c;"></div>
<div style="left:1859.5px;top:546.4px;width:29px;height:1px;background:#2e2d2c;"></div>
<div style="left:1859.5px;top:567.2px;width:29px;height:1px;background:#2e2d2c;"></div>
<div style="left:1859.5px;top:588.0px;width:29px;height:1px;background:#2e2d2c;"></div>
<div style="left:1859.5px;top:505px;width:29px;height:20.5px;background:#733262;"></div>
<svg style="left:1866.5px;top:487.0px;" width="15" height="15" viewBox="0 0 15 15"><defs><linearGradient id="pf" x1="0" y1="0" x2="1" y2="1"><stop offset="0" stop-color="#6a6a6a"/><stop offset="1" stop-color="#b8b8b8"/></linearGradient></defs><rect x="2" y="2" width="11" height="11" fill="url(#pf)" stroke="#ccc" stroke-width=".6"/></svg>
<svg style="left:1866.5px;top:507.8px;" width="15" height="15" viewBox="0 0 15 15"><defs><radialGradient id="ps" cx=".4" cy=".35" r=".7"><stop offset="0" stop-color="#fff"/><stop offset=".6" stop-color="#ddd"/><stop offset="1" stop-color="#888"/></radialGradient></defs><circle cx="7.500" cy="7.500" r="6" fill="url(#ps)" stroke="#f4f4f4" stroke-width=".8"/></svg>
<svg style="left:1866.5px;top:528.6px;" width="15" height="15" viewBox="0 0 15 15"><path d="M7.500 1.500 L13 4.500 V10.500 L7.500 13.500 L2 10.500 V4.500Z" fill="#8a8a8a" stroke="#555" stroke-width=".5"/><path d="M2 4.500 L7.500 7.500 L13 4.500 L7.500 1.500Z" fill="#b0b0b0"/></svg>
<svg style="left:1866.5px;top:549.4px;" width="15" height="15" viewBox="0 0 15 15"><path d="M2 5 Q2 2.500 4.500 3 Q7.500 1 10.500 3 Q13 2.500 13 5 Q12.500 7 10.500 7.500 L10 12.500 H5 L4.500 7.500 Q2.500 7 2 5Z" fill="#b8b8b4"/></svg>
<svg style="left:1866.5px;top:570.2px;" width="15" height="15" viewBox="0 0 15 15"><path d="M3 13 Q3 5 6 2 M7 13 Q7 6 10 4 M11 13 Q11 9 13 7" stroke="#d0d0cc" stroke-width="1.300" fill="none"/></svg>
<svg style="left:1866.5px;top:591.0px;" width="15" height="15" viewBox="0 0 15 15"><circle cx="6" cy="9.500" r="4.500" fill="#a8a8a8"/><circle cx="11" cy="5" r="2.500" fill="#787878"/><circle cx="3.500" cy="3.500" r="1.800" fill="#b0c060"/></svg>
<svg style="left:1651px;top:626.5px;" width="9" height="9" viewBox="0 0 9 9"><path d="M0.8 0.8 H8.2 L4.5 8Z" fill="#9a9a9a"/></svg>
<div style="left:1665.0px;top:620.5px;line-height:18px;font-size:12.5px;color:#adadad;white-space:nowrap;letter-spacing:0.189px;">Diffuse</div>
<svg style="left:1874px;top:628px;" width="10" height="6" viewBox="0 0 10 6"><g fill="#454443"><rect x="0" y="0" width="1" height="1"/><rect x="3" y="0" width="1" height="1"/><rect x="6" y="0" width="1" height="1"/><rect x="9" y="0" width="1" height="1"/><rect x="0" y="3" width="1" height="1"/><rect x="3" y="3" width="1" height="1"/><rect x="6" y="3" width="1" height="1"/><rect x="9" y="3" width="1" height="1"/></g></svg>
<div style="left:1647px;top:651px;width:117px;height:20px;background:#ece9ec;border:1px solid #1c1c1b;border-radius:4px;"></div>
<div class="bb" style="left:1772px;top:651px;width:117px;height:20px;border-radius:4px;"></div>
<div style="left:1779.0px;top:654.0px;line-height:15px;font-size:11px;color:#e4e4e4;white-space:nowrap;letter-spacing:-0.050px;">Lambert</div>
<svg style="left:1879.0px;top:654.5px;" width="7.0" height="13.0" viewBox="0 0 7 13"><path d="M3.5 0.5 L6.5 5 H0.5Z M3.5 12.5 L6.5 8 H0.5Z" fill="#c8c8c8"/></svg>
<div style="left:1647px;top:674px;width:117px;height:20px;border-radius:10px;border:1px solid #141413;background:linear-gradient(90deg,#733262 93.6px,#1b1b1a 93.6px);box-shadow:inset 0 1px 2px rgba(0,0,0,.4),0 1px 0 rgba(255,255,255,.06);"></div>
<div style="left:1660.0px;top:677.0px;line-height:15px;font-size:11px;color:#e4e4e4;white-space:nowrap;">Intensity:</div>
<div style="left:1715.2px;top:677.0px;line-height:15px;font-size:11px;color:#e4e4e4;white-space:nowrap;letter-spacing:0.661px;">0.800</div>
<div style="left:1775.5px;top:677px;width:14px;height:14px;border-radius:4px;border:1px solid #1d1d1c;background:linear-gradient(#2c2b29,#32312f);"></div>
<div style="left:1797.0px;top:677.0px;line-height:15px;font-size:11px;color:#8c8c8c;white-space:nowrap;">Ramp</div>
<svg style="left:1651px;top:717.5px;" width="9" height="9" viewBox="0 0 9 9"><path d="M0.8 0.8 H8.2 L4.5 8Z" fill="#9a9a9a"/></svg>
<div style="left:1665.0px;top:711.5px;line-height:18px;font-size:12.5px;color:#adadad;white-space:nowrap;letter-spacing:-0.042px;">Specular</div>
<svg style="left:1874px;top:719px;" width="10" height="6" viewBox="0 0 10 6"><g fill="#454443"><rect x="0" y="0" width="1" height="1"/><rect x="3" y="0" width="1" height="1"/><rect x="6" y="0" width="1" height="1"/><rect x="9" y="0" width="1" height="1"/><rect x="0" y="3" width="1" height="1"/><rect x="3" y="3" width="1" height="1"/><rect x="6" y="3" width="1" height="1"/><rect x="9" y="3" width="1" height="1"/></g></svg>
<div style="left:1647px;top:742px;width:117px;height:20px;background:#fff;border:1px solid #1c1c1b;border-radius:4px;"></div>
<div class="bb" style="left:1772px;top:742px;width:117px;height:20px;border-radius:4px;"></div>
<div style="left:1779.0px;top:745.0px;line-height:15px;font-size:11px;color:#e4e4e4;white-space:nowrap;letter-spacing:0.047px;">CookTorr</div>
<svg style="left:1879.0px;top:745.5px;" width="7.0" height="13.0" viewBox="0 0 7 13"><path d="M3.5 0.5 L6.5 5 H0.5Z M3.5 12.5 L6.5 8 H0.5Z" fill="#c8c8c8"/></svg>
<div style="left:1647px;top:764.5px;width:117px;height:20px;border-radius:10px;border:1px solid #141413;background:linear-gradient(90deg,#733262 62.0px,#1b1b1a 62.0px);box-shadow:inset 0 1px 2px rgba(0,0,0,.4),0 1px 0 rgba(255,255,255,.06);"></div>
<div style="left:1660.0px;top:767.5px;line-height:15px;font-size:11px;color:#e4e4e4;white-space:nowrap;">Intensity:</div>
<div style="left:1715.2px;top:767.5px;line-height:15px;font-size:11px;color:#e4e4e4;white-space:nowrap;letter-spacing:0.661px;">0.500</div>
<div style="left:1775.5px;top:767.5px;width:14px;height:14px;border-radius:4px;border:1px solid #1d1d1c;background:linear-gradient(#2c2b29,#32312f);"></div>
<div style="left:1797.0px;top:767.5px;line-height:15px;font-size:11px;color:#8c8c8c;white-space:nowrap;">Ramp</div>
<div class="nf" style="left:1647px;top:791px;width:242px;height:20px;border-radius:10px;"></div>
<svg style="left:1652px;top:798.0px;" width="5" height="7" viewBox="0 0 5 7"><path d="M4.5 0.5 V6.5 L0.5 3.5Z" fill="#c8c8c8"/></svg>
<svg style="left:1879px;top:798.0px;" width="5" height="7" viewBox="0 0 5 7"><path d="M0.5 0.5 V6.5 L4.5 3.5Z" fill="#c8c8c8"/></svg>
<div style="left:1662.0px;top:794.0px;line-height:15px;font-size:11px;color:#e4e4e4;white-space:nowrap;">Hardness:</div>
<div style="left:1857.3px;top:794.0px;line-height:15px;font-size:11px;color:#e4e4e4;white-space:nowrap;letter-spacing:0.734px;">50</div>
<svg style="left:1651px;top:828.5px;" width="9" height="9" viewBox="0 0 9 9"><path d="M0.8 0.8 H8.2 L4.5 8Z" fill="#9a9a9a"/></svg>
<div style="left:1665.0px;top:822.5px;line-height:18px;font-size:12.5px;color:#adadad;white-space:nowrap;letter-spacing:0.018px;">Shading</div>
<svg style="left:1874px;top:830px;" width="10" height="6" viewBox="0 0 10 6"><g fill="#454443"><rect x="0" y="0" width="1" height="1"/><rect x="3" y="0" width="1" height="1"/><rect x="6" y="0" width="1" height="1"/><rect x="9" y="0" width="1" height="1"/><rect x="0" y="3" width="1" height="1"/><rect x="3" y="3" width="1" height="1"/><rect x="6" y="3" width="1" height="1"/><rect x="9" y="3" width="1" height="1"/></g></svg>
<div class="nf" style="left:1647px;top:853px;width:117px;height:20px;border-radius:10px;"></div>
<svg style="left:1652px;top:860.0px;" width="5" height="7" viewBox="0 0 5 7"><path d="M4.5 0.5 V6.5 L0.5 3.5Z" fill="#c8c8c8"/></svg>
<svg style="left:1754px;top:860.0px;" width="5" height="7" viewBox="0 0 5 7"><path d="M0.5 0.5 V6.5 L4.5 3.5Z" fill="#c8c8c8"/></svg>
<div style="left:1662.0px;top:856.0px;line-height:15px;font-size:11px;color:#e4e4e4;white-space:nowrap;">Emit:</div>
<div style="left:1722.0px;top:856.0px;line-height:15px;font-size:11px;color:#e4e4e4;white-space:nowrap;letter-spacing:0.642px;">0.00</div>
<div style="left:1647px;top:876px;width:117px;height:20px;border-radius:10px;border:1px solid #141413;background:linear-gradient(90deg,#733262 117.0px,#1b1b1a 117.0px);box-shadow:inset 0 1px 2px rgba(0,0,0,.4),0 1px 0 rgba(255,255,255,.06);"></div>
<div style="left:1661.0px;top:879.0px;line-height:15px;font-size:11px;color:#e4e4e4;white-space:nowrap;">Ambient:</div>
<div style="left:1716.2px;top:879.0px;line-height:15px;font-size:11px;color:#e4e4e4;white-space:nowrap;letter-spacing:0.661px;">1.000</div>
<div style="left:1647px;top:899px;width:117px;height:20px;border-radius:10px;border:1px solid #141413;background:linear-gradient(90deg,#733262 9.4px,#1b1b1a 9.4px);box-shadow:inset 0 1px 2px rgba(0,0,0,.4),0 1px 0 rgba(255,255,255,.06);"></div>
<div style="left:1661.0px;top:902.0px;line-height:15px;font-size:11px;color:#e4e4e4;white-space:nowrap;">Transluce:</div>
<div style="left:1716.2px;top:902.0px;line-height:15px;font-size:11px;color:#e4e4e4;white-space:nowrap;letter-spacing:0.661px;">0.000</div>
<div style="left:1775.5px;top:855.5px;width:14px;height:14px;border-radius:4px;border:1px solid #1d1d1c;background:linear-gradient(#2c2b29,#32312f);"></div>
<div style="left:1797.0px;top:856.0px;line-height:15px;font-size:11px;color:#8c8c8c;white-space:nowrap;">Shadeless</div>
<div style="left:1775.5px;top:878.5px;width:14px;height:14px;border-radius:4px;border:1px solid #1d1d1c;background:linear-gradient(#2c2b29,#32312f);"></div>
<div style="left:1797.0px;top:879.0px;line-height:15px;font-size:11px;color:#8c8c8c;white-space:nowrap;">Tangent Shading</div>
<div style="left:1775.5px;top:901.5px;width:14px;height:14px;border-radius:4px;border:1px solid #1d1d1c;background:linear-gradient(#2c2b29,#32312f);"></div>
<div style="left:1797.0px;top:902.0px;line-height:15px;font-size:11px;color:#8c8c8c;white-space:nowrap;">Cubic Interpolat...</div>
<svg style="left:1651px;top:936.5px;" width="9" height="9" viewBox="0 0 9 9"><path d="M0.8 0.8 H8.2 L4.5 8Z" fill="#9a9a9a"/></svg>
<div style="left:1664.5px;top:933px;width:14px;height:14px;border-radius:4px;border:1px solid #1d1d1c;background:linear-gradient(#2c2b29,#32312f);"></div>
<div style="left:1686.0px;top:931.5px;line-height:18px;font-size:12.5px;color:#b8b8b8;white-space:nowrap;letter-spacing:-0.079px;">Transparency</div>
<svg style="left:1874px;top:938px;" width="10" height="6" viewBox="0 0 10 6"><g fill="#454443"><rect x="0" y="0" width="1" height="1"/><rect x="3" y="0" width="1" height="1"/><rect x="6" y="0" width="1" height="1"/><rect x="9" y="0" width="1" height="1"/><rect x="0" y="3" width="1" height="1"/><rect x="3" y="3" width="1" height="1"/><rect x="6" y="3" width="1" height="1"/><rect x="9" y="3" width="1" height="1"/></g></svg>
<div class="bb" style="left:1647px;top:961px;width:80.5px;height:20px;border-radius:4px 0 0 4px;background:linear-gradient(#2c2b2a,#302f2e);border-color:#252423;"></div>
<div style="left:1674.1px;top:964.0px;line-height:15px;font-size:11px;color:#9a98a0;white-space:nowrap;">Mask</div>
<div class="bb" style="left:1727.5px;top:961px;width:81.0px;height:20px;border-radius:0;background:#5a3352;border-color:#252423;"></div>
<div style="left:1729.8px;top:964.0px;line-height:15px;font-size:11px;color:#b8a8b4;white-space:nowrap;">Z Transparency</div>
<div class="bb" style="left:1808.5px;top:961px;width:80.5px;height:20px;border-radius:0 4px 4px 0;background:linear-gradient(#2c2b2a,#302f2e);border-color:#252423;"></div>
<div style="left:1826.7px;top:964.0px;line-height:15px;font-size:11px;color:#9a98a0;white-space:nowrap;">Raytrace</div>
<div style="left:1647px;top:988.5px;width:117px;height:19px;border-radius:10px;border:1px solid #141413;background:linear-gradient(90deg,#4e2a46 117.0px,#2b2a29 117.0px);box-shadow:inset 0 1px 2px rgba(0,0,0,.4),0 1px 0 rgba(255,255,255,.06);"></div>
<div style="left:1661.0px;top:991.0px;line-height:15px;font-size:11px;color:#9a98a0;white-space:nowrap;">Alpha:</div>
<div style="left:1716.2px;top:991.0px;line-height:15px;font-size:11px;color:#9a98a0;white-space:nowrap;letter-spacing:0.661px;">1.000</div>
<div style="left:1647px;top:1012px;width:117px;height:19px;border-radius:10px;border:1px solid #141413;background:linear-gradient(90deg,#4e2a46 117.0px,#2b2a29 117.0px);box-shadow:inset 0 1px 2px rgba(0,0,0,.4),0 1px 0 rgba(255,255,255,.06);"></div>
<div style="left:1661.0px;top:1014.5px;line-height:15px;font-size:11px;color:#9a98a0;white-space:nowrap;">Specular:</div>
<div style="left:1716.2px;top:1014.5px;line-height:15px;font-size:11px;color:#9a98a0;white-space:nowrap;letter-spacing:0.661px;">1.000</div>
<div class="nf" style="left:1772px;top:988.5px;width:117px;height:19px;border-radius:10px;"></div>
<svg style="left:1777px;top:995.0px;" width="5" height="7" viewBox="0 0 5 7"><path d="M4.5 0.5 V6.5 L0.5 3.5Z" fill="#c8c8c8"/></svg>
<svg style="left:1879px;top:995.0px;" width="5" height="7" viewBox="0 0 5 7"><path d="M0.5 0.5 V6.5 L4.5 3.5Z" fill="#c8c8c8"/></svg>
<div style="left:1787.0px;top:991.0px;line-height:15px;font-size:11px;color:#9a98a0;white-space:nowrap;">Fresnel:</div>
<div style="left:1840.2px;top:991.0px;line-height:15px;font-size:11px;color:#9a98a0;white-space:nowrap;letter-spacing:0.661px;">0.000</div>
<div style="left:1772px;top:1012px;width:117px;height:19px;border-radius:10px;border:1px solid #141413;background:linear-gradient(90deg,#4e2a46 11.7px,#2b2a29 11.7px);box-shadow:inset 0 1px 2px rgba(0,0,0,.4),0 1px 0 rgba(255,255,255,.06);"></div>
<div style="left:1787.0px;top:1014.5px;line-height:15px;font-size:11px;color:#9a98a0;white-space:nowrap;">Blend:</div>
<div style="left:1841.2px;top:1014.5px;line-height:15px;font-size:11px;color:#9a98a0;white-space:nowrap;letter-spacing:0.661px;">1.250</div>
<svg style="left:1652px;top:1046.5px;" width="9" height="9" viewBox="0 0 9 9"><path d="M0.5 0.5 V8.5 L8.5 4.5Z" fill="#9a9a9a"/></svg>
<div style="left:1664.5px;top:1044px;width:14px;height:14px;border-radius:4px;border:1px solid #1d1d1c;background:linear-gradient(#2c2b29,#32312f);"></div>
<div style="left:1686.0px;top:1042.5px;line-height:18px;font-size:12.5px;color:#b8b8b8;white-space:nowrap;letter-spacing:0.229px;">Mirror</div>
<svg style="left:1874px;top:1049px;" width="10" height="6" viewBox="0 0 10 6"><g fill="#454443"><rect x="0" y="0" width="1" height="1"/><rect x="3" y="0" width="1" height="1"/><rect x="6" y="0" width="1" height="1"/><rect x="9" y="0" width="1" height="1"/><rect x="0" y="3" width="1" height="1"/><rect x="3" y="3" width="1" height="1"/><rect x="6" y="3" width="1" height="1"/><rect x="9" y="3" width="1" height="1"/></g></svg>
<div style="left:1664.5px;top:1070px;width:14px;height:5px;background:#2d2c2b;border:1px solid #1d1d1c;border-radius:3px 3px 0 0;border-bottom:none;"></div>
<div style="left:1897.5px;top:260px;width:12.5px;height:810px;background:#1e1e1d;border-radius:6px;border:1px solid #181817;"></div>
<div style="left:1897.5px;top:260px;width:12.5px;height:575px;background:linear-gradient(90deg,#444342,#363534);border-radius:6px;border:1px solid #1a1a19;"></div>
<svg style="left:1639px;top:1062px;" width="12" height="12" viewBox="0 0 12 12"><path d="M0 0 L12 12 M0 4 L8 12 M0 8 L4 12" stroke="#565554" stroke-width="1"/></svg>
<div style="left:668px;top:0px;width:1248px;height:1075px;background:none;border:1px solid #5f8fb4;border-top-color:#777;"></div>
</div></body></html>
